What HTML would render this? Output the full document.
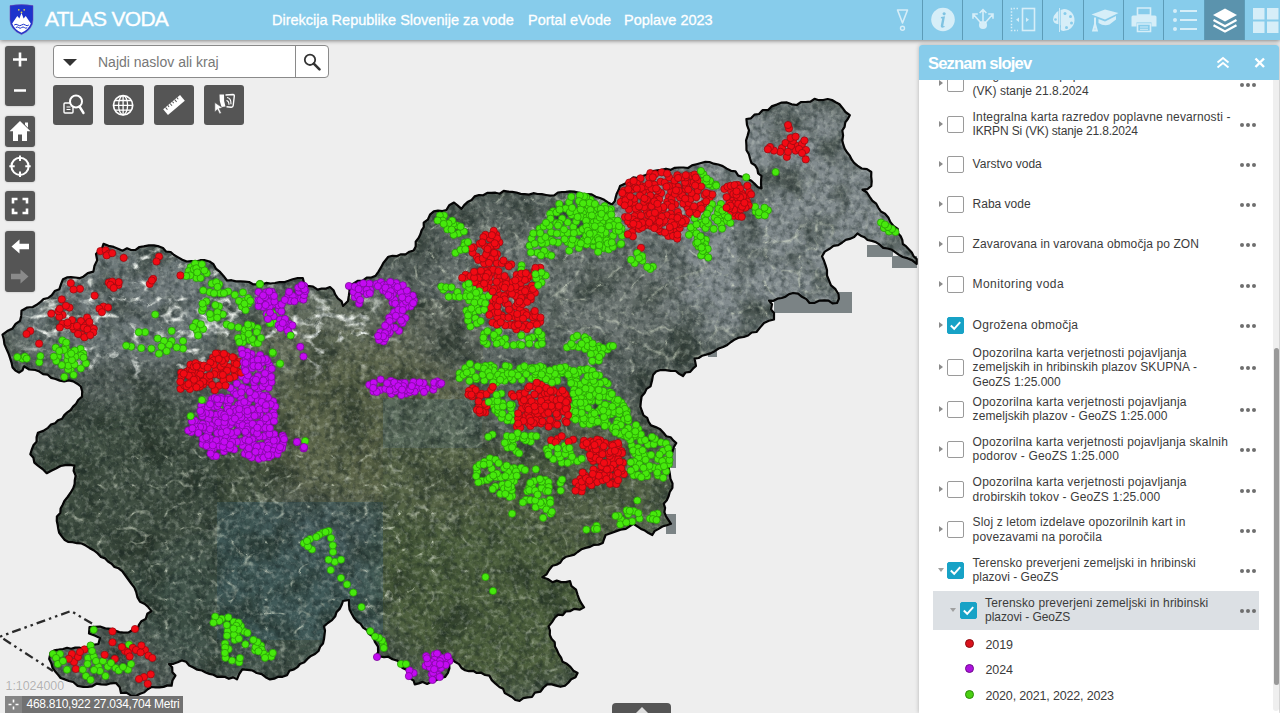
<!DOCTYPE html>
<html lang="sl">
<head>
<meta charset="utf-8">
<title>Atlas voda</title>
<style>
*{box-sizing:border-box;margin:0;padding:0}
html,body{width:1280px;height:713px;overflow:hidden;background:#eeeeee;font-family:"Liberation Sans",sans-serif;}
#app{position:relative;width:1280px;height:713px;overflow:hidden;background:#eeeeee}
#map{position:absolute;left:0;top:0;width:1280px;height:713px}
#hdr{position:absolute;left:0;top:0;width:1280px;height:40px;background:#87cceb;box-shadow:0 1px 4px rgba(0,0,0,.45);z-index:5}
#hdr .title{position:absolute;left:45px;top:5.6px;font-size:21px;line-height:26px;color:#fff;white-space:nowrap;letter-spacing:-0.72px;-webkit-text-stroke:0.35px #fff}
#hdr .lnk{position:absolute;top:11px;font-size:14.5px;line-height:18px;color:#fff;white-space:nowrap;-webkit-text-stroke:0.3px #fff}
.hic{position:absolute;top:0;width:40px;height:40px;border-left:1px solid #5d9cb8}
.hic svg{position:absolute;left:0;top:0;width:40px;height:40px}
.hic.act{background:#5b93ad}
.lb{position:absolute;left:5px;width:30px;background:#555;border-radius:3px;box-shadow:0 0 2px rgba(0,0,0,.3)}
.lb svg{position:absolute;left:0}
.tb{position:absolute;top:85px;width:40px;height:40px;background:#555;border-radius:3px}
.tb svg{position:absolute;left:0;top:0}
#srch{position:absolute;left:53px;top:45px;width:276px;height:33px;background:#fff;border:1px solid #8a8a8a;border-radius:4px}
#srch .ph{position:absolute;left:44px;top:7px;font-size:14px;line-height:18px;color:#777;white-space:nowrap}
#srch .dv{position:absolute;left:241px;top:0;width:1px;height:31px;background:#8a8a8a}
#panel{position:absolute;left:919px;top:45px;width:360px;height:668px;background:#fff;border-radius:3px 3px 0 0;box-shadow:0 0 4px rgba(0,0,0,.25);overflow:hidden;z-index:4}
#panel .ph{position:absolute;left:0;top:0;width:360px;height:35px;background:#87cceb;z-index:2}
#panel .ph .tt{position:absolute;left:9px;top:8.8px;font-size:16.6px;line-height:20px;font-weight:bold;color:#fff;white-space:nowrap;letter-spacing:-0.85px}
.row{position:absolute;left:0;width:354px;display:block}
.row .ar{position:absolute;left:20px;width:0;height:0;border-left:4px solid #8a8a8a;border-top:3.5px solid transparent;border-bottom:3.5px solid transparent}
.row .ad{position:absolute;width:0;height:0;border-top:4px solid #a0a0a0;border-left:3.5px solid transparent;border-right:3.5px solid transparent}
.cb{position:absolute;width:17px;height:17px;border:1px solid #9a9a9a;border-radius:2px;background:#fff}
.cb.on{background:#17a2c6;border-color:#17a2c6}
.cb svg{position:absolute;left:-1px;top:-1px}
.tx{position:absolute;font-size:12px;line-height:14.4px;color:#3b3b3b;white-space:nowrap}
.tx span{display:block}
.dd{position:absolute;left:320.5px;width:17px;height:5px}
.dd i{position:absolute;top:0;width:4px;height:4px;border-radius:2px;background:#6e6e6e}
.lg{position:absolute;left:46px;width:9px;height:9px;border-radius:5px}
.lt{position:absolute;left:66.5px;font-size:12.5px;line-height:15px;color:#3b3b3b;white-space:nowrap}
#sbt{position:absolute;left:354px;top:35px;width:6px;height:631px;background:#efefef;border-radius:0 0 3px 3px}
#sbh{position:absolute;left:354.5px;top:303px;width:5.5px;height:337px;background:#999;border-radius:3px}
#scale{position:absolute;left:5.5px;top:678.5px;font-size:12.4px;line-height:15px;color:#b2b2b2;white-space:nowrap;text-shadow:0 0 1px #fff}
#coord{position:absolute;left:5px;top:696px;width:178px;height:17px;background:#717171;color:#fff;font-size:12px;line-height:17px;white-space:nowrap}
#coord .ic{position:absolute;left:0;top:0;width:17px;height:17px;background:#858585}
#coord .v{position:absolute;left:21.5px;top:0;letter-spacing:-0.26px}
#btab{position:absolute;left:612px;top:703px;width:59px;height:12px;background:#555;border-radius:4px 4px 0 0}
#btab:after{content:"";position:absolute;left:24px;top:4px;border-bottom:6px solid #ddd;border-left:6px solid transparent;border-right:6px solid transparent}
circle.r{fill:#f20a14;stroke:#9c0a10;stroke-width:.8}
circle.g{fill:#46e90c;stroke:#2a9a08;stroke-width:.8}
circle.p{fill:#c40af2;stroke:#7d0a9c;stroke-width:.8}
</style>
</head>
<body>
<div id="app">
<svg id="map" width="1280" height="713" viewBox="0 0 1280 713"><defs>
<clipPath id="slo"><path d="M2.5 334.7 L7.3 331.1 L12.6 328.4 L15.6 323.9 L20.0 320.9 L21.2 315.9 L21.5 310.8 L26.7 307.7 L32.8 307.0 L36.7 304.8 L40.2 302.2 L43.5 299.1 L48.0 298.0 L51.8 295.1 L54.7 291.1 L59.3 289.3 L61.0 284.2 L63.0 279.2 L66.9 277.4 L71.0 277.0 L75.2 277.5 L79.4 278.2 L83.3 276.7 L87.8 273.1 L93.4 271.6 L94.5 265.7 L97.2 260.3 L96.0 254.0 L98.8 250.9 L102.1 248.1 L103.5 243.9 L108.5 245.8 L113.7 246.9 L118.6 248.9 L122.6 250.7 L127.0 248.3 L131.0 250.0 L135.6 249.8 L139.4 247.0 L143.8 246.4 L148.9 245.3 L153.9 245.3 L159.0 246.4 L163.0 248.1 L166.0 251.5 L170.7 252.0 L174.0 255.0 L178.2 257.4 L182.3 259.7 L186.8 261.5 L191.3 261.1 L195.9 261.6 L200.4 260.2 L205.0 260.2 L209.5 261.5 L213.5 264.2 L215.9 268.6 L219.6 271.6 L223.5 275.9 L227.0 280.5 L231.5 280.2 L235.9 281.4 L240.4 281.3 L244.8 281.7 L249.1 282.0 L253.0 284.3 L257.4 284.3 L261.8 284.6 L266.1 282.9 L270.6 283.5 L275.0 283.0 L279.4 282.1 L284.1 282.2 L288.4 280.8 L292.7 279.2 L297.7 278.0 L302.8 278.0 L304.0 282.7 L307.6 285.8 L313.1 286.6 L317.7 289.6 L321.7 288.5 L326.1 288.6 L330.0 287.0 L333.5 290.2 L335.3 294.6 L337.9 298.4 L341.6 301.4 L343.0 306.0 L348.0 301.0 L348.8 296.0 L349.5 290.9 L349.0 285.8 L353.6 283.5 L358.0 280.8 L362.7 280.6 L366.7 277.7 L371.4 277.5 L375.7 275.7 L378.5 271.6 L381.0 267.4 L383.3 263.0 L388.3 256.8 L392.5 255.8 L397.0 256.1 L401.0 254.3 L405.6 254.3 L409.4 251.7 L413.6 250.5 L415.7 246.5 L415.7 241.6 L418.6 237.9 L420.4 234.3 L421.6 230.4 L423.8 227.0 L423.7 222.7 L427.8 219.6 L430.0 214.7 L433.8 211.4 L438.0 210.6 L442.3 211.0 L446.4 210.0 L449.2 205.2 L454.0 202.5 L457.8 205.6 L461.5 208.8 L464.2 205.1 L467.5 202.1 L471.6 200.0 L474.6 196.4 L479.0 195.0 L483.2 195.3 L487.2 192.9 L491.3 192.8 L495.5 192.7 L499.8 193.7 L503.7 190.8 L508.0 191.6 L512.2 191.8 L516.4 192.5 L520.6 193.9 L524.8 194.1 L529.0 194.6 L533.4 193.2 L537.6 194.0 L541.8 194.2 L546.0 195.0 L550.1 195.7 L554.2 195.4 L557.9 192.5 L561.9 192.1 L565.9 191.8 L569.9 191.3 L574.0 191.6 L578.3 192.6 L582.6 194.0 L587.2 194.1 L591.7 194.4 L595.7 196.7 L600.0 198.0 L604.2 199.8 L607.9 202.5 L612.0 204.5 L614.8 201.3 L615.7 197.3 L616.8 193.4 L618.7 189.8 L620.0 186.0 L625.3 183.5 L630.0 180.0 L633.3 177.3 L638.1 178.1 L641.8 176.3 L645.7 175.0 L649.5 173.3 L653.0 171.0 L657.3 170.3 L661.7 169.9 L666.0 168.7 L670.5 169.9 L674.8 167.8 L679.1 167.5 L683.6 167.5 L688.0 168.0 L692.0 165.4 L696.5 164.2 L701.0 163.0 L705.3 161.9 L709.5 162.0 L713.6 163.7 L718.3 164.5 L722.8 166.1 L726.8 168.6 L731.0 170.8 L735.5 171.4 L738.2 175.6 L742.4 176.7 L746.4 178.3 L750.8 180.4 L754.4 183.5 L757.7 187.0 L761.5 188.4 L761.0 184.2 L761.1 180.0 L761.5 175.8 L758.1 173.3 L757.3 168.8 L755.1 165.3 L751.4 163.0 L750.1 158.7 L748.9 154.3 L746.5 150.2 L746.4 145.5 L746.1 140.3 L747.7 135.4 L749.0 130.4 L747.0 124.9 L746.4 119.0 L751.0 118.3 L754.4 114.7 L759.0 114.0 L762.5 110.2 L768.1 110.1 L771.6 106.4 L776.7 104.6 L781.7 102.6 L786.9 102.4 L791.7 104.3 L796.8 105.0 L800.8 102.1 L805.7 102.0 L810.5 101.7 L814.5 98.8 L818.8 100.2 L823.2 100.0 L827.7 99.0 L832.0 100.0 L835.7 102.2 L839.5 104.3 L842.3 107.7 L845.5 112.0 L849.8 115.2 L847.8 119.0 L845.3 122.4 L844.6 126.8 L842.3 130.4 L843.1 135.4 L842.3 140.5 L843.3 144.7 L844.7 148.7 L847.0 152.3 L849.8 155.6 L851.6 159.5 L854.1 162.9 L857.4 165.7 L861.7 168.5 L867.0 169.2 L871.3 172.0 L871.2 176.7 L871.7 181.3 L871.3 186.0 L867.4 189.2 L862.5 189.7 L866.9 192.5 L869.7 196.8 L872.6 201.0 L876.2 203.7 L878.4 207.8 L880.9 211.5 L885.0 213.7 L888.3 217.4 L890.4 222.1 L893.5 226.0 L897.8 228.8 L897.8 233.0 L900.7 236.3 L902.3 239.9 L902.8 244.0 L906.2 246.4 L909.0 249.4 L911.8 252.4 L913.6 256.3 L916.7 259.0 L916.7 264.0 L912.6 260.6 L907.9 258.4 L902.8 257.0 L899.0 254.9 L895.5 252.4 L891.9 249.8 L887.7 248.5 L883.2 247.9 L879.8 244.7 L876.1 242.3 L871.9 240.9 L867.5 240.0 L864.5 237.2 L860.7 235.7 L857.4 233.5 L854.2 237.0 L849.8 238.9 L845.7 239.9 L842.3 242.5 L838.3 245.1 L833.4 245.9 L829.6 248.8 L824.8 251.6 L822.0 256.4 L824.0 260.8 L825.6 265.4 L827.0 270.0 L827.0 275.5 L829.0 280.4 L831.0 285.4 L835.5 289.2 L838.5 294.3 L838.9 298.8 L837.0 303.0 L832.5 303.4 L828.5 300.6 L824.1 300.3 L819.6 300.6 L814.8 302.8 L809.5 303.0 L806.4 299.1 L802.0 296.8 L798.1 293.6 L793.0 293.0 L789.0 294.2 L785.6 296.7 L781.7 298.0 L777.4 298.7 L773.5 300.8 L769.0 300.6 L772.0 304.2 L771.0 309.4 L774.0 313.0 L774.0 319.5 L768.9 320.8 L764.0 323.0 L760.2 327.4 L756.5 332.0 L751.8 332.5 L748.1 335.5 L743.8 337.0 L739.1 337.6 L734.9 339.4 L731.0 342.0 L727.3 344.9 L723.1 347.0 L718.6 348.5 L714.7 351.2 L710.5 353.4 L706.0 354.8 L702.1 355.8 L698.6 358.0 L694.6 358.6 L696.0 366.0 L692.9 368.7 L690.2 371.9 L685.5 372.5 L683.0 376.0 L679.1 373.9 L675.7 371.0 L670.7 370.8 L665.6 370.1 L660.6 370.0 L656.1 371.5 L653.0 375.0 L652.0 380.8 L650.5 386.4 L646.6 388.9 L644.6 393.1 L641.6 396.5 L640.9 401.5 L640.4 406.6 L641.9 411.0 L643.5 415.3 L647.2 417.8 L648.6 421.9 L651.0 425.4 L655.7 427.1 L660.2 429.2 L663.7 433.0 L666.3 436.2 L670.6 437.2 L673.2 440.4 L676.3 443.0 L673.9 447.0 L672.6 451.4 L671.0 455.7 L670.7 460.0 L669.4 464.1 L668.7 468.3 L669.8 473.4 L670.4 478.6 L672.5 483.5 L672.4 488.0 L669.8 491.8 L668.7 496.0 L666.8 500.3 L663.7 503.7 L665.1 507.8 L664.4 512.2 L666.0 516.3 L668.5 520.1 L671.0 523.8 L666.8 525.3 L662.4 526.5 L658.6 528.9 L654.6 531.1 L652.3 535.0 L648.5 533.1 L644.9 530.6 L641.0 528.9 L637.2 526.3 L633.4 523.8 L629.6 526.3 L625.8 528.9 L620.6 529.6 L615.7 531.4 L610.7 533.3 L605.6 535.0 L604.1 539.0 L602.8 543.0 L598.6 544.6 L594.0 544.8 L590.0 546.9 L585.6 547.9 L581.4 549.3 L577.6 552.0 L574.3 554.6 L570.3 555.8 L566.2 556.7 L562.7 559.0 L560.1 562.8 L556.5 564.8 L552.4 565.8 L549.2 569.7 L546.6 574.3 L542.3 577.2 L547.7 579.0 L552.4 582.2 L556.7 580.6 L561.2 582.1 L565.7 582.1 L570.0 581.0 L571.5 586.2 L576.0 589.7 L577.6 594.8 L579.2 599.3 L581.4 603.4 L584.0 607.4 L579.6 609.7 L574.4 608.8 L570.0 611.2 L565.7 611.5 L562.8 615.1 L558.2 614.7 L555.0 617.5 L552.0 622.1 L548.6 626.4 L549.9 630.4 L549.8 634.9 L551.5 638.8 L554.7 642.3 L555.0 646.6 L557.1 650.3 L558.7 654.2 L561.1 657.7 L562.5 661.7 L566.8 663.8 L570.4 666.9 L573.4 670.7 L577.6 673.0 L575.5 677.2 L571.2 679.2 L568.3 682.7 L565.0 685.7 L560.5 686.8 L556.1 685.6 L551.8 684.4 L547.3 684.4 L543.5 687.5 L540.5 691.7 L534.9 692.7 L532.0 697.0 L527.6 697.4 L523.3 698.2 L519.6 700.8 L515.3 700.0 L512.0 697.0 L508.4 695.1 L504.8 693.1 L503.1 688.8 L499.4 687.0 L495.5 683.7 L491.8 680.1 L489.3 675.6 L485.1 675.0 L481.1 672.7 L476.7 673.0 L473.2 670.8 L468.9 671.2 L465.0 670.2 L461.5 668.0 L459.0 664.1 L454.9 661.8 L451.4 659.0 L449.2 663.3 L449.4 668.4 L447.9 672.9 L445.0 677.0 L440.1 678.1 L435.7 680.5 L431.0 682.0 L427.1 683.9 L422.7 681.9 L418.8 683.4 L414.8 684.4 L413.5 680.5 L409.5 678.1 L408.5 674.0 L406.9 670.0 L402.5 668.1 L401.0 664.0 L397.3 660.6 L392.5 659.3 L388.3 656.7 L384.1 657.2 L379.9 656.5 L375.7 656.7 L378.1 651.9 L378.0 646.6 L374.9 641.9 L373.0 636.5 L369.1 634.1 L366.9 630.1 L363.1 627.6 L360.6 623.9 L356.8 621.3 L353.9 617.8 L351.7 613.8 L349.5 609.5 L349.0 604.8 L349.0 600.0 L343.0 601.0 L341.6 605.1 L339.7 608.9 L336.5 612.1 L335.3 616.3 L332.0 620.1 L327.8 623.0 L324.0 626.4 L325.0 630.6 L324.5 634.8 L324.0 639.0 L323.0 643.5 L320.1 646.9 L318.5 651.0 L315.0 654.0 L310.9 655.9 L307.4 658.9 L304.3 662.3 L300.0 664.0 L297.8 666.8 L294.0 669.4 L289.5 670.7 L287.0 675.3 L282.6 676.8 L278.2 676.7 L274.2 678.7 L270.0 679.4 L265.6 677.2 L261.7 674.1 L256.7 673.0 L252.4 670.5 L247.4 669.9 L242.3 669.3 L239.2 674.1 L237.0 679.4 L233.2 677.4 L228.9 678.8 L225.1 676.9 L221.1 676.7 L217.0 676.8 L213.4 674.8 L209.4 673.9 L205.6 672.5 L202.0 670.5 L197.3 669.7 L193.4 667.5 L189.2 665.6 L186.1 661.8 L181.7 660.4 L177.7 662.3 L173.5 663.8 L169.0 664.0 L172.2 667.3 L172.4 672.2 L175.4 675.6 L172.5 680.3 L171.6 685.7 L167.5 685.4 L163.6 686.9 L159.5 687.3 L155.5 687.4 L151.4 687.0 L147.7 689.3 L144.4 692.3 L140.2 693.7 L136.3 695.8 L131.1 695.6 L126.3 692.6 L121.0 693.0 L119.8 687.4 L116.0 683.0 L111.0 683.3 L106.1 684.7 L101.0 684.4 L96.4 683.7 L92.2 686.3 L87.8 686.8 L83.3 687.0 L77.6 685.8 L73.2 682.0 L68.9 681.0 L64.8 679.4 L60.6 678.0 L58.1 674.9 L55.5 671.8 L52.6 667.9 L51.3 663.3 L49.2 659.0 L50.5 653.0 L54.2 650.3 L58.6 649.7 L63.0 649.0 L67.1 647.8 L71.1 648.7 L75.2 647.6 L79.2 647.6 L83.3 649.0 L88.1 646.8 L93.1 644.9 L98.4 644.0 L100.0 638.0 L94.6 635.5 L89.0 633.5 L89.5 627.0 L94.8 626.8 L100.0 626.5 L105.3 628.4 L111.0 628.9 L115.1 630.6 L119.3 632.1 L123.7 632.7 L128.6 632.5 L132.8 629.8 L137.5 628.9 L138.9 624.9 L141.3 621.3 L145.7 619.0 L147.3 613.8 L151.4 611.2 L148.4 607.3 L144.8 604.0 L140.0 601.8 L137.5 597.4 L136.3 592.4 L134.4 587.6 L131.2 583.5 L128.3 579.5 L125.4 575.5 L122.5 571.5 L118.6 568.3 L114.5 567.0 L111.6 563.7 L108.0 561.5 L105.1 558.4 L101.0 557.0 L97.7 553.4 L94.0 550.5 L89.8 548.2 L85.8 545.6 L81.6 543.5 L77.0 543.2 L72.6 542.2 L68.0 541.8 L64.4 539.7 L61.8 536.3 L59.2 532.9 L58.3 529.0 L57.7 525.0 L56.8 521.0 L56.9 516.5 L60.3 513.0 L60.6 508.5 L62.7 504.8 L64.4 501.0 L67.6 497.0 L70.6 492.7 L73.2 488.3 L74.6 484.2 L74.8 479.9 L75.7 475.7 L73.6 470.8 L74.4 465.6 L69.8 464.8 L65.2 465.1 L60.6 466.0 L56.0 468.4 L51.3 470.7 L46.7 473.2 L42.6 469.0 L37.9 465.6 L34.3 462.6 L33.4 457.7 L30.3 454.3 L31.7 449.7 L33.4 445.3 L36.6 441.6 L36.6 437.1 L37.9 432.8 L43.3 430.9 L48.0 427.8 L50.8 424.6 L55.1 423.3 L58.0 420.2 L62.1 418.8 L64.3 415.1 L67.3 412.3 L70.7 410.0 L73.1 406.6 L76.1 403.7 L78.2 400.0 L82.0 396.6 L82.2 391.5 L80.8 386.5 L77.2 383.7 L73.2 381.4 L68.8 380.4 L64.2 381.5 L59.8 380.6 L55.5 379.0 L51.2 377.9 L47.7 374.7 L43.1 374.1 L39.4 371.6 L35.3 370.0 L29.2 369.5 L24.0 366.3 L22.5 370.3 L19.0 372.6 L15.4 370.6 L12.6 367.5 L11.5 362.6 L10.0 357.9 L8.4 353.2 L6.3 348.6 L4.4 344.1 L3.8 339.3Z"/></clipPath>
<filter id="grain" x="0" y="0" width="100%" height="100%" color-interpolation-filters="sRGB"><feTurbulence type="fractalNoise" baseFrequency="0.16" numOctaves="3" seed="3"/><feColorMatrix type="matrix" values="0 0 0 0 0.05  0 0 0 0 0.1  0 0 0 0 0.1  2.6 0 0 0 -1.1"/></filter>
<filter id="grainw" x="0" y="0" width="100%" height="100%" color-interpolation-filters="sRGB"><feTurbulence type="fractalNoise" baseFrequency="0.2" numOctaves="3" seed="17"/><feColorMatrix type="matrix" values="0 0 0 0 0.9  0 0 0 0 0.93  0 0 0 0 0.88  0 2.8 0 0 -1.3"/></filter>
<filter id="veins" x="0" y="0" width="100%" height="100%" color-interpolation-filters="sRGB"><feTurbulence type="turbulence" baseFrequency="0.022 0.03" numOctaves="4" seed="8" result="t"/><feColorMatrix in="t" type="matrix" values="0 0 0 0 0.93  0 0 0 0 0.95  0 0 0 0 0.93  -7 0 0 0 1.4" result="v"/><feGaussianBlur in="SourceAlpha" stdDeviation="12" result="m"/><feComposite in="v" in2="m" operator="in"/></filter>
<filter id="veins2" x="0" y="0" width="100%" height="100%" color-interpolation-filters="sRGB"><feTurbulence type="turbulence" baseFrequency="0.03 0.035" numOctaves="3" seed="21" result="t"/><feColorMatrix in="t" type="matrix" values="0 0 0 0 0.85  0 0 0 0 0.88  0 0 0 0 0.8  -8 0 0 0 1.05" result="v"/><feGaussianBlur in="SourceAlpha" stdDeviation="14" result="m"/><feComposite in="v" in2="m" operator="in"/></filter>
<filter id="dark" x="0" y="0" width="100%" height="100%" color-interpolation-filters="sRGB"><feTurbulence type="fractalNoise" baseFrequency="0.03" numOctaves="3" seed="5" result="t"/><feColorMatrix in="t" type="matrix" values="0 0 0 0 0.12  0 0 0 0 0.17  0 0 0 0 0.13  0 3 0 0 -1.35"/></filter>
<filter id="bl"><feGaussianBlur stdDeviation="14"/></filter>
</defs><g fill="#7b8385"><rect x="867" y="245" width="26" height="12"/><rect x="892" y="256" width="25" height="12"/><rect x="774" y="292" width="78" height="21"/><rect x="708" y="351" width="9" height="6"/><rect x="671" y="448" width="5" height="20"/><rect x="666" y="514" width="10" height="20"/><rect x="552" y="582" width="18" height="16"/></g><g clip-path="url(#slo)"><rect x="0" y="90" width="925" height="623" fill="#59635f"/><g filter="url(#bl)"><ellipse cx="130" cy="300" rx="130" ry="60" fill="#6f7a7c"/><ellipse cx="330" cy="340" rx="90" ry="50" fill="#687162"/><ellipse cx="370" cy="430" rx="110" ry="80" fill="#5e6850"/><ellipse cx="760" cy="220" rx="170" ry="120" fill="#828b8e"/><ellipse cx="560" cy="290" rx="120" ry="70" fill="#6c7572"/><ellipse cx="150" cy="500" rx="130" ry="100" fill="#3f4f42"/><ellipse cx="250" cy="610" rx="120" ry="70" fill="#43544b"/><ellipse cx="500" cy="570" rx="130" ry="120" fill="#4e5e3e"/><ellipse cx="430" cy="470" rx="80" ry="50" fill="#5c664c"/><ellipse cx="600" cy="480" rx="70" ry="70" fill="#56624c"/></g><rect x="217" y="502" width="166" height="138" fill="#3f5d62" fill-opacity=".6"/><rect x="383" y="399" width="99" height="49" fill="#58706f" fill-opacity=".45"/><rect x="383" y="448" width="300" height="270" fill="#4c6038" fill-opacity=".28"/><rect x="217" y="330" width="166" height="172" fill="#5c6138" fill-opacity=".16"/><rect x="383" y="300" width="100" height="99" fill="#5c6138" fill-opacity=".15"/><rect x="0" y="90" width="925" height="623" filter="url(#dark)" opacity=".55"/><g filter="url(#veins)"><ellipse cx="150" cy="310" rx="150" ry="70"/><ellipse cx="330" cy="330" rx="70" ry="40"/></g><g filter="url(#veins2)" opacity=".6"><ellipse cx="250" cy="540" rx="200" ry="120"/><ellipse cx="640" cy="280" rx="260" ry="120"/></g><g filter="url(#veins2)" opacity=".38"><ellipse cx="530" cy="540" rx="160" ry="170"/></g><rect x="0" y="90" width="925" height="623" filter="url(#grain)" opacity=".42"/><rect x="0" y="90" width="925" height="623" filter="url(#grainw)" opacity=".28"/></g><path d="M2.5 334.7 L7.3 331.1 L12.6 328.4 L15.6 323.9 L20.0 320.9 L21.2 315.9 L21.5 310.8 L26.7 307.7 L32.8 307.0 L36.7 304.8 L40.2 302.2 L43.5 299.1 L48.0 298.0 L51.8 295.1 L54.7 291.1 L59.3 289.3 L61.0 284.2 L63.0 279.2 L66.9 277.4 L71.0 277.0 L75.2 277.5 L79.4 278.2 L83.3 276.7 L87.8 273.1 L93.4 271.6 L94.5 265.7 L97.2 260.3 L96.0 254.0 L98.8 250.9 L102.1 248.1 L103.5 243.9 L108.5 245.8 L113.7 246.9 L118.6 248.9 L122.6 250.7 L127.0 248.3 L131.0 250.0 L135.6 249.8 L139.4 247.0 L143.8 246.4 L148.9 245.3 L153.9 245.3 L159.0 246.4 L163.0 248.1 L166.0 251.5 L170.7 252.0 L174.0 255.0 L178.2 257.4 L182.3 259.7 L186.8 261.5 L191.3 261.1 L195.9 261.6 L200.4 260.2 L205.0 260.2 L209.5 261.5 L213.5 264.2 L215.9 268.6 L219.6 271.6 L223.5 275.9 L227.0 280.5 L231.5 280.2 L235.9 281.4 L240.4 281.3 L244.8 281.7 L249.1 282.0 L253.0 284.3 L257.4 284.3 L261.8 284.6 L266.1 282.9 L270.6 283.5 L275.0 283.0 L279.4 282.1 L284.1 282.2 L288.4 280.8 L292.7 279.2 L297.7 278.0 L302.8 278.0 L304.0 282.7 L307.6 285.8 L313.1 286.6 L317.7 289.6 L321.7 288.5 L326.1 288.6 L330.0 287.0 L333.5 290.2 L335.3 294.6 L337.9 298.4 L341.6 301.4 L343.0 306.0 L348.0 301.0 L348.8 296.0 L349.5 290.9 L349.0 285.8 L353.6 283.5 L358.0 280.8 L362.7 280.6 L366.7 277.7 L371.4 277.5 L375.7 275.7 L378.5 271.6 L381.0 267.4 L383.3 263.0 L388.3 256.8 L392.5 255.8 L397.0 256.1 L401.0 254.3 L405.6 254.3 L409.4 251.7 L413.6 250.5 L415.7 246.5 L415.7 241.6 L418.6 237.9 L420.4 234.3 L421.6 230.4 L423.8 227.0 L423.7 222.7 L427.8 219.6 L430.0 214.7 L433.8 211.4 L438.0 210.6 L442.3 211.0 L446.4 210.0 L449.2 205.2 L454.0 202.5 L457.8 205.6 L461.5 208.8 L464.2 205.1 L467.5 202.1 L471.6 200.0 L474.6 196.4 L479.0 195.0 L483.2 195.3 L487.2 192.9 L491.3 192.8 L495.5 192.7 L499.8 193.7 L503.7 190.8 L508.0 191.6 L512.2 191.8 L516.4 192.5 L520.6 193.9 L524.8 194.1 L529.0 194.6 L533.4 193.2 L537.6 194.0 L541.8 194.2 L546.0 195.0 L550.1 195.7 L554.2 195.4 L557.9 192.5 L561.9 192.1 L565.9 191.8 L569.9 191.3 L574.0 191.6 L578.3 192.6 L582.6 194.0 L587.2 194.1 L591.7 194.4 L595.7 196.7 L600.0 198.0 L604.2 199.8 L607.9 202.5 L612.0 204.5 L614.8 201.3 L615.7 197.3 L616.8 193.4 L618.7 189.8 L620.0 186.0 L625.3 183.5 L630.0 180.0 L633.3 177.3 L638.1 178.1 L641.8 176.3 L645.7 175.0 L649.5 173.3 L653.0 171.0 L657.3 170.3 L661.7 169.9 L666.0 168.7 L670.5 169.9 L674.8 167.8 L679.1 167.5 L683.6 167.5 L688.0 168.0 L692.0 165.4 L696.5 164.2 L701.0 163.0 L705.3 161.9 L709.5 162.0 L713.6 163.7 L718.3 164.5 L722.8 166.1 L726.8 168.6 L731.0 170.8 L735.5 171.4 L738.2 175.6 L742.4 176.7 L746.4 178.3 L750.8 180.4 L754.4 183.5 L757.7 187.0 L761.5 188.4 L761.0 184.2 L761.1 180.0 L761.5 175.8 L758.1 173.3 L757.3 168.8 L755.1 165.3 L751.4 163.0 L750.1 158.7 L748.9 154.3 L746.5 150.2 L746.4 145.5 L746.1 140.3 L747.7 135.4 L749.0 130.4 L747.0 124.9 L746.4 119.0 L751.0 118.3 L754.4 114.7 L759.0 114.0 L762.5 110.2 L768.1 110.1 L771.6 106.4 L776.7 104.6 L781.7 102.6 L786.9 102.4 L791.7 104.3 L796.8 105.0 L800.8 102.1 L805.7 102.0 L810.5 101.7 L814.5 98.8 L818.8 100.2 L823.2 100.0 L827.7 99.0 L832.0 100.0 L835.7 102.2 L839.5 104.3 L842.3 107.7 L845.5 112.0 L849.8 115.2 L847.8 119.0 L845.3 122.4 L844.6 126.8 L842.3 130.4 L843.1 135.4 L842.3 140.5 L843.3 144.7 L844.7 148.7 L847.0 152.3 L849.8 155.6 L851.6 159.5 L854.1 162.9 L857.4 165.7 L861.7 168.5 L867.0 169.2 L871.3 172.0 L871.2 176.7 L871.7 181.3 L871.3 186.0 L867.4 189.2 L862.5 189.7 L866.9 192.5 L869.7 196.8 L872.6 201.0 L876.2 203.7 L878.4 207.8 L880.9 211.5 L885.0 213.7 L888.3 217.4 L890.4 222.1 L893.5 226.0 L897.8 228.8 L897.8 233.0 L900.7 236.3 L902.3 239.9 L902.8 244.0 L906.2 246.4 L909.0 249.4 L911.8 252.4 L913.6 256.3 L916.7 259.0 L916.7 264.0 L912.6 260.6 L907.9 258.4 L902.8 257.0 L899.0 254.9 L895.5 252.4 L891.9 249.8 L887.7 248.5 L883.2 247.9 L879.8 244.7 L876.1 242.3 L871.9 240.9 L867.5 240.0 L864.5 237.2 L860.7 235.7 L857.4 233.5 L854.2 237.0 L849.8 238.9 L845.7 239.9 L842.3 242.5 L838.3 245.1 L833.4 245.9 L829.6 248.8 L824.8 251.6 L822.0 256.4 L824.0 260.8 L825.6 265.4 L827.0 270.0 L827.0 275.5 L829.0 280.4 L831.0 285.4 L835.5 289.2 L838.5 294.3 L838.9 298.8 L837.0 303.0 L832.5 303.4 L828.5 300.6 L824.1 300.3 L819.6 300.6 L814.8 302.8 L809.5 303.0 L806.4 299.1 L802.0 296.8 L798.1 293.6 L793.0 293.0 L789.0 294.2 L785.6 296.7 L781.7 298.0 L777.4 298.7 L773.5 300.8 L769.0 300.6 L772.0 304.2 L771.0 309.4 L774.0 313.0 L774.0 319.5 L768.9 320.8 L764.0 323.0 L760.2 327.4 L756.5 332.0 L751.8 332.5 L748.1 335.5 L743.8 337.0 L739.1 337.6 L734.9 339.4 L731.0 342.0 L727.3 344.9 L723.1 347.0 L718.6 348.5 L714.7 351.2 L710.5 353.4 L706.0 354.8 L702.1 355.8 L698.6 358.0 L694.6 358.6 L696.0 366.0 L692.9 368.7 L690.2 371.9 L685.5 372.5 L683.0 376.0 L679.1 373.9 L675.7 371.0 L670.7 370.8 L665.6 370.1 L660.6 370.0 L656.1 371.5 L653.0 375.0 L652.0 380.8 L650.5 386.4 L646.6 388.9 L644.6 393.1 L641.6 396.5 L640.9 401.5 L640.4 406.6 L641.9 411.0 L643.5 415.3 L647.2 417.8 L648.6 421.9 L651.0 425.4 L655.7 427.1 L660.2 429.2 L663.7 433.0 L666.3 436.2 L670.6 437.2 L673.2 440.4 L676.3 443.0 L673.9 447.0 L672.6 451.4 L671.0 455.7 L670.7 460.0 L669.4 464.1 L668.7 468.3 L669.8 473.4 L670.4 478.6 L672.5 483.5 L672.4 488.0 L669.8 491.8 L668.7 496.0 L666.8 500.3 L663.7 503.7 L665.1 507.8 L664.4 512.2 L666.0 516.3 L668.5 520.1 L671.0 523.8 L666.8 525.3 L662.4 526.5 L658.6 528.9 L654.6 531.1 L652.3 535.0 L648.5 533.1 L644.9 530.6 L641.0 528.9 L637.2 526.3 L633.4 523.8 L629.6 526.3 L625.8 528.9 L620.6 529.6 L615.7 531.4 L610.7 533.3 L605.6 535.0 L604.1 539.0 L602.8 543.0 L598.6 544.6 L594.0 544.8 L590.0 546.9 L585.6 547.9 L581.4 549.3 L577.6 552.0 L574.3 554.6 L570.3 555.8 L566.2 556.7 L562.7 559.0 L560.1 562.8 L556.5 564.8 L552.4 565.8 L549.2 569.7 L546.6 574.3 L542.3 577.2 L547.7 579.0 L552.4 582.2 L556.7 580.6 L561.2 582.1 L565.7 582.1 L570.0 581.0 L571.5 586.2 L576.0 589.7 L577.6 594.8 L579.2 599.3 L581.4 603.4 L584.0 607.4 L579.6 609.7 L574.4 608.8 L570.0 611.2 L565.7 611.5 L562.8 615.1 L558.2 614.7 L555.0 617.5 L552.0 622.1 L548.6 626.4 L549.9 630.4 L549.8 634.9 L551.5 638.8 L554.7 642.3 L555.0 646.6 L557.1 650.3 L558.7 654.2 L561.1 657.7 L562.5 661.7 L566.8 663.8 L570.4 666.9 L573.4 670.7 L577.6 673.0 L575.5 677.2 L571.2 679.2 L568.3 682.7 L565.0 685.7 L560.5 686.8 L556.1 685.6 L551.8 684.4 L547.3 684.4 L543.5 687.5 L540.5 691.7 L534.9 692.7 L532.0 697.0 L527.6 697.4 L523.3 698.2 L519.6 700.8 L515.3 700.0 L512.0 697.0 L508.4 695.1 L504.8 693.1 L503.1 688.8 L499.4 687.0 L495.5 683.7 L491.8 680.1 L489.3 675.6 L485.1 675.0 L481.1 672.7 L476.7 673.0 L473.2 670.8 L468.9 671.2 L465.0 670.2 L461.5 668.0 L459.0 664.1 L454.9 661.8 L451.4 659.0 L449.2 663.3 L449.4 668.4 L447.9 672.9 L445.0 677.0 L440.1 678.1 L435.7 680.5 L431.0 682.0 L427.1 683.9 L422.7 681.9 L418.8 683.4 L414.8 684.4 L413.5 680.5 L409.5 678.1 L408.5 674.0 L406.9 670.0 L402.5 668.1 L401.0 664.0 L397.3 660.6 L392.5 659.3 L388.3 656.7 L384.1 657.2 L379.9 656.5 L375.7 656.7 L378.1 651.9 L378.0 646.6 L374.9 641.9 L373.0 636.5 L369.1 634.1 L366.9 630.1 L363.1 627.6 L360.6 623.9 L356.8 621.3 L353.9 617.8 L351.7 613.8 L349.5 609.5 L349.0 604.8 L349.0 600.0 L343.0 601.0 L341.6 605.1 L339.7 608.9 L336.5 612.1 L335.3 616.3 L332.0 620.1 L327.8 623.0 L324.0 626.4 L325.0 630.6 L324.5 634.8 L324.0 639.0 L323.0 643.5 L320.1 646.9 L318.5 651.0 L315.0 654.0 L310.9 655.9 L307.4 658.9 L304.3 662.3 L300.0 664.0 L297.8 666.8 L294.0 669.4 L289.5 670.7 L287.0 675.3 L282.6 676.8 L278.2 676.7 L274.2 678.7 L270.0 679.4 L265.6 677.2 L261.7 674.1 L256.7 673.0 L252.4 670.5 L247.4 669.9 L242.3 669.3 L239.2 674.1 L237.0 679.4 L233.2 677.4 L228.9 678.8 L225.1 676.9 L221.1 676.7 L217.0 676.8 L213.4 674.8 L209.4 673.9 L205.6 672.5 L202.0 670.5 L197.3 669.7 L193.4 667.5 L189.2 665.6 L186.1 661.8 L181.7 660.4 L177.7 662.3 L173.5 663.8 L169.0 664.0 L172.2 667.3 L172.4 672.2 L175.4 675.6 L172.5 680.3 L171.6 685.7 L167.5 685.4 L163.6 686.9 L159.5 687.3 L155.5 687.4 L151.4 687.0 L147.7 689.3 L144.4 692.3 L140.2 693.7 L136.3 695.8 L131.1 695.6 L126.3 692.6 L121.0 693.0 L119.8 687.4 L116.0 683.0 L111.0 683.3 L106.1 684.7 L101.0 684.4 L96.4 683.7 L92.2 686.3 L87.8 686.8 L83.3 687.0 L77.6 685.8 L73.2 682.0 L68.9 681.0 L64.8 679.4 L60.6 678.0 L58.1 674.9 L55.5 671.8 L52.6 667.9 L51.3 663.3 L49.2 659.0 L50.5 653.0 L54.2 650.3 L58.6 649.7 L63.0 649.0 L67.1 647.8 L71.1 648.7 L75.2 647.6 L79.2 647.6 L83.3 649.0 L88.1 646.8 L93.1 644.9 L98.4 644.0 L100.0 638.0 L94.6 635.5 L89.0 633.5 L89.5 627.0 L94.8 626.8 L100.0 626.5 L105.3 628.4 L111.0 628.9 L115.1 630.6 L119.3 632.1 L123.7 632.7 L128.6 632.5 L132.8 629.8 L137.5 628.9 L138.9 624.9 L141.3 621.3 L145.7 619.0 L147.3 613.8 L151.4 611.2 L148.4 607.3 L144.8 604.0 L140.0 601.8 L137.5 597.4 L136.3 592.4 L134.4 587.6 L131.2 583.5 L128.3 579.5 L125.4 575.5 L122.5 571.5 L118.6 568.3 L114.5 567.0 L111.6 563.7 L108.0 561.5 L105.1 558.4 L101.0 557.0 L97.7 553.4 L94.0 550.5 L89.8 548.2 L85.8 545.6 L81.6 543.5 L77.0 543.2 L72.6 542.2 L68.0 541.8 L64.4 539.7 L61.8 536.3 L59.2 532.9 L58.3 529.0 L57.7 525.0 L56.8 521.0 L56.9 516.5 L60.3 513.0 L60.6 508.5 L62.7 504.8 L64.4 501.0 L67.6 497.0 L70.6 492.7 L73.2 488.3 L74.6 484.2 L74.8 479.9 L75.7 475.7 L73.6 470.8 L74.4 465.6 L69.8 464.8 L65.2 465.1 L60.6 466.0 L56.0 468.4 L51.3 470.7 L46.7 473.2 L42.6 469.0 L37.9 465.6 L34.3 462.6 L33.4 457.7 L30.3 454.3 L31.7 449.7 L33.4 445.3 L36.6 441.6 L36.6 437.1 L37.9 432.8 L43.3 430.9 L48.0 427.8 L50.8 424.6 L55.1 423.3 L58.0 420.2 L62.1 418.8 L64.3 415.1 L67.3 412.3 L70.7 410.0 L73.1 406.6 L76.1 403.7 L78.2 400.0 L82.0 396.6 L82.2 391.5 L80.8 386.5 L77.2 383.7 L73.2 381.4 L68.8 380.4 L64.2 381.5 L59.8 380.6 L55.5 379.0 L51.2 377.9 L47.7 374.7 L43.1 374.1 L39.4 371.6 L35.3 370.0 L29.2 369.5 L24.0 366.3 L22.5 370.3 L19.0 372.6 L15.4 370.6 L12.6 367.5 L11.5 362.6 L10.0 357.9 L8.4 353.2 L6.3 348.6 L4.4 344.1 L3.8 339.3Z" fill="none" stroke="#050505" stroke-width="2.2" stroke-linejoin="round"/><path d="M92 623.6 L71 611 L0 636.6 L53 671" fill="none" stroke="#2a2a2a" stroke-width="2.3" stroke-dasharray="9 4 2.5 4 2.5 4"/><g><circle class="g" cx="614.4" cy="399.8" r="3.6"/><circle class="p" cx="262.4" cy="428.0" r="3.6"/><circle class="r" cx="651.8" cy="184.0" r="3.6"/><circle class="g" cx="575.7" cy="416.0" r="3.6"/><circle class="p" cx="289.5" cy="326.4" r="3.6"/><circle class="p" cx="390.8" cy="380.8" r="3.6"/><circle class="r" cx="485.3" cy="412.5" r="3.6"/><circle class="g" cx="658.0" cy="475.4" r="3.6"/><circle class="r" cx="501.8" cy="315.4" r="3.6"/><circle class="r" cx="616.0" cy="475.6" r="3.6"/><circle class="r" cx="218.0" cy="353.6" r="3.6"/><circle class="r" cx="670.7" cy="213.7" r="3.6"/><circle class="g" cx="220.0" cy="293.1" r="3.6"/><circle class="g" cx="455.4" cy="252.9" r="3.6"/><circle class="r" cx="220.6" cy="370.3" r="3.6"/><circle class="p" cx="258.2" cy="388.8" r="3.6"/><circle class="r" cx="614.2" cy="444.2" r="3.6"/><circle class="g" cx="550.1" cy="499.5" r="3.6"/><circle class="g" cx="129.0" cy="644.7" r="3.6"/><circle class="g" cx="609.9" cy="392.3" r="3.6"/><circle class="g" cx="583.6" cy="240.3" r="3.6"/><circle class="g" cx="631.7" cy="445.6" r="3.6"/><circle class="r" cx="527.2" cy="294.2" r="3.6"/><circle class="g" cx="255.1" cy="650.3" r="3.6"/><circle class="p" cx="244.8" cy="453.7" r="3.6"/><circle class="p" cx="271.9" cy="445.7" r="3.6"/><circle class="p" cx="237.5" cy="423.4" r="3.6"/><circle class="p" cx="260.1" cy="355.1" r="3.6"/><circle class="p" cx="261.7" cy="405.9" r="3.6"/><circle class="g" cx="521.6" cy="265.3" r="3.6"/><circle class="r" cx="605.1" cy="443.0" r="3.6"/><circle class="p" cx="218.1" cy="446.2" r="3.6"/><circle class="r" cx="519.8" cy="393.7" r="3.6"/><circle class="g" cx="444.0" cy="215.5" r="3.6"/><circle class="p" cx="238.3" cy="395.5" r="3.6"/><circle class="p" cx="213.0" cy="455.9" r="3.6"/><circle class="p" cx="248.9" cy="418.7" r="3.6"/><circle class="p" cx="364.2" cy="291.2" r="3.6"/><circle class="g" cx="598.9" cy="346.3" r="3.6"/><circle class="g" cx="237.4" cy="406.5" r="3.6"/><circle class="g" cx="537.5" cy="252.7" r="3.6"/><circle class="g" cx="261.0" cy="645.7" r="3.6"/><circle class="g" cx="535.8" cy="469.3" r="3.6"/><circle class="g" cx="472.6" cy="300.6" r="3.6"/><circle class="g" cx="647.2" cy="476.0" r="3.6"/><circle class="g" cx="546.5" cy="449.0" r="3.6"/><circle class="g" cx="611.0" cy="209.2" r="3.6"/><circle class="r" cx="100.4" cy="251.1" r="3.6"/><circle class="g" cx="464.8" cy="242.7" r="3.6"/><circle class="r" cx="219.1" cy="385.6" r="3.6"/><circle class="g" cx="80.6" cy="348.9" r="3.6"/><circle class="r" cx="224.2" cy="371.2" r="3.6"/><circle class="p" cx="275.3" cy="443.3" r="3.6"/><circle class="r" cx="629.2" cy="182.6" r="3.6"/><circle class="g" cx="269.7" cy="403.2" r="3.6"/><circle class="r" cx="746.8" cy="195.6" r="3.6"/><circle class="g" cx="588.3" cy="339.5" r="3.6"/><circle class="g" cx="473.7" cy="311.6" r="3.6"/><circle class="p" cx="269.3" cy="374.3" r="3.6"/><circle class="r" cx="527.2" cy="278.7" r="3.6"/><circle class="p" cx="380.1" cy="389.9" r="3.6"/><circle class="p" cx="401.7" cy="383.1" r="3.6"/><circle class="p" cx="238.2" cy="404.6" r="3.6"/><circle class="g" cx="183.0" cy="348.6" r="3.6"/><circle class="g" cx="648.0" cy="444.6" r="3.6"/><circle class="r" cx="74.0" cy="662.0" r="3.6"/><circle class="g" cx="551.0" cy="240.2" r="3.6"/><circle class="r" cx="521.4" cy="276.3" r="3.6"/><circle class="g" cx="642.4" cy="260.7" r="3.6"/><circle class="g" cx="529.6" cy="245.7" r="3.6"/><circle class="g" cx="497.0" cy="398.1" r="3.6"/><circle class="g" cx="538.7" cy="276.9" r="3.6"/><circle class="r" cx="593.3" cy="482.4" r="3.6"/><circle class="r" cx="515.8" cy="306.4" r="3.6"/><circle class="r" cx="749.1" cy="192.0" r="3.6"/><circle class="g" cx="641.0" cy="438.2" r="3.6"/><circle class="g" cx="458.7" cy="233.5" r="3.6"/><circle class="g" cx="721.6" cy="219.3" r="3.6"/><circle class="p" cx="392.5" cy="302.4" r="3.6"/><circle class="p" cx="267.3" cy="422.6" r="3.6"/><circle class="g" cx="720.9" cy="204.0" r="3.6"/><circle class="g" cx="479.7" cy="295.9" r="3.6"/><circle class="g" cx="22.3" cy="358.6" r="3.6"/><circle class="g" cx="587.1" cy="219.5" r="3.6"/><circle class="r" cx="797.0" cy="146.0" r="3.6"/><circle class="r" cx="666.8" cy="215.4" r="3.6"/><circle class="r" cx="112.5" cy="631.4" r="3.6"/><circle class="p" cx="414.0" cy="300.3" r="3.6"/><circle class="g" cx="272.6" cy="313.3" r="3.6"/><circle class="g" cx="131.2" cy="346.6" r="3.6"/><circle class="r" cx="491.4" cy="294.3" r="3.6"/><circle class="g" cx="573.3" cy="415.1" r="3.6"/><circle class="r" cx="74.0" cy="329.3" r="3.6"/><circle class="p" cx="433.3" cy="389.7" r="3.6"/><circle class="r" cx="515.2" cy="317.0" r="3.6"/><circle class="g" cx="633.6" cy="475.3" r="3.6"/><circle class="g" cx="589.9" cy="221.9" r="3.6"/><circle class="g" cx="590.6" cy="199.9" r="3.6"/><circle class="g" cx="607.8" cy="246.6" r="3.6"/><circle class="g" cx="521.3" cy="335.4" r="3.6"/><circle class="p" cx="191.3" cy="431.9" r="3.6"/><circle class="g" cx="455.2" cy="296.4" r="3.6"/><circle class="r" cx="497.2" cy="277.1" r="3.6"/><circle class="r" cx="525.7" cy="312.0" r="3.6"/><circle class="g" cx="720.7" cy="215.4" r="3.6"/><circle class="r" cx="541.5" cy="396.9" r="3.6"/><circle class="r" cx="650.1" cy="202.1" r="3.6"/><circle class="r" cx="214.8" cy="390.2" r="3.6"/><circle class="p" cx="218.9" cy="409.9" r="3.6"/><circle class="g" cx="257.7" cy="328.2" r="3.6"/><circle class="p" cx="259.9" cy="368.3" r="3.6"/><circle class="p" cx="267.9" cy="439.1" r="3.6"/><circle class="r" cx="497.9" cy="321.4" r="3.6"/><circle class="p" cx="211.9" cy="399.2" r="3.6"/><circle class="r" cx="528.6" cy="423.3" r="3.6"/><circle class="p" cx="392.7" cy="390.0" r="3.6"/><circle class="g" cx="494.5" cy="338.2" r="3.6"/><circle class="g" cx="607.9" cy="217.2" r="3.6"/><circle class="g" cx="633.9" cy="511.2" r="3.6"/><circle class="r" cx="481.8" cy="393.7" r="3.6"/><circle class="p" cx="289.3" cy="324.0" r="3.6"/><circle class="g" cx="547.5" cy="504.6" r="3.6"/><circle class="g" cx="558.0" cy="242.6" r="3.6"/><circle class="r" cx="77.2" cy="327.2" r="3.6"/><circle class="r" cx="118.5" cy="284.9" r="3.6"/><circle class="p" cx="226.9" cy="405.7" r="3.6"/><circle class="g" cx="528.6" cy="437.2" r="3.6"/><circle class="g" cx="506.1" cy="345.1" r="3.6"/><circle class="p" cx="257.7" cy="400.2" r="3.6"/><circle class="g" cx="705.0" cy="254.7" r="3.6"/><circle class="r" cx="187.3" cy="371.4" r="3.6"/><circle class="g" cx="705.9" cy="239.7" r="3.6"/><circle class="p" cx="391.4" cy="393.8" r="3.6"/><circle class="g" cx="457.4" cy="225.6" r="3.6"/><circle class="g" cx="582.1" cy="407.1" r="3.6"/><circle class="g" cx="657.6" cy="513.6" r="3.6"/><circle class="p" cx="300.5" cy="298.5" r="3.6"/><circle class="r" cx="533.7" cy="323.1" r="3.6"/><circle class="p" cx="416.6" cy="388.8" r="3.6"/><circle class="r" cx="661.2" cy="193.1" r="3.6"/><circle class="g" cx="527.4" cy="491.3" r="3.6"/><circle class="r" cx="215.5" cy="371.1" r="3.6"/><circle class="p" cx="388.6" cy="333.8" r="3.6"/><circle class="r" cx="560.2" cy="395.8" r="3.6"/><circle class="p" cx="240.7" cy="408.1" r="3.6"/><circle class="p" cx="426.3" cy="388.5" r="3.6"/><circle class="g" cx="251.6" cy="325.5" r="3.6"/><circle class="p" cx="228.2" cy="398.1" r="3.6"/><circle class="r" cx="743.1" cy="201.1" r="3.6"/><circle class="g" cx="128.0" cy="669.7" r="3.6"/><circle class="g" cx="568.7" cy="207.0" r="3.6"/><circle class="g" cx="598.9" cy="410.9" r="3.6"/><circle class="g" cx="635.2" cy="453.7" r="3.6"/><circle class="p" cx="383.1" cy="290.3" r="3.6"/><circle class="p" cx="396.8" cy="290.3" r="3.6"/><circle class="r" cx="521.9" cy="408.9" r="3.6"/><circle class="p" cx="208.4" cy="419.6" r="3.6"/><circle class="r" cx="782.0" cy="148.0" r="3.6"/><circle class="p" cx="398.8" cy="315.9" r="3.6"/><circle class="g" cx="601.3" cy="407.6" r="3.6"/><circle class="g" cx="261.6" cy="649.5" r="3.6"/><circle class="g" cx="496.3" cy="337.2" r="3.6"/><circle class="g" cx="70.6" cy="369.8" r="3.6"/><circle class="r" cx="698.3" cy="210.0" r="3.6"/><circle class="r" cx="145.0" cy="650.0" r="3.6"/><circle class="g" cx="193.2" cy="274.0" r="3.6"/><circle class="g" cx="495.9" cy="477.0" r="3.6"/><circle class="r" cx="523.2" cy="294.3" r="3.6"/><circle class="g" cx="611.2" cy="239.3" r="3.6"/><circle class="g" cx="582.6" cy="346.4" r="3.6"/><circle class="r" cx="550.5" cy="395.3" r="3.6"/><circle class="g" cx="611.4" cy="414.1" r="3.6"/><circle class="p" cx="244.8" cy="442.7" r="3.6"/><circle class="g" cx="611.9" cy="346.0" r="3.6"/><circle class="r" cx="599.7" cy="477.7" r="3.6"/><circle class="g" cx="585.1" cy="215.0" r="3.6"/><circle class="r" cx="235.1" cy="373.3" r="3.6"/><circle class="r" cx="520.8" cy="287.5" r="3.6"/><circle class="r" cx="190.6" cy="382.1" r="3.6"/><circle class="p" cx="241.8" cy="376.4" r="3.6"/><circle class="p" cx="394.4" cy="299.8" r="3.6"/><circle class="r" cx="541.6" cy="384.8" r="3.6"/><circle class="r" cx="789.0" cy="128.5" r="3.6"/><circle class="r" cx="514.2" cy="291.8" r="3.6"/><circle class="g" cx="476.3" cy="298.9" r="3.6"/><circle class="p" cx="230.1" cy="425.0" r="3.6"/><circle class="r" cx="638.6" cy="213.2" r="3.6"/><circle class="r" cx="540.2" cy="321.8" r="3.6"/><circle class="g" cx="280.1" cy="363.8" r="3.6"/><circle class="g" cx="579.0" cy="231.7" r="3.6"/><circle class="r" cx="672.4" cy="217.6" r="3.6"/><circle class="r" cx="534.6" cy="386.5" r="3.6"/><circle class="p" cx="431.8" cy="674.3" r="3.6"/><circle class="p" cx="212.8" cy="427.8" r="3.6"/><circle class="g" cx="571.0" cy="378.7" r="3.6"/><circle class="r" cx="654.3" cy="184.7" r="3.6"/><circle class="g" cx="68.2" cy="351.9" r="3.6"/><circle class="p" cx="272.9" cy="304.5" r="3.6"/><circle class="g" cx="485.5" cy="577.0" r="3.6"/><circle class="g" cx="599.3" cy="375.5" r="3.6"/><circle class="g" cx="584.6" cy="241.7" r="3.6"/><circle class="r" cx="625.0" cy="217.1" r="3.6"/><circle class="g" cx="86.0" cy="676.0" r="3.6"/><circle class="p" cx="449.5" cy="660.9" r="3.6"/><circle class="r" cx="609.5" cy="475.7" r="3.6"/><circle class="g" cx="529.4" cy="487.3" r="3.6"/><circle class="g" cx="621.3" cy="402.6" r="3.6"/><circle class="r" cx="219.9" cy="356.1" r="3.6"/><circle class="g" cx="244.0" cy="631.4" r="3.6"/><circle class="g" cx="508.9" cy="366.6" r="3.6"/><circle class="g" cx="214.9" cy="316.3" r="3.6"/><circle class="p" cx="401.0" cy="287.3" r="3.6"/><circle class="g" cx="580.7" cy="204.3" r="3.6"/><circle class="g" cx="593.8" cy="245.7" r="3.6"/><circle class="g" cx="701.4" cy="222.6" r="3.6"/><circle class="p" cx="426.2" cy="656.2" r="3.6"/><circle class="p" cx="395.3" cy="391.2" r="3.6"/><circle class="r" cx="62.5" cy="323.8" r="3.6"/><circle class="g" cx="208.4" cy="429.0" r="3.6"/><circle class="g" cx="511.8" cy="420.5" r="3.6"/><circle class="p" cx="259.4" cy="394.6" r="3.6"/><circle class="r" cx="105.7" cy="250.3" r="3.6"/><circle class="p" cx="273.3" cy="412.4" r="3.6"/><circle class="r" cx="88.5" cy="323.9" r="3.6"/><circle class="g" cx="24.9" cy="356.5" r="3.6"/><circle class="g" cx="607.3" cy="424.7" r="3.6"/><circle class="r" cx="479.0" cy="272.6" r="3.6"/><circle class="r" cx="737.9" cy="207.8" r="3.6"/><circle class="p" cx="439.0" cy="669.1" r="3.6"/><circle class="g" cx="565.5" cy="208.6" r="3.6"/><circle class="r" cx="540.1" cy="404.9" r="3.6"/><circle class="r" cx="646.4" cy="210.4" r="3.6"/><circle class="g" cx="573.6" cy="337.8" r="3.6"/><circle class="r" cx="489.1" cy="281.9" r="3.6"/><circle class="g" cx="486.9" cy="343.9" r="3.6"/><circle class="g" cx="578.6" cy="347.1" r="3.6"/><circle class="r" cx="618.5" cy="454.8" r="3.6"/><circle class="g" cx="582.5" cy="199.8" r="3.6"/><circle class="p" cx="274.2" cy="415.6" r="3.6"/><circle class="g" cx="514.2" cy="481.1" r="3.6"/><circle class="g" cx="712.5" cy="185.9" r="3.6"/><circle class="p" cx="250.6" cy="444.6" r="3.6"/><circle class="r" cx="539.0" cy="406.4" r="3.6"/><circle class="r" cx="677.9" cy="186.8" r="3.6"/><circle class="g" cx="647.0" cy="455.8" r="3.6"/><circle class="g" cx="700.8" cy="244.7" r="3.6"/><circle class="g" cx="604.1" cy="217.4" r="3.6"/><circle class="g" cx="755.7" cy="211.7" r="3.6"/><circle class="g" cx="602.1" cy="242.7" r="3.6"/><circle class="g" cx="596.2" cy="386.2" r="3.6"/><circle class="g" cx="649.6" cy="469.0" r="3.6"/><circle class="p" cx="274.4" cy="446.7" r="3.6"/><circle class="r" cx="522.9" cy="418.2" r="3.6"/><circle class="r" cx="533.3" cy="313.6" r="3.6"/><circle class="g" cx="241.9" cy="306.6" r="3.6"/><circle class="g" cx="513.0" cy="445.1" r="3.6"/><circle class="g" cx="475.4" cy="318.3" r="3.6"/><circle class="r" cx="81.0" cy="321.1" r="3.6"/><circle class="p" cx="268.7" cy="387.7" r="3.6"/><circle class="r" cx="520.5" cy="398.1" r="3.6"/><circle class="g" cx="600.1" cy="224.7" r="3.6"/><circle class="g" cx="333.0" cy="552.0" r="3.6"/><circle class="g" cx="603.8" cy="248.3" r="3.6"/><circle class="g" cx="617.6" cy="420.5" r="3.6"/><circle class="g" cx="196.9" cy="330.3" r="3.6"/><circle class="g" cx="598.7" cy="401.1" r="3.6"/><circle class="r" cx="731.4" cy="197.0" r="3.6"/><circle class="r" cx="698.4" cy="184.3" r="3.6"/><circle class="r" cx="780.4" cy="151.8" r="3.6"/><circle class="p" cx="376.3" cy="284.1" r="3.6"/><circle class="g" cx="613.1" cy="220.4" r="3.6"/><circle class="g" cx="510.9" cy="480.4" r="3.6"/><circle class="g" cx="708.3" cy="257.6" r="3.6"/><circle class="g" cx="226.7" cy="324.4" r="3.6"/><circle class="p" cx="388.1" cy="388.0" r="3.6"/><circle class="g" cx="530.7" cy="441.6" r="3.6"/><circle class="r" cx="633.3" cy="206.1" r="3.6"/><circle class="g" cx="490.6" cy="365.3" r="3.6"/><circle class="g" cx="383.4" cy="644.4" r="3.6"/><circle class="g" cx="176.7" cy="347.4" r="3.6"/><circle class="g" cx="586.8" cy="236.8" r="3.6"/><circle class="r" cx="506.5" cy="294.9" r="3.6"/><circle class="g" cx="476.3" cy="379.1" r="3.6"/><circle class="p" cx="270.0" cy="298.0" r="3.6"/><circle class="p" cx="198.2" cy="429.1" r="3.6"/><circle class="g" cx="726.6" cy="220.9" r="3.6"/><circle class="g" cx="228.6" cy="649.1" r="3.6"/><circle class="p" cx="413.4" cy="382.0" r="3.6"/><circle class="p" cx="246.5" cy="445.6" r="3.6"/><circle class="r" cx="85.8" cy="325.3" r="3.6"/><circle class="p" cx="264.8" cy="301.8" r="3.6"/><circle class="r" cx="724.4" cy="189.0" r="3.6"/><circle class="g" cx="551.1" cy="232.4" r="3.6"/><circle class="g" cx="584.8" cy="337.2" r="3.6"/><circle class="p" cx="241.0" cy="398.0" r="3.6"/><circle class="p" cx="380.9" cy="282.2" r="3.6"/><circle class="r" cx="144.0" cy="677.0" r="3.6"/><circle class="r" cx="500.2" cy="277.0" r="3.6"/><circle class="g" cx="564.8" cy="445.6" r="3.6"/><circle class="g" cx="730.4" cy="222.9" r="3.6"/><circle class="g" cx="469.2" cy="300.4" r="3.6"/><circle class="g" cx="632.1" cy="521.4" r="3.6"/><circle class="r" cx="677.3" cy="227.1" r="3.6"/><circle class="r" cx="500.1" cy="295.2" r="3.6"/><circle class="r" cx="634.2" cy="203.3" r="3.6"/><circle class="p" cx="254.0" cy="431.4" r="3.6"/><circle class="p" cx="265.6" cy="397.9" r="3.6"/><circle class="p" cx="274.0" cy="437.6" r="3.6"/><circle class="g" cx="511.1" cy="476.0" r="3.6"/><circle class="p" cx="220.6" cy="427.3" r="3.6"/><circle class="g" cx="88.0" cy="658.0" r="3.6"/><circle class="g" cx="58.0" cy="356.6" r="3.6"/><circle class="p" cx="201.4" cy="405.6" r="3.6"/><circle class="g" cx="590.4" cy="235.9" r="3.6"/><circle class="g" cx="222.8" cy="314.4" r="3.6"/><circle class="r" cx="623.9" cy="198.9" r="3.6"/><circle class="g" cx="573.9" cy="405.7" r="3.6"/><circle class="g" cx="492.8" cy="404.8" r="3.6"/><circle class="r" cx="618.5" cy="445.1" r="3.6"/><circle class="g" cx="518.9" cy="344.4" r="3.6"/><circle class="r" cx="555.4" cy="406.2" r="3.6"/><circle class="r" cx="546.6" cy="397.3" r="3.6"/><circle class="r" cx="472.9" cy="388.3" r="3.6"/><circle class="g" cx="512.2" cy="495.9" r="3.6"/><circle class="g" cx="263.9" cy="653.7" r="3.6"/><circle class="r" cx="516.3" cy="329.3" r="3.6"/><circle class="p" cx="213.9" cy="406.6" r="3.6"/><circle class="r" cx="530.7" cy="293.0" r="3.6"/><circle class="r" cx="199.2" cy="380.7" r="3.6"/><circle class="r" cx="532.7" cy="317.0" r="3.6"/><circle class="r" cx="607.7" cy="466.0" r="3.6"/><circle class="r" cx="709.3" cy="194.2" r="3.6"/><circle class="g" cx="526.0" cy="499.8" r="3.6"/><circle class="r" cx="518.6" cy="395.6" r="3.6"/><circle class="r" cx="505.8" cy="303.5" r="3.6"/><circle class="r" cx="534.4" cy="415.6" r="3.6"/><circle class="p" cx="251.7" cy="457.5" r="3.6"/><circle class="r" cx="539.7" cy="416.6" r="3.6"/><circle class="g" cx="573.0" cy="417.3" r="3.6"/><circle class="r" cx="479.8" cy="281.9" r="3.6"/><circle class="p" cx="389.8" cy="332.2" r="3.6"/><circle class="p" cx="233.8" cy="391.5" r="3.6"/><circle class="p" cx="412.7" cy="295.5" r="3.6"/><circle class="g" cx="567.6" cy="242.1" r="3.6"/><circle class="g" cx="703.3" cy="174.4" r="3.6"/><circle class="g" cx="620.5" cy="244.3" r="3.6"/><circle class="g" cx="708.8" cy="184.4" r="3.6"/><circle class="g" cx="535.6" cy="507.2" r="3.6"/><circle class="g" cx="650.0" cy="518.6" r="3.6"/><circle class="g" cx="591.7" cy="401.0" r="3.6"/><circle class="r" cx="538.6" cy="270.9" r="3.6"/><circle class="p" cx="213.4" cy="448.7" r="3.6"/><circle class="r" cx="196.0" cy="373.4" r="3.6"/><circle class="r" cx="540.3" cy="267.7" r="3.6"/><circle class="r" cx="516.0" cy="292.4" r="3.6"/><circle class="p" cx="395.3" cy="303.7" r="3.6"/><circle class="g" cx="559.3" cy="371.8" r="3.6"/><circle class="r" cx="71.9" cy="654.0" r="3.6"/><circle class="p" cx="214.2" cy="424.9" r="3.6"/><circle class="p" cx="282.9" cy="444.1" r="3.6"/><circle class="g" cx="531.0" cy="378.5" r="3.6"/><circle class="p" cx="263.1" cy="307.0" r="3.6"/><circle class="g" cx="588.5" cy="229.8" r="3.6"/><circle class="p" cx="216.1" cy="456.0" r="3.6"/><circle class="p" cx="246.3" cy="380.1" r="3.6"/><circle class="g" cx="464.3" cy="245.3" r="3.6"/><circle class="r" cx="573.1" cy="439.6" r="3.6"/><circle class="g" cx="521.2" cy="467.9" r="3.6"/><circle class="g" cx="171.6" cy="341.0" r="3.6"/><circle class="r" cx="474.6" cy="392.9" r="3.6"/><circle class="g" cx="621.1" cy="519.5" r="3.6"/><circle class="g" cx="581.3" cy="201.7" r="3.6"/><circle class="g" cx="604.7" cy="236.1" r="3.6"/><circle class="g" cx="624.3" cy="419.2" r="3.6"/><circle class="r" cx="486.6" cy="406.1" r="3.6"/><circle class="p" cx="230.4" cy="388.0" r="3.6"/><circle class="g" cx="93.7" cy="656.4" r="3.6"/><circle class="g" cx="618.6" cy="515.8" r="3.6"/><circle class="p" cx="242.8" cy="445.7" r="3.6"/><circle class="g" cx="584.3" cy="396.3" r="3.6"/><circle class="p" cx="197.4" cy="422.8" r="3.6"/><circle class="r" cx="613.1" cy="456.5" r="3.6"/><circle class="r" cx="650.9" cy="226.0" r="3.6"/><circle class="r" cx="617.4" cy="470.7" r="3.6"/><circle class="p" cx="303.4" cy="299.6" r="3.6"/><circle class="g" cx="484.2" cy="333.8" r="3.6"/><circle class="r" cx="225.3" cy="367.7" r="3.6"/><circle class="g" cx="322.5" cy="533.0" r="3.6"/><circle class="g" cx="537.8" cy="334.7" r="3.6"/><circle class="r" cx="688.9" cy="183.4" r="3.6"/><circle class="p" cx="394.7" cy="388.7" r="3.6"/><circle class="r" cx="584.0" cy="440.7" r="3.6"/><circle class="g" cx="653.8" cy="444.3" r="3.6"/><circle class="p" cx="219.6" cy="416.8" r="3.6"/><circle class="r" cx="536.4" cy="422.7" r="3.6"/><circle class="r" cx="180.5" cy="388.8" r="3.6"/><circle class="p" cx="392.2" cy="315.6" r="3.6"/><circle class="p" cx="413.6" cy="673.0" r="3.6"/><circle class="r" cx="606.6" cy="473.3" r="3.6"/><circle class="p" cx="289.2" cy="333.5" r="3.6"/><circle class="g" cx="640.1" cy="461.1" r="3.6"/><circle class="r" cx="486.4" cy="394.2" r="3.6"/><circle class="g" cx="570.2" cy="453.2" r="3.6"/><circle class="g" cx="595.1" cy="388.3" r="3.6"/><circle class="r" cx="685.7" cy="189.5" r="3.6"/><circle class="g" cx="561.7" cy="462.6" r="3.6"/><circle class="g" cx="607.0" cy="415.4" r="3.6"/><circle class="r" cx="510.2" cy="292.6" r="3.6"/><circle class="g" cx="525.8" cy="440.5" r="3.6"/><circle class="r" cx="517.8" cy="299.2" r="3.6"/><circle class="g" cx="500.3" cy="493.8" r="3.6"/><circle class="p" cx="210.8" cy="425.4" r="3.6"/><circle class="g" cx="248.5" cy="303.4" r="3.6"/><circle class="r" cx="199.4" cy="365.2" r="3.6"/><circle class="g" cx="270.0" cy="323.4" r="3.6"/><circle class="g" cx="586.6" cy="244.5" r="3.6"/><circle class="r" cx="566.4" cy="395.6" r="3.6"/><circle class="g" cx="219.7" cy="409.7" r="3.6"/><circle class="p" cx="369.4" cy="283.7" r="3.6"/><circle class="p" cx="383.6" cy="285.1" r="3.6"/><circle class="p" cx="399.0" cy="330.8" r="3.6"/><circle class="g" cx="210.8" cy="317.9" r="3.6"/><circle class="g" cx="231.1" cy="326.2" r="3.6"/><circle class="r" cx="581.6" cy="491.4" r="3.6"/><circle class="r" cx="212.9" cy="357.5" r="3.6"/><circle class="g" cx="453.1" cy="223.9" r="3.6"/><circle class="p" cx="406.0" cy="393.6" r="3.6"/><circle class="g" cx="115.6" cy="668.0" r="3.6"/><circle class="g" cx="628.2" cy="514.1" r="3.6"/><circle class="g" cx="553.1" cy="211.3" r="3.6"/><circle class="r" cx="544.8" cy="393.3" r="3.6"/><circle class="r" cx="598.8" cy="479.6" r="3.6"/><circle class="r" cx="80.0" cy="288.8" r="3.6"/><circle class="p" cx="228.6" cy="402.8" r="3.6"/><circle class="r" cx="633.9" cy="226.2" r="3.6"/><circle class="g" cx="560.4" cy="482.9" r="3.6"/><circle class="g" cx="598.4" cy="242.3" r="3.6"/><circle class="g" cx="522.8" cy="502.4" r="3.6"/><circle class="r" cx="686.0" cy="205.1" r="3.6"/><circle class="r" cx="553.3" cy="402.1" r="3.6"/><circle class="r" cx="496.8" cy="263.1" r="3.6"/><circle class="p" cx="370.4" cy="290.0" r="3.6"/><circle class="r" cx="496.3" cy="234.8" r="3.6"/><circle class="r" cx="552.5" cy="398.7" r="3.6"/><circle class="p" cx="246.1" cy="407.9" r="3.6"/><circle class="g" cx="211.7" cy="283.6" r="3.6"/><circle class="p" cx="258.8" cy="458.8" r="3.6"/><circle class="g" cx="593.7" cy="222.2" r="3.6"/><circle class="p" cx="220.2" cy="411.6" r="3.6"/><circle class="r" cx="688.8" cy="206.1" r="3.6"/><circle class="g" cx="512.0" cy="405.0" r="3.6"/><circle class="g" cx="607.5" cy="349.5" r="3.6"/><circle class="r" cx="148.4" cy="655.6" r="3.6"/><circle class="g" cx="546.3" cy="242.8" r="3.6"/><circle class="p" cx="228.8" cy="419.8" r="3.6"/><circle class="r" cx="465.6" cy="274.8" r="3.6"/><circle class="p" cx="226.3" cy="424.0" r="3.6"/><circle class="p" cx="257.9" cy="376.2" r="3.6"/><circle class="r" cx="656.5" cy="197.7" r="3.6"/><circle class="p" cx="203.6" cy="409.9" r="3.6"/><circle class="g" cx="219.0" cy="306.4" r="3.6"/><circle class="g" cx="652.9" cy="266.7" r="3.6"/><circle class="g" cx="249.8" cy="339.9" r="3.6"/><circle class="r" cx="704.7" cy="194.9" r="3.6"/><circle class="g" cx="255.6" cy="647.2" r="3.6"/><circle class="p" cx="385.4" cy="388.8" r="3.6"/><circle class="g" cx="382.0" cy="640.6" r="3.6"/><circle class="g" cx="643.6" cy="455.2" r="3.6"/><circle class="g" cx="492.5" cy="434.5" r="3.6"/><circle class="g" cx="247.5" cy="632.9" r="3.6"/><circle class="g" cx="714.7" cy="217.5" r="3.6"/><circle class="g" cx="498.4" cy="331.3" r="3.6"/><circle class="g" cx="614.0" cy="412.1" r="3.6"/><circle class="r" cx="516.9" cy="426.6" r="3.6"/><circle class="g" cx="131.0" cy="664.0" r="3.6"/><circle class="p" cx="217.4" cy="406.1" r="3.6"/><circle class="g" cx="594.0" cy="422.5" r="3.6"/><circle class="r" cx="608.2" cy="462.2" r="3.6"/><circle class="g" cx="542.9" cy="367.5" r="3.6"/><circle class="p" cx="434.7" cy="654.6" r="3.6"/><circle class="r" cx="508.1" cy="304.6" r="3.6"/><circle class="p" cx="262.3" cy="455.7" r="3.6"/><circle class="r" cx="237.5" cy="371.6" r="3.6"/><circle class="r" cx="650.3" cy="173.1" r="3.6"/><circle class="r" cx="551.7" cy="444.6" r="3.6"/><circle class="g" cx="580.8" cy="397.2" r="3.6"/><circle class="r" cx="618.0" cy="443.0" r="3.6"/><circle class="r" cx="203.4" cy="376.9" r="3.6"/><circle class="p" cx="205.9" cy="429.8" r="3.6"/><circle class="g" cx="585.8" cy="210.9" r="3.6"/><circle class="g" cx="169.1" cy="344.8" r="3.6"/><circle class="g" cx="616.2" cy="403.4" r="3.6"/><circle class="g" cx="206.3" cy="301.4" r="3.6"/><circle class="p" cx="226.5" cy="399.9" r="3.6"/><circle class="r" cx="190.0" cy="368.5" r="3.6"/><circle class="p" cx="292.4" cy="325.4" r="3.6"/><circle class="r" cx="668.3" cy="236.0" r="3.6"/><circle class="p" cx="279.0" cy="309.5" r="3.6"/><circle class="g" cx="589.4" cy="400.3" r="3.6"/><circle class="p" cx="441.0" cy="667.8" r="3.6"/><circle class="r" cx="641.0" cy="247.8" r="3.6"/><circle class="p" cx="396.1" cy="283.2" r="3.6"/><circle class="g" cx="604.6" cy="206.2" r="3.6"/><circle class="g" cx="202.1" cy="310.7" r="3.6"/><circle class="r" cx="241.1" cy="372.7" r="3.6"/><circle class="r" cx="685.5" cy="202.9" r="3.6"/><circle class="g" cx="260.0" cy="283.9" r="3.6"/><circle class="g" cx="470.1" cy="373.3" r="3.6"/><circle class="p" cx="400.2" cy="307.4" r="3.6"/><circle class="g" cx="569.2" cy="202.2" r="3.6"/><circle class="r" cx="613.7" cy="460.2" r="3.6"/><circle class="r" cx="489.7" cy="311.3" r="3.6"/><circle class="r" cx="525.8" cy="415.9" r="3.6"/><circle class="g" cx="334.8" cy="561.8" r="3.6"/><circle class="g" cx="576.2" cy="378.2" r="3.6"/><circle class="g" cx="582.9" cy="213.5" r="3.6"/><circle class="g" cx="257.5" cy="642.0" r="3.6"/><circle class="g" cx="889.0" cy="231.5" r="3.6"/><circle class="g" cx="535.6" cy="378.1" r="3.6"/><circle class="r" cx="537.0" cy="272.8" r="3.6"/><circle class="p" cx="255.9" cy="437.5" r="3.6"/><circle class="p" cx="206.3" cy="424.7" r="3.6"/><circle class="g" cx="531.5" cy="238.6" r="3.6"/><circle class="p" cx="239.6" cy="428.9" r="3.6"/><circle class="g" cx="328.6" cy="531.0" r="3.6"/><circle class="r" cx="194.4" cy="364.8" r="3.6"/><circle class="p" cx="202.7" cy="424.1" r="3.6"/><circle class="p" cx="401.0" cy="313.4" r="3.6"/><circle class="g" cx="587.6" cy="393.6" r="3.6"/><circle class="p" cx="224.0" cy="451.4" r="3.6"/><circle class="g" cx="585.2" cy="202.7" r="3.6"/><circle class="p" cx="271.7" cy="322.1" r="3.6"/><circle class="r" cx="699.0" cy="187.7" r="3.6"/><circle class="g" cx="603.8" cy="396.0" r="3.6"/><circle class="p" cx="406.8" cy="293.9" r="3.6"/><circle class="g" cx="53.0" cy="654.0" r="3.6"/><circle class="r" cx="733.8" cy="215.8" r="3.6"/><circle class="p" cx="216.0" cy="415.0" r="3.6"/><circle class="r" cx="473.7" cy="247.3" r="3.6"/><circle class="g" cx="603.7" cy="225.2" r="3.6"/><circle class="g" cx="596.6" cy="525.8" r="3.6"/><circle class="r" cx="181.2" cy="372.6" r="3.6"/><circle class="r" cx="669.0" cy="196.8" r="3.6"/><circle class="p" cx="274.3" cy="434.2" r="3.6"/><circle class="g" cx="539.6" cy="228.7" r="3.6"/><circle class="r" cx="676.4" cy="230.9" r="3.6"/><circle class="r" cx="691.0" cy="214.0" r="3.6"/><circle class="g" cx="571.6" cy="215.0" r="3.6"/><circle class="p" cx="242.9" cy="411.5" r="3.6"/><circle class="g" cx="535.5" cy="374.2" r="3.6"/><circle class="r" cx="747.2" cy="201.6" r="3.6"/><circle class="p" cx="402.4" cy="391.9" r="3.6"/><circle class="g" cx="190.6" cy="267.2" r="3.6"/><circle class="r" cx="522.0" cy="402.4" r="3.6"/><circle class="g" cx="347.0" cy="584.4" r="3.6"/><circle class="r" cx="591.3" cy="450.3" r="3.6"/><circle class="r" cx="497.4" cy="289.0" r="3.6"/><circle class="p" cx="404.8" cy="382.9" r="3.6"/><circle class="r" cx="636.5" cy="212.1" r="3.6"/><circle class="r" cx="553.4" cy="423.4" r="3.6"/><circle class="p" cx="262.6" cy="386.6" r="3.6"/><circle class="r" cx="583.5" cy="478.8" r="3.6"/><circle class="g" cx="607.7" cy="383.7" r="3.6"/><circle class="r" cx="478.9" cy="407.1" r="3.6"/><circle class="g" cx="637.7" cy="435.6" r="3.6"/><circle class="g" cx="638.0" cy="447.7" r="3.6"/><circle class="g" cx="761.7" cy="212.8" r="3.6"/><circle class="p" cx="392.5" cy="285.5" r="3.6"/><circle class="p" cx="297.1" cy="441.9" r="3.6"/><circle class="g" cx="526.1" cy="369.5" r="3.6"/><circle class="p" cx="386.1" cy="291.5" r="3.6"/><circle class="r" cx="640.0" cy="219.1" r="3.6"/><circle class="g" cx="637.2" cy="253.0" r="3.6"/><circle class="r" cx="691.5" cy="175.8" r="3.6"/><circle class="g" cx="562.0" cy="373.0" r="3.6"/><circle class="r" cx="68.8" cy="658.8" r="3.6"/><circle class="p" cx="393.1" cy="318.8" r="3.6"/><circle class="g" cx="545.3" cy="479.9" r="3.6"/><circle class="g" cx="585.9" cy="232.1" r="3.6"/><circle class="g" cx="631.5" cy="431.6" r="3.6"/><circle class="g" cx="463.9" cy="231.5" r="3.6"/><circle class="g" cx="328.6" cy="559.7" r="3.6"/><circle class="r" cx="630.2" cy="185.5" r="3.6"/><circle class="r" cx="669.9" cy="230.4" r="3.6"/><circle class="p" cx="297.0" cy="442.0" r="3.6"/><circle class="r" cx="647.7" cy="206.6" r="3.6"/><circle class="g" cx="484.3" cy="380.5" r="3.6"/><circle class="r" cx="613.7" cy="464.5" r="3.6"/><circle class="p" cx="224.9" cy="438.3" r="3.6"/><circle class="g" cx="605.1" cy="209.7" r="3.6"/><circle class="p" cx="303.9" cy="294.6" r="3.6"/><circle class="p" cx="438.5" cy="656.1" r="3.6"/><circle class="r" cx="125.0" cy="651.0" r="3.6"/><circle class="r" cx="526.8" cy="288.8" r="3.6"/><circle class="r" cx="228.6" cy="367.2" r="3.6"/><circle class="r" cx="679.7" cy="228.1" r="3.6"/><circle class="g" cx="571.3" cy="374.2" r="3.6"/><circle class="p" cx="389.2" cy="317.7" r="3.6"/><circle class="r" cx="612.0" cy="483.1" r="3.6"/><circle class="r" cx="680.0" cy="197.5" r="3.6"/><circle class="r" cx="563.8" cy="400.1" r="3.6"/><circle class="p" cx="262.2" cy="362.5" r="3.6"/><circle class="r" cx="694.5" cy="174.5" r="3.6"/><circle class="p" cx="260.1" cy="414.6" r="3.6"/><circle class="p" cx="409.6" cy="392.2" r="3.6"/><circle class="p" cx="288.5" cy="295.3" r="3.6"/><circle class="p" cx="398.8" cy="383.6" r="3.6"/><circle class="r" cx="484.7" cy="246.1" r="3.6"/><circle class="r" cx="679.2" cy="224.3" r="3.6"/><circle class="g" cx="341.0" cy="578.0" r="3.6"/><circle class="r" cx="556.6" cy="400.3" r="3.6"/><circle class="p" cx="215.9" cy="420.4" r="3.6"/><circle class="g" cx="514.1" cy="468.1" r="3.6"/><circle class="p" cx="244.6" cy="420.3" r="3.6"/><circle class="r" cx="673.0" cy="236.0" r="3.6"/><circle class="g" cx="569.2" cy="250.7" r="3.6"/><circle class="r" cx="159.0" cy="256.5" r="3.6"/><circle class="g" cx="895.5" cy="232.0" r="3.6"/><circle class="r" cx="490.9" cy="273.3" r="3.6"/><circle class="r" cx="703.5" cy="203.8" r="3.6"/><circle class="r" cx="556.6" cy="409.1" r="3.6"/><circle class="r" cx="72.3" cy="326.4" r="3.6"/><circle class="g" cx="588.3" cy="344.4" r="3.6"/><circle class="g" cx="268.7" cy="655.9" r="3.6"/><circle class="g" cx="489.9" cy="458.3" r="3.6"/><circle class="r" cx="489.0" cy="277.0" r="3.6"/><circle class="r" cx="733.1" cy="200.3" r="3.6"/><circle class="r" cx="737.7" cy="184.9" r="3.6"/><circle class="g" cx="581.7" cy="217.0" r="3.6"/><circle class="r" cx="513.9" cy="324.6" r="3.6"/><circle class="g" cx="68.1" cy="369.5" r="3.6"/><circle class="p" cx="304.0" cy="295.0" r="3.6"/><circle class="p" cx="414.6" cy="391.6" r="3.6"/><circle class="r" cx="484.9" cy="403.8" r="3.6"/><circle class="r" cx="593.2" cy="461.0" r="3.6"/><circle class="r" cx="686.1" cy="186.0" r="3.6"/><circle class="g" cx="312.0" cy="549.5" r="3.6"/><circle class="p" cx="244.8" cy="368.1" r="3.6"/><circle class="g" cx="602.6" cy="229.3" r="3.6"/><circle class="p" cx="259.4" cy="445.9" r="3.6"/><circle class="p" cx="444.8" cy="659.1" r="3.6"/><circle class="p" cx="389.9" cy="383.7" r="3.6"/><circle class="g" cx="544.9" cy="484.5" r="3.6"/><circle class="r" cx="660.7" cy="181.7" r="3.6"/><circle class="r" cx="62.6" cy="315.0" r="3.6"/><circle class="g" cx="593.0" cy="241.2" r="3.6"/><circle class="r" cx="181.4" cy="377.0" r="3.6"/><circle class="g" cx="481.8" cy="480.8" r="3.6"/><circle class="r" cx="630.7" cy="224.4" r="3.6"/><circle class="r" cx="677.3" cy="175.2" r="3.6"/><circle class="p" cx="359.1" cy="303.6" r="3.6"/><circle class="r" cx="190.5" cy="364.6" r="3.6"/><circle class="r" cx="502.3" cy="317.7" r="3.6"/><circle class="g" cx="654.1" cy="467.4" r="3.6"/><circle class="r" cx="672.3" cy="185.1" r="3.6"/><circle class="g" cx="562.0" cy="233.0" r="3.6"/><circle class="r" cx="628.1" cy="221.5" r="3.6"/><circle class="r" cx="622.9" cy="462.7" r="3.6"/><circle class="p" cx="269.6" cy="365.4" r="3.6"/><circle class="r" cx="679.1" cy="218.9" r="3.6"/><circle class="r" cx="655.1" cy="174.2" r="3.6"/><circle class="r" cx="203.2" cy="384.4" r="3.6"/><circle class="r" cx="518.1" cy="418.6" r="3.6"/><circle class="g" cx="593.7" cy="235.1" r="3.6"/><circle class="g" cx="576.5" cy="242.1" r="3.6"/><circle class="g" cx="164.0" cy="341.0" r="3.6"/><circle class="g" cx="515.7" cy="372.8" r="3.6"/><circle class="g" cx="62.3" cy="340.4" r="3.6"/><circle class="g" cx="472.2" cy="292.2" r="3.6"/><circle class="r" cx="623.3" cy="203.3" r="3.6"/><circle class="r" cx="521.1" cy="293.6" r="3.6"/><circle class="p" cx="437.6" cy="674.9" r="3.6"/><circle class="g" cx="571.4" cy="244.4" r="3.6"/><circle class="g" cx="637.3" cy="500.5" r="3.6"/><circle class="r" cx="476.9" cy="409.8" r="3.6"/><circle class="g" cx="507.4" cy="441.4" r="3.6"/><circle class="r" cx="686.7" cy="198.4" r="3.6"/><circle class="g" cx="758.8" cy="215.2" r="3.6"/><circle class="g" cx="698.5" cy="246.3" r="3.6"/><circle class="p" cx="405.8" cy="389.8" r="3.6"/><circle class="r" cx="499.3" cy="242.3" r="3.6"/><circle class="g" cx="83.2" cy="353.7" r="3.6"/><circle class="r" cx="611.5" cy="444.9" r="3.6"/><circle class="g" cx="507.5" cy="447.6" r="3.6"/><circle class="g" cx="626.8" cy="410.9" r="3.6"/><circle class="g" cx="662.9" cy="451.0" r="3.6"/><circle class="r" cx="541.0" cy="423.6" r="3.6"/><circle class="g" cx="493.1" cy="401.0" r="3.6"/><circle class="p" cx="369.3" cy="384.8" r="3.6"/><circle class="g" cx="617.7" cy="220.8" r="3.6"/><circle class="r" cx="517.9" cy="283.9" r="3.6"/><circle class="g" cx="107.8" cy="666.6" r="3.6"/><circle class="g" cx="642.1" cy="256.2" r="3.6"/><circle class="r" cx="219.8" cy="375.2" r="3.6"/><circle class="g" cx="570.5" cy="460.9" r="3.6"/><circle class="r" cx="103.5" cy="306.5" r="3.6"/><circle class="p" cx="405.4" cy="318.1" r="3.6"/><circle class="r" cx="118.7" cy="282.2" r="3.6"/><circle class="p" cx="240.5" cy="403.6" r="3.6"/><circle class="r" cx="621.5" cy="451.1" r="3.6"/><circle class="p" cx="225.9" cy="448.2" r="3.6"/><circle class="g" cx="221.7" cy="618.8" r="3.6"/><circle class="g" cx="244.6" cy="332.6" r="3.6"/><circle class="r" cx="192.6" cy="385.2" r="3.6"/><circle class="r" cx="471.1" cy="280.3" r="3.6"/><circle class="g" cx="73.6" cy="375.0" r="3.6"/><circle class="r" cx="623.9" cy="474.2" r="3.6"/><circle class="r" cx="497.3" cy="317.3" r="3.6"/><circle class="g" cx="623.5" cy="406.1" r="3.6"/><circle class="p" cx="247.5" cy="450.2" r="3.6"/><circle class="g" cx="596.1" cy="231.6" r="3.6"/><circle class="r" cx="184.3" cy="385.4" r="3.6"/><circle class="g" cx="254.1" cy="342.8" r="3.6"/><circle class="g" cx="510.0" cy="468.4" r="3.6"/><circle class="p" cx="267.5" cy="361.0" r="3.6"/><circle class="r" cx="733.5" cy="212.7" r="3.6"/><circle class="r" cx="612.7" cy="445.7" r="3.6"/><circle class="g" cx="564.6" cy="239.2" r="3.6"/><circle class="r" cx="509.7" cy="325.0" r="3.6"/><circle class="r" cx="601.7" cy="470.4" r="3.6"/><circle class="r" cx="511.4" cy="312.8" r="3.6"/><circle class="r" cx="591.0" cy="458.2" r="3.6"/><circle class="g" cx="452.1" cy="220.6" r="3.6"/><circle class="r" cx="108.7" cy="282.5" r="3.6"/><circle class="p" cx="383.6" cy="341.5" r="3.6"/><circle class="r" cx="633.8" cy="183.1" r="3.6"/><circle class="r" cx="684.9" cy="223.4" r="3.6"/><circle class="r" cx="87.1" cy="317.5" r="3.6"/><circle class="r" cx="498.4" cy="285.7" r="3.6"/><circle class="p" cx="437.3" cy="381.4" r="3.6"/><circle class="r" cx="534.8" cy="270.7" r="3.6"/><circle class="p" cx="377.0" cy="657.0" r="3.6"/><circle class="r" cx="527.1" cy="400.3" r="3.6"/><circle class="r" cx="610.0" cy="483.8" r="3.6"/><circle class="r" cx="488.1" cy="287.6" r="3.6"/><circle class="p" cx="223.1" cy="429.4" r="3.6"/><circle class="r" cx="649.3" cy="177.4" r="3.6"/><circle class="g" cx="601.3" cy="421.8" r="3.6"/><circle class="g" cx="67.4" cy="360.1" r="3.6"/><circle class="r" cx="491.0" cy="307.2" r="3.6"/><circle class="g" cx="232.0" cy="660.5" r="3.6"/><circle class="g" cx="586.1" cy="197.0" r="3.6"/><circle class="r" cx="687.8" cy="208.0" r="3.6"/><circle class="g" cx="628.2" cy="420.8" r="3.6"/><circle class="g" cx="702.9" cy="181.4" r="3.6"/><circle class="g" cx="459.6" cy="373.3" r="3.6"/><circle class="g" cx="575.6" cy="211.5" r="3.6"/><circle class="r" cx="645.0" cy="225.6" r="3.6"/><circle class="g" cx="548.9" cy="380.0" r="3.6"/><circle class="g" cx="625.6" cy="430.5" r="3.6"/><circle class="r" cx="215.8" cy="353.5" r="3.6"/><circle class="g" cx="245.4" cy="644.3" r="3.6"/><circle class="p" cx="188.3" cy="430.4" r="3.6"/><circle class="g" cx="613.1" cy="235.6" r="3.6"/><circle class="r" cx="648.8" cy="190.2" r="3.6"/><circle class="p" cx="269.6" cy="306.7" r="3.6"/><circle class="r" cx="731.1" cy="190.7" r="3.6"/><circle class="g" cx="543.2" cy="501.7" r="3.6"/><circle class="r" cx="590.6" cy="441.3" r="3.6"/><circle class="p" cx="246.7" cy="389.0" r="3.6"/><circle class="r" cx="530.2" cy="288.3" r="3.6"/><circle class="g" cx="546.1" cy="375.5" r="3.6"/><circle class="g" cx="693.2" cy="229.4" r="3.6"/><circle class="r" cx="559.4" cy="392.8" r="3.6"/><circle class="p" cx="410.5" cy="306.4" r="3.6"/><circle class="g" cx="228.1" cy="291.5" r="3.6"/><circle class="g" cx="581.9" cy="420.1" r="3.6"/><circle class="r" cx="516.6" cy="274.9" r="3.6"/><circle class="g" cx="477.2" cy="471.4" r="3.6"/><circle class="g" cx="641.0" cy="440.7" r="3.6"/><circle class="p" cx="262.3" cy="297.7" r="3.6"/><circle class="g" cx="704.8" cy="217.2" r="3.6"/><circle class="g" cx="521.3" cy="269.8" r="3.6"/><circle class="g" cx="460.6" cy="249.9" r="3.6"/><circle class="p" cx="224.4" cy="426.2" r="3.6"/><circle class="g" cx="535.6" cy="371.6" r="3.6"/><circle class="g" cx="196.0" cy="322.7" r="3.6"/><circle class="g" cx="548.5" cy="482.1" r="3.6"/><circle class="r" cx="156.5" cy="261.5" r="3.6"/><circle class="g" cx="530.4" cy="500.2" r="3.6"/><circle class="g" cx="274.5" cy="322.7" r="3.6"/><circle class="p" cx="203.2" cy="427.1" r="3.6"/><circle class="r" cx="494.3" cy="312.6" r="3.6"/><circle class="p" cx="273.2" cy="401.3" r="3.6"/><circle class="g" cx="633.9" cy="436.5" r="3.6"/><circle class="r" cx="700.5" cy="205.3" r="3.6"/><circle class="g" cx="341.0" cy="559.7" r="3.6"/><circle class="r" cx="788.0" cy="125.0" r="3.6"/><circle class="r" cx="660.7" cy="231.3" r="3.6"/><circle class="p" cx="227.6" cy="408.9" r="3.6"/><circle class="p" cx="299.0" cy="291.6" r="3.6"/><circle class="r" cx="501.8" cy="263.5" r="3.6"/><circle class="p" cx="221.3" cy="413.8" r="3.6"/><circle class="g" cx="516.3" cy="451.1" r="3.6"/><circle class="r" cx="220.8" cy="366.6" r="3.6"/><circle class="r" cx="214.3" cy="374.2" r="3.6"/><circle class="g" cx="496.7" cy="382.6" r="3.6"/><circle class="r" cx="547.5" cy="403.5" r="3.6"/><circle class="g" cx="556.8" cy="376.6" r="3.6"/><circle class="p" cx="221.2" cy="397.3" r="3.6"/><circle class="g" cx="196.4" cy="278.0" r="3.6"/><circle class="r" cx="209.8" cy="382.2" r="3.6"/><circle class="g" cx="580.3" cy="369.7" r="3.6"/><circle class="r" cx="662.9" cy="222.7" r="3.6"/><circle class="r" cx="548.9" cy="424.2" r="3.6"/><circle class="g" cx="534.7" cy="243.7" r="3.6"/><circle class="g" cx="551.7" cy="446.0" r="3.6"/><circle class="g" cx="240.9" cy="626.2" r="3.6"/><circle class="r" cx="601.7" cy="451.1" r="3.6"/><circle class="g" cx="541.5" cy="338.9" r="3.6"/><circle class="g" cx="601.4" cy="348.1" r="3.6"/><circle class="r" cx="738.6" cy="216.3" r="3.6"/><circle class="g" cx="233.8" cy="621.8" r="3.6"/><circle class="g" cx="599.2" cy="248.1" r="3.6"/><circle class="r" cx="30.3" cy="330.9" r="3.6"/><circle class="p" cx="200.1" cy="427.0" r="3.6"/><circle class="g" cx="234.8" cy="294.8" r="3.6"/><circle class="p" cx="437.4" cy="665.4" r="3.6"/><circle class="p" cx="239.4" cy="424.3" r="3.6"/><circle class="p" cx="387.2" cy="284.7" r="3.6"/><circle class="r" cx="640.5" cy="178.3" r="3.6"/><circle class="g" cx="586.7" cy="217.6" r="3.6"/><circle class="g" cx="550.1" cy="213.8" r="3.6"/><circle class="p" cx="294.5" cy="297.1" r="3.6"/><circle class="r" cx="489.2" cy="254.9" r="3.6"/><circle class="p" cx="208.0" cy="407.2" r="3.6"/><circle class="g" cx="567.6" cy="462.8" r="3.6"/><circle class="g" cx="638.5" cy="457.5" r="3.6"/><circle class="p" cx="229.9" cy="415.9" r="3.6"/><circle class="p" cx="210.4" cy="413.9" r="3.6"/><circle class="r" cx="729.8" cy="212.4" r="3.6"/><circle class="r" cx="476.6" cy="256.5" r="3.6"/><circle class="g" cx="448.7" cy="296.7" r="3.6"/><circle class="g" cx="567.7" cy="232.9" r="3.6"/><circle class="p" cx="271.7" cy="291.8" r="3.6"/><circle class="r" cx="634.3" cy="198.7" r="3.6"/><circle class="p" cx="302.3" cy="288.4" r="3.6"/><circle class="g" cx="545.7" cy="275.4" r="3.6"/><circle class="g" cx="199.0" cy="264.5" r="3.6"/><circle class="r" cx="526.2" cy="406.5" r="3.6"/><circle class="r" cx="123.7" cy="257.8" r="3.6"/><circle class="g" cx="542.9" cy="371.0" r="3.6"/><circle class="p" cx="205.9" cy="413.3" r="3.6"/><circle class="g" cx="242.8" cy="342.3" r="3.6"/><circle class="r" cx="588.0" cy="447.6" r="3.6"/><circle class="g" cx="466.4" cy="310.6" r="3.6"/><circle class="r" cx="475.6" cy="390.0" r="3.6"/><circle class="r" cx="596.4" cy="471.8" r="3.6"/><circle class="g" cx="245.1" cy="329.5" r="3.6"/><circle class="g" cx="476.3" cy="307.1" r="3.6"/><circle class="g" cx="755.0" cy="206.8" r="3.6"/><circle class="g" cx="721.0" cy="224.2" r="3.6"/><circle class="r" cx="508.5" cy="317.5" r="3.6"/><circle class="g" cx="710.1" cy="181.0" r="3.6"/><circle class="g" cx="584.1" cy="196.4" r="3.6"/><circle class="r" cx="524.8" cy="392.9" r="3.6"/><circle class="g" cx="238.5" cy="622.5" r="3.6"/><circle class="g" cx="589.2" cy="206.5" r="3.6"/><circle class="g" cx="482.7" cy="374.7" r="3.6"/><circle class="g" cx="270.4" cy="323.2" r="3.6"/><circle class="g" cx="540.2" cy="366.3" r="3.6"/><circle class="p" cx="265.4" cy="427.9" r="3.6"/><circle class="r" cx="667.2" cy="201.9" r="3.6"/><circle class="g" cx="476.4" cy="467.3" r="3.6"/><circle class="p" cx="292.7" cy="296.1" r="3.6"/><circle class="r" cx="709.7" cy="197.9" r="3.6"/><circle class="r" cx="520.8" cy="283.0" r="3.6"/><circle class="p" cx="204.1" cy="440.0" r="3.6"/><circle class="p" cx="400.8" cy="292.5" r="3.6"/><circle class="g" cx="203.3" cy="307.8" r="3.6"/><circle class="g" cx="593.4" cy="240.2" r="3.6"/><circle class="r" cx="509.0" cy="284.2" r="3.6"/><circle class="g" cx="584.4" cy="385.5" r="3.6"/><circle class="r" cx="557.6" cy="438.9" r="3.6"/><circle class="g" cx="706.2" cy="181.5" r="3.6"/><circle class="r" cx="528.1" cy="406.8" r="3.6"/><circle class="g" cx="236.3" cy="625.8" r="3.6"/><circle class="r" cx="189.9" cy="388.9" r="3.6"/><circle class="g" cx="609.5" cy="210.3" r="3.6"/><circle class="r" cx="727.5" cy="186.7" r="3.6"/><circle class="g" cx="621.2" cy="232.4" r="3.6"/><circle class="g" cx="597.2" cy="219.8" r="3.6"/><circle class="g" cx="188.6" cy="271.2" r="3.6"/><circle class="r" cx="528.2" cy="413.5" r="3.6"/><circle class="g" cx="623.3" cy="435.1" r="3.6"/><circle class="g" cx="556.4" cy="223.1" r="3.6"/><circle class="r" cx="491.1" cy="248.3" r="3.6"/><circle class="p" cx="271.5" cy="382.1" r="3.6"/><circle class="g" cx="98.4" cy="666.6" r="3.6"/><circle class="g" cx="479.2" cy="310.6" r="3.6"/><circle class="g" cx="459.5" cy="378.2" r="3.6"/><circle class="p" cx="282.1" cy="448.1" r="3.6"/><circle class="r" cx="192.1" cy="370.7" r="3.6"/><circle class="p" cx="434.5" cy="385.8" r="3.6"/><circle class="g" cx="603.2" cy="247.6" r="3.6"/><circle class="g" cx="703.3" cy="224.8" r="3.6"/><circle class="g" cx="560.0" cy="457.4" r="3.6"/><circle class="g" cx="583.4" cy="370.0" r="3.6"/><circle class="r" cx="489.5" cy="270.4" r="3.6"/><circle class="g" cx="579.8" cy="195.5" r="3.6"/><circle class="g" cx="628.3" cy="428.2" r="3.6"/><circle class="g" cx="576.3" cy="381.5" r="3.6"/><circle class="g" cx="493.0" cy="591.0" r="3.6"/><circle class="g" cx="469.0" cy="313.3" r="3.6"/><circle class="g" cx="157.7" cy="338.5" r="3.6"/><circle class="g" cx="532.0" cy="485.1" r="3.6"/><circle class="p" cx="218.8" cy="403.4" r="3.6"/><circle class="g" cx="559.3" cy="204.0" r="3.6"/><circle class="r" cx="493.0" cy="300.4" r="3.6"/><circle class="r" cx="121.9" cy="647.0" r="3.6"/><circle class="g" cx="190.2" cy="275.4" r="3.6"/><circle class="r" cx="153.1" cy="278.8" r="3.6"/><circle class="r" cx="551.1" cy="440.2" r="3.6"/><circle class="r" cx="591.8" cy="447.0" r="3.6"/><circle class="r" cx="683.6" cy="218.9" r="3.6"/><circle class="p" cx="268.9" cy="457.1" r="3.6"/><circle class="p" cx="290.4" cy="301.0" r="3.6"/><circle class="p" cx="394.8" cy="327.7" r="3.6"/><circle class="g" cx="633.1" cy="450.5" r="3.6"/><circle class="g" cx="587.4" cy="369.1" r="3.6"/><circle class="g" cx="543.1" cy="517.8" r="3.6"/><circle class="g" cx="80.9" cy="355.5" r="3.6"/><circle class="g" cx="580.2" cy="384.6" r="3.6"/><circle class="g" cx="606.2" cy="220.7" r="3.6"/><circle class="g" cx="585.1" cy="348.9" r="3.6"/><circle class="p" cx="251.6" cy="354.1" r="3.6"/><circle class="g" cx="602.6" cy="237.8" r="3.6"/><circle class="p" cx="287.7" cy="330.6" r="3.6"/><circle class="r" cx="226.9" cy="356.2" r="3.6"/><circle class="g" cx="252.2" cy="338.9" r="3.6"/><circle class="g" cx="75.3" cy="356.8" r="3.6"/><circle class="r" cx="697.6" cy="190.8" r="3.6"/><circle class="g" cx="634.2" cy="461.7" r="3.6"/><circle class="r" cx="75.8" cy="669.0" r="3.6"/><circle class="g" cx="67.9" cy="355.3" r="3.6"/><circle class="r" cx="534.8" cy="403.1" r="3.6"/><circle class="g" cx="568.7" cy="370.0" r="3.6"/><circle class="g" cx="530.9" cy="252.5" r="3.6"/><circle class="r" cx="139.0" cy="679.0" r="3.6"/><circle class="g" cx="607.7" cy="412.1" r="3.6"/><circle class="r" cx="805.7" cy="159.4" r="3.6"/><circle class="r" cx="478.3" cy="259.9" r="3.6"/><circle class="r" cx="610.5" cy="468.6" r="3.6"/><circle class="r" cx="200.0" cy="386.6" r="3.6"/><circle class="p" cx="222.9" cy="446.7" r="3.6"/><circle class="r" cx="533.1" cy="276.0" r="3.6"/><circle class="r" cx="685.9" cy="220.3" r="3.6"/><circle class="r" cx="795.6" cy="150.6" r="3.6"/><circle class="p" cx="403.2" cy="386.2" r="3.6"/><circle class="g" cx="578.9" cy="247.9" r="3.6"/><circle class="g" cx="541.1" cy="376.8" r="3.6"/><circle class="r" cx="477.3" cy="280.7" r="3.6"/><circle class="r" cx="609.7" cy="455.9" r="3.6"/><circle class="g" cx="541.6" cy="488.2" r="3.6"/><circle class="g" cx="583.3" cy="424.0" r="3.6"/><circle class="g" cx="564.7" cy="371.4" r="3.6"/><circle class="g" cx="578.5" cy="372.4" r="3.6"/><circle class="g" cx="567.7" cy="222.3" r="3.6"/><circle class="g" cx="494.0" cy="334.9" r="3.6"/><circle class="g" cx="82.8" cy="669.7" r="3.6"/><circle class="g" cx="532.2" cy="337.4" r="3.6"/><circle class="g" cx="602.2" cy="217.1" r="3.6"/><circle class="p" cx="222.1" cy="435.4" r="3.6"/><circle class="g" cx="68.4" cy="365.7" r="3.6"/><circle class="r" cx="525.8" cy="324.6" r="3.6"/><circle class="g" cx="572.7" cy="239.4" r="3.6"/><circle class="p" cx="258.5" cy="306.1" r="3.6"/><circle class="r" cx="202.0" cy="369.1" r="3.6"/><circle class="g" cx="567.0" cy="347.4" r="3.6"/><circle class="r" cx="634.5" cy="216.2" r="3.6"/><circle class="g" cx="304.0" cy="543.3" r="3.6"/><circle class="p" cx="254.6" cy="386.7" r="3.6"/><circle class="g" cx="615.5" cy="516.0" r="3.6"/><circle class="g" cx="443.4" cy="289.7" r="3.6"/><circle class="r" cx="209.1" cy="378.7" r="3.6"/><circle class="r" cx="735.5" cy="202.8" r="3.6"/><circle class="g" cx="705.6" cy="228.1" r="3.6"/><circle class="g" cx="236.3" cy="634.7" r="3.6"/><circle class="g" cx="511.8" cy="490.0" r="3.6"/><circle class="g" cx="495.3" cy="486.5" r="3.6"/><circle class="g" cx="441.3" cy="286.5" r="3.6"/><circle class="g" cx="634.6" cy="263.2" r="3.6"/><circle class="g" cx="361.5" cy="607.0" r="3.6"/><circle class="r" cx="741.5" cy="192.7" r="3.6"/><circle class="g" cx="543.7" cy="226.3" r="3.6"/><circle class="r" cx="693.7" cy="182.1" r="3.6"/><circle class="g" cx="572.0" cy="410.6" r="3.6"/><circle class="r" cx="99.4" cy="308.7" r="3.6"/><circle class="r" cx="466.4" cy="278.6" r="3.6"/><circle class="g" cx="586.2" cy="235.6" r="3.6"/><circle class="g" cx="290.6" cy="335.5" r="3.6"/><circle class="r" cx="786.8" cy="156.9" r="3.6"/><circle class="p" cx="234.0" cy="408.7" r="3.6"/><circle class="r" cx="528.0" cy="275.6" r="3.6"/><circle class="r" cx="477.3" cy="277.4" r="3.6"/><circle class="g" cx="234.6" cy="639.8" r="3.6"/><circle class="p" cx="389.6" cy="390.4" r="3.6"/><circle class="r" cx="484.2" cy="263.4" r="3.6"/><circle class="g" cx="541.6" cy="481.5" r="3.6"/><circle class="g" cx="602.3" cy="221.6" r="3.6"/><circle class="g" cx="378.9" cy="637.9" r="3.6"/><circle class="g" cx="658.8" cy="468.1" r="3.6"/><circle class="p" cx="230.6" cy="399.7" r="3.6"/><circle class="g" cx="587.6" cy="382.2" r="3.6"/><circle class="p" cx="425.6" cy="665.8" r="3.6"/><circle class="p" cx="359.7" cy="285.1" r="3.6"/><circle class="g" cx="630.3" cy="440.0" r="3.6"/><circle class="r" cx="743.2" cy="196.3" r="3.6"/><circle class="r" cx="740.8" cy="209.3" r="3.6"/><circle class="r" cx="516.0" cy="296.0" r="3.6"/><circle class="g" cx="219.1" cy="284.2" r="3.6"/><circle class="p" cx="406.9" cy="290.6" r="3.6"/><circle class="g" cx="195.1" cy="263.7" r="3.6"/><circle class="r" cx="641.8" cy="186.2" r="3.6"/><circle class="g" cx="552.9" cy="241.6" r="3.6"/><circle class="g" cx="74.5" cy="364.6" r="3.6"/><circle class="r" cx="683.3" cy="203.5" r="3.6"/><circle class="r" cx="625.8" cy="195.5" r="3.6"/><circle class="g" cx="541.6" cy="505.4" r="3.6"/><circle class="g" cx="552.1" cy="375.9" r="3.6"/><circle class="g" cx="234.0" cy="634.7" r="3.6"/><circle class="g" cx="609.7" cy="346.8" r="3.6"/><circle class="g" cx="480.9" cy="367.4" r="3.6"/><circle class="p" cx="249.9" cy="357.8" r="3.6"/><circle class="g" cx="589.7" cy="226.4" r="3.6"/><circle class="g" cx="245.6" cy="310.1" r="3.6"/><circle class="g" cx="608.9" cy="222.9" r="3.6"/><circle class="g" cx="516.0" cy="471.4" r="3.6"/><circle class="r" cx="525.1" cy="291.1" r="3.6"/><circle class="r" cx="661.6" cy="172.4" r="3.6"/><circle class="g" cx="519.1" cy="453.3" r="3.6"/><circle class="p" cx="385.2" cy="338.3" r="3.6"/><circle class="g" cx="80.8" cy="368.4" r="3.6"/><circle class="g" cx="522.4" cy="370.0" r="3.6"/><circle class="g" cx="505.6" cy="365.8" r="3.6"/><circle class="p" cx="387.4" cy="323.8" r="3.6"/><circle class="p" cx="258.4" cy="300.2" r="3.6"/><circle class="g" cx="602.7" cy="348.1" r="3.6"/><circle class="r" cx="677.2" cy="238.6" r="3.6"/><circle class="g" cx="474.4" cy="302.7" r="3.6"/><circle class="r" cx="618.3" cy="459.1" r="3.6"/><circle class="g" cx="590.9" cy="396.9" r="3.6"/><circle class="r" cx="90.1" cy="326.5" r="3.6"/><circle class="g" cx="696.2" cy="243.3" r="3.6"/><circle class="g" cx="74.7" cy="350.5" r="3.6"/><circle class="r" cx="806.0" cy="150.0" r="3.6"/><circle class="g" cx="574.2" cy="384.2" r="3.6"/><circle class="r" cx="688.6" cy="202.9" r="3.6"/><circle class="r" cx="690.7" cy="198.8" r="3.6"/><circle class="p" cx="434.6" cy="659.7" r="3.6"/><circle class="r" cx="542.5" cy="421.4" r="3.6"/><circle class="g" cx="639.5" cy="464.4" r="3.6"/><circle class="r" cx="564.9" cy="393.8" r="3.6"/><circle class="g" cx="60.0" cy="654.0" r="3.6"/><circle class="p" cx="354.8" cy="297.2" r="3.6"/><circle class="g" cx="512.7" cy="379.8" r="3.6"/><circle class="g" cx="577.5" cy="461.2" r="3.6"/><circle class="r" cx="633.1" cy="219.5" r="3.6"/><circle class="g" cx="495.1" cy="409.9" r="3.6"/><circle class="g" cx="534.1" cy="481.0" r="3.6"/><circle class="p" cx="258.5" cy="292.0" r="3.6"/><circle class="r" cx="542.5" cy="413.5" r="3.6"/><circle class="g" cx="653.5" cy="514.6" r="3.6"/><circle class="r" cx="61.8" cy="299.4" r="3.6"/><circle class="g" cx="548.8" cy="487.1" r="3.6"/><circle class="p" cx="258.0" cy="362.4" r="3.6"/><circle class="g" cx="511.6" cy="414.0" r="3.6"/><circle class="p" cx="248.1" cy="401.9" r="3.6"/><circle class="g" cx="256.8" cy="332.2" r="3.6"/><circle class="r" cx="69.5" cy="307.6" r="3.6"/><circle class="g" cx="616.6" cy="423.6" r="3.6"/><circle class="p" cx="239.6" cy="420.5" r="3.6"/><circle class="g" cx="574.2" cy="389.8" r="3.6"/><circle class="p" cx="244.3" cy="401.9" r="3.6"/><circle class="r" cx="583.2" cy="445.3" r="3.6"/><circle class="g" cx="491.6" cy="468.7" r="3.6"/><circle class="g" cx="565.1" cy="367.0" r="3.6"/><circle class="p" cx="242.0" cy="387.4" r="3.6"/><circle class="g" cx="505.2" cy="338.6" r="3.6"/><circle class="g" cx="660.9" cy="442.4" r="3.6"/><circle class="r" cx="665.0" cy="232.5" r="3.6"/><circle class="r" cx="72.0" cy="320.1" r="3.6"/><circle class="r" cx="726.6" cy="197.1" r="3.6"/><circle class="p" cx="353.5" cy="291.9" r="3.6"/><circle class="g" cx="465.3" cy="368.2" r="3.6"/><circle class="g" cx="193.8" cy="269.3" r="3.6"/><circle class="r" cx="493.2" cy="269.6" r="3.6"/><circle class="g" cx="608.7" cy="249.4" r="3.6"/><circle class="r" cx="505.3" cy="325.3" r="3.6"/><circle class="g" cx="652.8" cy="519.1" r="3.6"/><circle class="g" cx="892.0" cy="229.0" r="3.6"/><circle class="p" cx="394.5" cy="289.7" r="3.6"/><circle class="g" cx="767.9" cy="210.3" r="3.6"/><circle class="g" cx="597.0" cy="221.1" r="3.6"/><circle class="p" cx="282.6" cy="435.5" r="3.6"/><circle class="g" cx="715.7" cy="184.7" r="3.6"/><circle class="p" cx="247.3" cy="435.4" r="3.6"/><circle class="r" cx="108.9" cy="253.6" r="3.6"/><circle class="g" cx="638.4" cy="429.1" r="3.6"/><circle class="p" cx="195.1" cy="428.3" r="3.6"/><circle class="g" cx="39.3" cy="362.3" r="3.6"/><circle class="r" cx="645.4" cy="186.4" r="3.6"/><circle class="p" cx="260.3" cy="300.2" r="3.6"/><circle class="g" cx="557.3" cy="380.9" r="3.6"/><circle class="g" cx="242.2" cy="337.5" r="3.6"/><circle class="p" cx="252.1" cy="368.2" r="3.6"/><circle class="p" cx="278.6" cy="305.3" r="3.6"/><circle class="r" cx="730.7" cy="185.7" r="3.6"/><circle class="g" cx="26.7" cy="358.6" r="3.6"/><circle class="r" cx="748.7" cy="205.4" r="3.6"/><circle class="g" cx="272.9" cy="353.2" r="3.6"/><circle class="g" cx="656.5" cy="520.0" r="3.6"/><circle class="g" cx="592.3" cy="360.9" r="3.6"/><circle class="g" cx="65.7" cy="347.1" r="3.6"/><circle class="p" cx="234.0" cy="433.3" r="3.6"/><circle class="r" cx="535.4" cy="315.8" r="3.6"/><circle class="r" cx="544.8" cy="414.0" r="3.6"/><circle class="r" cx="478.9" cy="277.9" r="3.6"/><circle class="g" cx="495.5" cy="374.0" r="3.6"/><circle class="r" cx="664.7" cy="182.5" r="3.6"/><circle class="g" cx="635.6" cy="468.0" r="3.6"/><circle class="g" cx="483.7" cy="297.5" r="3.6"/><circle class="g" cx="248.6" cy="327.5" r="3.6"/><circle class="r" cx="600.4" cy="440.4" r="3.6"/><circle class="r" cx="696.3" cy="197.1" r="3.6"/><circle class="p" cx="260.4" cy="451.2" r="3.6"/><circle class="g" cx="206.7" cy="273.2" r="3.6"/><circle class="g" cx="126.2" cy="345.6" r="3.6"/><circle class="g" cx="370.3" cy="631.2" r="3.6"/><circle class="p" cx="265.9" cy="435.2" r="3.6"/><circle class="g" cx="599.1" cy="247.2" r="3.6"/><circle class="p" cx="390.2" cy="326.4" r="3.6"/><circle class="g" cx="586.4" cy="529.7" r="3.6"/><circle class="g" cx="595.8" cy="215.3" r="3.6"/><circle class="p" cx="241.3" cy="417.3" r="3.6"/><circle class="p" cx="232.0" cy="421.8" r="3.6"/><circle class="r" cx="530.5" cy="426.0" r="3.6"/><circle class="g" cx="493.6" cy="377.3" r="3.6"/><circle class="g" cx="483.6" cy="341.4" r="3.6"/><circle class="g" cx="235.8" cy="443.5" r="3.6"/><circle class="g" cx="502.5" cy="403.0" r="3.6"/><circle class="p" cx="363.3" cy="283.4" r="3.6"/><circle class="r" cx="462.2" cy="277.7" r="3.6"/><circle class="r" cx="535.6" cy="420.2" r="3.6"/><circle class="p" cx="252.2" cy="439.4" r="3.6"/><circle class="g" cx="271.2" cy="656.7" r="3.6"/><circle class="g" cx="724.5" cy="214.6" r="3.6"/><circle class="g" cx="700.9" cy="171.0" r="3.6"/><circle class="r" cx="600.2" cy="453.3" r="3.6"/><circle class="p" cx="434.1" cy="382.6" r="3.6"/><circle class="p" cx="252.3" cy="409.1" r="3.6"/><circle class="r" cx="675.1" cy="204.4" r="3.6"/><circle class="g" cx="586.1" cy="220.7" r="3.6"/><circle class="g" cx="493.7" cy="367.3" r="3.6"/><circle class="r" cx="596.2" cy="455.1" r="3.6"/><circle class="g" cx="508.0" cy="471.9" r="3.6"/><circle class="r" cx="206.8" cy="376.9" r="3.6"/><circle class="r" cx="685.1" cy="182.5" r="3.6"/><circle class="r" cx="483.7" cy="274.9" r="3.6"/><circle class="g" cx="577.1" cy="335.7" r="3.6"/><circle class="p" cx="263.8" cy="436.3" r="3.6"/><circle class="p" cx="249.1" cy="361.4" r="3.6"/><circle class="r" cx="227.1" cy="370.7" r="3.6"/><circle class="r" cx="106.7" cy="255.4" r="3.6"/><circle class="g" cx="243.8" cy="301.2" r="3.6"/><circle class="p" cx="273.0" cy="451.0" r="3.6"/><circle class="g" cx="669.0" cy="464.1" r="3.6"/><circle class="r" cx="234.1" cy="358.0" r="3.6"/><circle class="g" cx="484.1" cy="309.7" r="3.6"/><circle class="p" cx="265.2" cy="454.6" r="3.6"/><circle class="r" cx="629.0" cy="209.5" r="3.6"/><circle class="g" cx="225.1" cy="643.5" r="3.6"/><circle class="g" cx="708.1" cy="223.5" r="3.6"/><circle class="r" cx="192.0" cy="375.8" r="3.6"/><circle class="p" cx="394.2" cy="312.2" r="3.6"/><circle class="g" cx="580.7" cy="209.4" r="3.6"/><circle class="p" cx="254.5" cy="445.3" r="3.6"/><circle class="g" cx="528.6" cy="338.9" r="3.6"/><circle class="g" cx="609.9" cy="394.5" r="3.6"/><circle class="g" cx="219.3" cy="621.0" r="3.6"/><circle class="p" cx="258.4" cy="406.3" r="3.6"/><circle class="g" cx="550.3" cy="502.8" r="3.6"/><circle class="r" cx="580.4" cy="478.9" r="3.6"/><circle class="g" cx="502.3" cy="484.7" r="3.6"/><circle class="p" cx="268.7" cy="302.1" r="3.6"/><circle class="r" cx="132.8" cy="647.8" r="3.6"/><circle class="p" cx="209.1" cy="440.9" r="3.6"/><circle class="g" cx="457.5" cy="292.0" r="3.6"/><circle class="g" cx="193.0" cy="327.0" r="3.6"/><circle class="g" cx="575.3" cy="374.0" r="3.6"/><circle class="r" cx="537.2" cy="413.5" r="3.6"/><circle class="g" cx="507.4" cy="420.5" r="3.6"/><circle class="p" cx="402.8" cy="285.3" r="3.6"/><circle class="r" cx="81.4" cy="334.6" r="3.6"/><circle class="g" cx="575.4" cy="398.8" r="3.6"/><circle class="g" cx="582.7" cy="229.1" r="3.6"/><circle class="p" cx="294.4" cy="301.3" r="3.6"/><circle class="g" cx="712.0" cy="204.2" r="3.6"/><circle class="r" cx="701.4" cy="208.6" r="3.6"/><circle class="p" cx="221.1" cy="399.1" r="3.6"/><circle class="g" cx="884.0" cy="228.0" r="3.6"/><circle class="r" cx="141.4" cy="645.5" r="3.6"/><circle class="g" cx="238.9" cy="638.7" r="3.6"/><circle class="g" cx="561.7" cy="370.7" r="3.6"/><circle class="r" cx="482.8" cy="258.4" r="3.6"/><circle class="r" cx="620.8" cy="202.0" r="3.6"/><circle class="g" cx="499.1" cy="339.7" r="3.6"/><circle class="p" cx="362.9" cy="290.5" r="3.6"/><circle class="r" cx="785.5" cy="143.0" r="3.6"/><circle class="g" cx="666.0" cy="459.9" r="3.6"/><circle class="p" cx="248.0" cy="375.4" r="3.6"/><circle class="p" cx="194.5" cy="424.5" r="3.6"/><circle class="g" cx="487.2" cy="479.9" r="3.6"/><circle class="g" cx="586.0" cy="340.6" r="3.6"/><circle class="g" cx="493.5" cy="370.5" r="3.6"/><circle class="g" cx="247.9" cy="324.5" r="3.6"/><circle class="g" cx="470.4" cy="326.4" r="3.6"/><circle class="r" cx="213.6" cy="360.3" r="3.6"/><circle class="g" cx="654.9" cy="438.8" r="3.6"/><circle class="g" cx="591.7" cy="411.8" r="3.6"/><circle class="r" cx="638.9" cy="228.9" r="3.6"/><circle class="g" cx="258.5" cy="651.3" r="3.6"/><circle class="r" cx="593.0" cy="456.0" r="3.6"/><circle class="r" cx="575.7" cy="482.2" r="3.6"/><circle class="g" cx="586.4" cy="226.4" r="3.6"/><circle class="r" cx="522.4" cy="301.0" r="3.6"/><circle class="g" cx="225.1" cy="647.5" r="3.6"/><circle class="p" cx="266.4" cy="395.5" r="3.6"/><circle class="p" cx="266.2" cy="451.9" r="3.6"/><circle class="p" cx="433.1" cy="672.8" r="3.6"/><circle class="r" cx="588.7" cy="483.1" r="3.6"/><circle class="r" cx="552.0" cy="408.8" r="3.6"/><circle class="g" cx="594.6" cy="528.9" r="3.6"/><circle class="g" cx="401.0" cy="664.0" r="3.6"/><circle class="p" cx="208.2" cy="433.2" r="3.6"/><circle class="g" cx="588.2" cy="408.1" r="3.6"/><circle class="p" cx="267.8" cy="442.9" r="3.6"/><circle class="g" cx="67.0" cy="669.7" r="3.6"/><circle class="g" cx="597.6" cy="348.6" r="3.6"/><circle class="g" cx="498.2" cy="412.9" r="3.6"/><circle class="g" cx="657.2" cy="472.6" r="3.6"/><circle class="g" cx="505.5" cy="372.3" r="3.6"/><circle class="g" cx="200.6" cy="268.1" r="3.6"/><circle class="r" cx="677.4" cy="234.6" r="3.6"/><circle class="r" cx="567.2" cy="407.3" r="3.6"/><circle class="r" cx="629.2" cy="202.8" r="3.6"/><circle class="r" cx="557.9" cy="416.7" r="3.6"/><circle class="r" cx="180.3" cy="381.7" r="3.6"/><circle class="p" cx="390.3" cy="281.9" r="3.6"/><circle class="g" cx="594.1" cy="349.1" r="3.6"/><circle class="g" cx="90.6" cy="679.8" r="3.6"/><circle class="r" cx="523.4" cy="421.0" r="3.6"/><circle class="g" cx="558.1" cy="453.6" r="3.6"/><circle class="g" cx="638.2" cy="475.0" r="3.6"/><circle class="r" cx="499.8" cy="281.6" r="3.6"/><circle class="r" cx="149.8" cy="283.9" r="3.6"/><circle class="g" cx="645.1" cy="440.0" r="3.6"/><circle class="r" cx="597.2" cy="482.1" r="3.6"/><circle class="r" cx="621.6" cy="470.7" r="3.6"/><circle class="p" cx="394.3" cy="382.4" r="3.6"/><circle class="g" cx="555.4" cy="368.9" r="3.6"/><circle class="r" cx="677.8" cy="212.0" r="3.6"/><circle class="r" cx="625.4" cy="200.3" r="3.6"/><circle class="r" cx="234.3" cy="376.8" r="3.6"/><circle class="r" cx="603.9" cy="467.3" r="3.6"/><circle class="p" cx="214.7" cy="397.9" r="3.6"/><circle class="p" cx="270.2" cy="294.4" r="3.6"/><circle class="p" cx="377.9" cy="286.2" r="3.6"/><circle class="g" cx="487.5" cy="331.2" r="3.6"/><circle class="p" cx="304.1" cy="285.9" r="3.6"/><circle class="r" cx="128.0" cy="652.5" r="3.6"/><circle class="g" cx="512.1" cy="447.3" r="3.6"/><circle class="g" cx="541.4" cy="272.5" r="3.6"/><circle class="g" cx="526.3" cy="374.1" r="3.6"/><circle class="r" cx="734.5" cy="185.1" r="3.6"/><circle class="r" cx="490.0" cy="238.6" r="3.6"/><circle class="g" cx="604.7" cy="381.4" r="3.6"/><circle class="g" cx="56.0" cy="658.0" r="3.6"/><circle class="r" cx="112.2" cy="281.5" r="3.6"/><circle class="r" cx="651.7" cy="188.7" r="3.6"/><circle class="r" cx="78.0" cy="333.9" r="3.6"/><circle class="p" cx="398.3" cy="386.2" r="3.6"/><circle class="g" cx="476.9" cy="323.5" r="3.6"/><circle class="g" cx="460.6" cy="226.6" r="3.6"/><circle class="r" cx="652.8" cy="177.3" r="3.6"/><circle class="r" cx="93.8" cy="328.8" r="3.6"/><circle class="p" cx="303.5" cy="448.4" r="3.6"/><circle class="g" cx="516.1" cy="437.7" r="3.6"/><circle class="r" cx="712.3" cy="194.5" r="3.6"/><circle class="g" cx="200.6" cy="278.0" r="3.6"/><circle class="r" cx="535.5" cy="267.8" r="3.6"/><circle class="g" cx="539.9" cy="479.0" r="3.6"/><circle class="g" cx="525.0" cy="469.9" r="3.6"/><circle class="g" cx="375.1" cy="636.5" r="3.6"/><circle class="r" cx="734.0" cy="209.6" r="3.6"/><circle class="p" cx="232.8" cy="412.9" r="3.6"/><circle class="p" cx="269.4" cy="434.0" r="3.6"/><circle class="p" cx="210.1" cy="429.2" r="3.6"/><circle class="r" cx="635.7" cy="208.6" r="3.6"/><circle class="p" cx="439.2" cy="384.5" r="3.6"/><circle class="p" cx="410.2" cy="389.7" r="3.6"/><circle class="g" cx="580.8" cy="243.4" r="3.6"/><circle class="g" cx="638.8" cy="452.0" r="3.6"/><circle class="g" cx="186.3" cy="276.0" r="3.6"/><circle class="g" cx="612.8" cy="246.3" r="3.6"/><circle class="p" cx="266.6" cy="314.1" r="3.6"/><circle class="r" cx="213.7" cy="364.7" r="3.6"/><circle class="p" cx="388.4" cy="288.0" r="3.6"/><circle class="g" cx="467.3" cy="292.7" r="3.6"/><circle class="g" cx="586.5" cy="417.3" r="3.6"/><circle class="g" cx="640.9" cy="434.4" r="3.6"/><circle class="r" cx="485.7" cy="271.1" r="3.6"/><circle class="p" cx="298.2" cy="287.5" r="3.6"/><circle class="g" cx="617.9" cy="399.8" r="3.6"/><circle class="g" cx="595.8" cy="418.5" r="3.6"/><circle class="r" cx="83.9" cy="327.6" r="3.6"/><circle class="p" cx="194.8" cy="420.6" r="3.6"/><circle class="r" cx="486.9" cy="252.0" r="3.6"/><circle class="g" cx="530.3" cy="482.9" r="3.6"/><circle class="p" cx="234.2" cy="439.5" r="3.6"/><circle class="r" cx="200.3" cy="374.4" r="3.6"/><circle class="g" cx="531.6" cy="435.8" r="3.6"/><circle class="g" cx="605.5" cy="232.6" r="3.6"/><circle class="p" cx="236.3" cy="410.9" r="3.6"/><circle class="g" cx="620.3" cy="524.4" r="3.6"/><circle class="r" cx="496.2" cy="245.6" r="3.6"/><circle class="g" cx="605.4" cy="209.0" r="3.6"/><circle class="r" cx="562.0" cy="406.7" r="3.6"/><circle class="g" cx="541.5" cy="282.5" r="3.6"/><circle class="g" cx="595.5" cy="391.4" r="3.6"/><circle class="p" cx="276.4" cy="440.1" r="3.6"/><circle class="r" cx="78.0" cy="657.0" r="3.6"/><circle class="g" cx="198.1" cy="335.4" r="3.6"/><circle class="r" cx="659.2" cy="199.4" r="3.6"/><circle class="r" cx="791.0" cy="146.0" r="3.6"/><circle class="p" cx="348.9" cy="286.0" r="3.6"/><circle class="r" cx="741.7" cy="216.8" r="3.6"/><circle class="r" cx="470.5" cy="276.1" r="3.6"/><circle class="g" cx="446.2" cy="287.3" r="3.6"/><circle class="p" cx="211.4" cy="449.3" r="3.6"/><circle class="r" cx="502.3" cy="285.3" r="3.6"/><circle class="p" cx="248.8" cy="448.2" r="3.6"/><circle class="p" cx="422.4" cy="388.0" r="3.6"/><circle class="r" cx="84.4" cy="337.3" r="3.6"/><circle class="r" cx="188.9" cy="375.7" r="3.6"/><circle class="g" cx="586.3" cy="420.8" r="3.6"/><circle class="r" cx="555.6" cy="442.3" r="3.6"/><circle class="g" cx="171.6" cy="330.9" r="3.6"/><circle class="g" cx="118.8" cy="670.5" r="3.6"/><circle class="g" cx="666.0" cy="443.4" r="3.6"/><circle class="g" cx="532.6" cy="367.8" r="3.6"/><circle class="g" cx="759.0" cy="212.4" r="3.6"/><circle class="r" cx="534.8" cy="311.0" r="3.6"/><circle class="r" cx="651.6" cy="197.5" r="3.6"/><circle class="r" cx="225.7" cy="359.0" r="3.6"/><circle class="g" cx="501.5" cy="418.0" r="3.6"/><circle class="g" cx="666.1" cy="471.4" r="3.6"/><circle class="g" cx="560.7" cy="490.6" r="3.6"/><circle class="r" cx="152.3" cy="658.0" r="3.6"/><circle class="r" cx="561.7" cy="436.2" r="3.6"/><circle class="p" cx="271.5" cy="455.3" r="3.6"/><circle class="g" cx="508.8" cy="417.1" r="3.6"/><circle class="g" cx="592.4" cy="370.9" r="3.6"/><circle class="p" cx="202.6" cy="444.2" r="3.6"/><circle class="g" cx="746.2" cy="177.3" r="3.6"/><circle class="p" cx="283.0" cy="437.0" r="3.6"/><circle class="g" cx="223.9" cy="293.1" r="3.6"/><circle class="p" cx="280.1" cy="319.7" r="3.6"/><circle class="p" cx="274.4" cy="301.5" r="3.6"/><circle class="g" cx="593.1" cy="205.2" r="3.6"/><circle class="g" cx="605.1" cy="421.0" r="3.6"/><circle class="r" cx="793.0" cy="141.0" r="3.6"/><circle class="g" cx="161.5" cy="346.6" r="3.6"/><circle class="r" cx="671.1" cy="191.4" r="3.6"/><circle class="g" cx="498.5" cy="410.4" r="3.6"/><circle class="p" cx="283.5" cy="325.9" r="3.6"/><circle class="r" cx="745.5" cy="207.7" r="3.6"/><circle class="g" cx="598.1" cy="251.8" r="3.6"/><circle class="p" cx="281.4" cy="311.4" r="3.6"/><circle class="r" cx="747.4" cy="185.8" r="3.6"/><circle class="g" cx="694.6" cy="218.4" r="3.6"/><circle class="g" cx="448.5" cy="223.5" r="3.6"/><circle class="g" cx="607.5" cy="405.7" r="3.6"/><circle class="r" cx="238.7" cy="361.5" r="3.6"/><circle class="r" cx="623.8" cy="190.8" r="3.6"/><circle class="r" cx="657.7" cy="190.4" r="3.6"/><circle class="r" cx="497.1" cy="254.2" r="3.6"/><circle class="r" cx="648.2" cy="215.1" r="3.6"/><circle class="r" cx="511.7" cy="394.2" r="3.6"/><circle class="g" cx="630.7" cy="462.3" r="3.6"/><circle class="g" cx="706.7" cy="248.9" r="3.6"/><circle class="p" cx="277.5" cy="454.1" r="3.6"/><circle class="r" cx="593.4" cy="442.4" r="3.6"/><circle class="r" cx="536.9" cy="324.4" r="3.6"/><circle class="g" cx="217.4" cy="312.2" r="3.6"/><circle class="r" cx="642.0" cy="227.5" r="3.6"/><circle class="g" cx="626.7" cy="510.4" r="3.6"/><circle class="p" cx="409.4" cy="670.4" r="3.6"/><circle class="g" cx="451.5" cy="287.3" r="3.6"/><circle class="g" cx="453.7" cy="234.8" r="3.6"/><circle class="r" cx="540.5" cy="317.5" r="3.6"/><circle class="p" cx="275.1" cy="406.4" r="3.6"/><circle class="r" cx="774.0" cy="150.6" r="3.6"/><circle class="p" cx="256.4" cy="424.6" r="3.6"/><circle class="p" cx="405.6" cy="307.2" r="3.6"/><circle class="r" cx="802.0" cy="144.0" r="3.6"/><circle class="g" cx="509.0" cy="377.4" r="3.6"/><circle class="g" cx="705.1" cy="244.3" r="3.6"/><circle class="p" cx="424.0" cy="391.9" r="3.6"/><circle class="r" cx="520.3" cy="427.5" r="3.6"/><circle class="g" cx="702.7" cy="246.8" r="3.6"/><circle class="r" cx="566.0" cy="411.7" r="3.6"/><circle class="g" cx="492.6" cy="489.1" r="3.6"/><circle class="g" cx="87.5" cy="664.0" r="3.6"/><circle class="g" cx="591.0" cy="385.5" r="3.6"/><circle class="g" cx="605.1" cy="404.7" r="3.6"/><circle class="g" cx="701.2" cy="255.5" r="3.6"/><circle class="g" cx="604.7" cy="426.0" r="3.6"/><circle class="g" cx="465.8" cy="285.3" r="3.6"/><circle class="p" cx="300.3" cy="346.8" r="3.6"/><circle class="g" cx="17.3" cy="357.1" r="3.6"/><circle class="r" cx="551.2" cy="388.7" r="3.6"/><circle class="g" cx="521.6" cy="379.7" r="3.6"/><circle class="g" cx="268.5" cy="315.9" r="3.6"/><circle class="r" cx="538.8" cy="389.8" r="3.6"/><circle class="r" cx="480.9" cy="270.8" r="3.6"/><circle class="g" cx="612.8" cy="428.9" r="3.6"/><circle class="r" cx="619.6" cy="461.7" r="3.6"/><circle class="g" cx="589.5" cy="396.0" r="3.6"/><circle class="r" cx="472.1" cy="396.4" r="3.6"/><circle class="p" cx="247.8" cy="414.5" r="3.6"/><circle class="g" cx="636.0" cy="425.0" r="3.6"/><circle class="r" cx="196.4" cy="379.4" r="3.6"/><circle class="r" cx="521.2" cy="298.0" r="3.6"/><circle class="r" cx="733.4" cy="194.0" r="3.6"/><circle class="r" cx="530.8" cy="299.5" r="3.6"/><circle class="r" cx="669.1" cy="177.4" r="3.6"/><circle class="r" cx="101.9" cy="312.2" r="3.6"/><circle class="g" cx="103.0" cy="661.0" r="3.6"/><circle class="g" cx="639.5" cy="518.5" r="3.6"/><circle class="g" cx="601.6" cy="354.1" r="3.6"/><circle class="p" cx="236.8" cy="383.6" r="3.6"/><circle class="r" cx="518.2" cy="413.4" r="3.6"/><circle class="r" cx="657.4" cy="216.5" r="3.6"/><circle class="g" cx="547.4" cy="254.1" r="3.6"/><circle class="g" cx="501.5" cy="342.3" r="3.6"/><circle class="r" cx="84.4" cy="649.4" r="3.6"/><circle class="g" cx="541.8" cy="243.3" r="3.6"/><circle class="p" cx="239.1" cy="414.7" r="3.6"/><circle class="g" cx="622.0" cy="235.7" r="3.6"/><circle class="g" cx="716.2" cy="185.6" r="3.6"/><circle class="g" cx="227.6" cy="631.1" r="3.6"/><circle class="g" cx="439.8" cy="215.6" r="3.6"/><circle class="r" cx="636.4" cy="221.8" r="3.6"/><circle class="g" cx="669.5" cy="460.0" r="3.6"/><circle class="p" cx="262.4" cy="445.7" r="3.6"/><circle class="p" cx="366.8" cy="289.8" r="3.6"/><circle class="g" cx="582.9" cy="391.6" r="3.6"/><circle class="r" cx="548.6" cy="426.7" r="3.6"/><circle class="g" cx="493.2" cy="382.4" r="3.6"/><circle class="r" cx="737.3" cy="197.6" r="3.6"/><circle class="g" cx="624.9" cy="408.9" r="3.6"/><circle class="g" cx="506.9" cy="436.0" r="3.6"/><circle class="p" cx="217.2" cy="398.9" r="3.6"/><circle class="g" cx="775.6" cy="172.1" r="3.6"/><circle class="g" cx="96.0" cy="661.0" r="3.6"/><circle class="r" cx="568.6" cy="441.7" r="3.6"/><circle class="g" cx="477.7" cy="366.4" r="3.6"/><circle class="g" cx="549.0" cy="375.1" r="3.6"/><circle class="r" cx="485.6" cy="280.4" r="3.6"/><circle class="r" cx="480.2" cy="395.8" r="3.6"/><circle class="g" cx="215.2" cy="616.6" r="3.6"/><circle class="g" cx="590.3" cy="347.9" r="3.6"/><circle class="r" cx="485.4" cy="234.8" r="3.6"/><circle class="g" cx="488.7" cy="402.0" r="3.6"/><circle class="g" cx="881.0" cy="222.5" r="3.6"/><circle class="g" cx="728.1" cy="217.3" r="3.6"/><circle class="g" cx="537.9" cy="344.8" r="3.6"/><circle class="p" cx="247.4" cy="423.5" r="3.6"/><circle class="g" cx="511.3" cy="486.6" r="3.6"/><circle class="r" cx="600.4" cy="473.8" r="3.6"/><circle class="g" cx="584.6" cy="402.7" r="3.6"/><circle class="r" cx="644.1" cy="207.2" r="3.6"/><circle class="r" cx="556.5" cy="413.8" r="3.6"/><circle class="g" cx="501.3" cy="371.7" r="3.6"/><circle class="r" cx="565.5" cy="420.8" r="3.6"/><circle class="r" cx="67.5" cy="325.3" r="3.6"/><circle class="p" cx="398.3" cy="309.9" r="3.6"/><circle class="r" cx="668.9" cy="186.1" r="3.6"/><circle class="r" cx="706.2" cy="201.3" r="3.6"/><circle class="g" cx="488.8" cy="368.1" r="3.6"/><circle class="r" cx="632.6" cy="189.3" r="3.6"/><circle class="p" cx="445.8" cy="664.9" r="3.6"/><circle class="r" cx="790.5" cy="138.0" r="3.6"/><circle class="r" cx="147.7" cy="683.8" r="3.6"/><circle class="g" cx="238.1" cy="338.0" r="3.6"/><circle class="r" cx="534.9" cy="292.7" r="3.6"/><circle class="r" cx="26.5" cy="334.0" r="3.6"/><circle class="g" cx="703.1" cy="250.6" r="3.6"/><circle class="r" cx="671.6" cy="198.9" r="3.6"/><circle class="p" cx="278.5" cy="325.2" r="3.6"/><circle class="r" cx="553.7" cy="390.9" r="3.6"/><circle class="r" cx="203.2" cy="381.6" r="3.6"/><circle class="p" cx="198.5" cy="433.0" r="3.6"/><circle class="r" cx="578.9" cy="486.2" r="3.6"/><circle class="g" cx="228.3" cy="617.4" r="3.6"/><circle class="p" cx="253.8" cy="379.4" r="3.6"/><circle class="p" cx="228.4" cy="437.8" r="3.6"/><circle class="r" cx="492.5" cy="322.6" r="3.6"/><circle class="r" cx="621.2" cy="468.4" r="3.6"/><circle class="p" cx="256.9" cy="446.7" r="3.6"/><circle class="r" cx="511.9" cy="293.8" r="3.6"/><circle class="p" cx="274.1" cy="295.9" r="3.6"/><circle class="r" cx="223.8" cy="363.4" r="3.6"/><circle class="g" cx="504.1" cy="488.5" r="3.6"/><circle class="g" cx="589.7" cy="424.2" r="3.6"/><circle class="r" cx="528.0" cy="388.0" r="3.6"/><circle class="g" cx="548.0" cy="451.4" r="3.6"/><circle class="g" cx="619.3" cy="413.7" r="3.6"/><circle class="p" cx="247.5" cy="411.0" r="3.6"/><circle class="r" cx="697.5" cy="180.5" r="3.6"/><circle class="p" cx="442.3" cy="658.2" r="3.6"/><circle class="p" cx="401.3" cy="395.1" r="3.6"/><circle class="g" cx="480.7" cy="321.0" r="3.6"/><circle class="r" cx="658.7" cy="211.7" r="3.6"/><circle class="g" cx="575.9" cy="402.9" r="3.6"/><circle class="r" cx="664.5" cy="220.6" r="3.6"/><circle class="r" cx="546.5" cy="407.4" r="3.6"/><circle class="r" cx="671.2" cy="203.0" r="3.6"/><circle class="p" cx="257.2" cy="415.1" r="3.6"/><circle class="r" cx="89.4" cy="321.9" r="3.6"/><circle class="r" cx="477.7" cy="284.4" r="3.6"/><circle class="g" cx="497.9" cy="406.7" r="3.6"/><circle class="r" cx="469.0" cy="390.9" r="3.6"/><circle class="p" cx="402.9" cy="301.6" r="3.6"/><circle class="g" cx="90.6" cy="645.5" r="3.6"/><circle class="g" cx="253.3" cy="639.9" r="3.6"/><circle class="p" cx="392.7" cy="294.1" r="3.6"/><circle class="r" cx="529.4" cy="386.4" r="3.6"/><circle class="r" cx="676.9" cy="223.3" r="3.6"/><circle class="g" cx="280.0" cy="363.5" r="3.6"/><circle class="r" cx="199.9" cy="384.1" r="3.6"/><circle class="r" cx="490.2" cy="246.4" r="3.6"/><circle class="p" cx="439.9" cy="661.1" r="3.6"/><circle class="r" cx="484.5" cy="288.0" r="3.6"/><circle class="p" cx="241.1" cy="441.5" r="3.6"/><circle class="p" cx="385.5" cy="287.7" r="3.6"/><circle class="g" cx="603.9" cy="417.0" r="3.6"/><circle class="r" cx="674.6" cy="180.5" r="3.6"/><circle class="r" cx="658.4" cy="229.2" r="3.6"/><circle class="r" cx="593.5" cy="469.4" r="3.6"/><circle class="g" cx="166.6" cy="351.1" r="3.6"/><circle class="g" cx="601.0" cy="240.0" r="3.6"/><circle class="p" cx="305.3" cy="291.0" r="3.6"/><circle class="p" cx="274.0" cy="421.2" r="3.6"/><circle class="p" cx="191.8" cy="421.3" r="3.6"/><circle class="g" cx="503.0" cy="406.5" r="3.6"/><circle class="p" cx="304.0" cy="448.0" r="3.6"/><circle class="r" cx="513.8" cy="396.5" r="3.6"/><circle class="g" cx="123.0" cy="667.0" r="3.6"/><circle class="g" cx="610.0" cy="346.0" r="3.6"/><circle class="g" cx="587.6" cy="346.1" r="3.6"/><circle class="r" cx="608.9" cy="453.1" r="3.6"/><circle class="r" cx="193.9" cy="379.7" r="3.6"/><circle class="g" cx="474.7" cy="289.5" r="3.6"/><circle class="g" cx="536.5" cy="367.9" r="3.6"/><circle class="g" cx="621.5" cy="228.5" r="3.6"/><circle class="p" cx="233.8" cy="436.2" r="3.6"/><circle class="r" cx="706.2" cy="193.0" r="3.6"/><circle class="p" cx="263.4" cy="420.6" r="3.6"/><circle class="p" cx="253.6" cy="361.2" r="3.6"/><circle class="p" cx="265.6" cy="358.9" r="3.6"/><circle class="g" cx="626.6" cy="414.4" r="3.6"/><circle class="g" cx="650.2" cy="268.9" r="3.6"/><circle class="r" cx="486.1" cy="254.7" r="3.6"/><circle class="r" cx="661.7" cy="216.7" r="3.6"/><circle class="r" cx="616.3" cy="484.0" r="3.6"/><circle class="p" cx="248.8" cy="455.2" r="3.6"/><circle class="r" cx="526.8" cy="329.1" r="3.6"/><circle class="r" cx="602.6" cy="480.2" r="3.6"/><circle class="r" cx="658.8" cy="225.5" r="3.6"/><circle class="g" cx="520.1" cy="368.3" r="3.6"/><circle class="g" cx="225.5" cy="657.8" r="3.6"/><circle class="g" cx="594.9" cy="353.2" r="3.6"/><circle class="g" cx="227.0" cy="635.7" r="3.6"/><circle class="g" cx="619.8" cy="434.1" r="3.6"/><circle class="r" cx="540.6" cy="409.9" r="3.6"/><circle class="r" cx="186.4" cy="386.2" r="3.6"/><circle class="r" cx="644.5" cy="221.3" r="3.6"/><circle class="r" cx="682.3" cy="195.3" r="3.6"/><circle class="g" cx="216.2" cy="282.2" r="3.6"/><circle class="r" cx="529.7" cy="398.1" r="3.6"/><circle class="g" cx="565.2" cy="453.9" r="3.6"/><circle class="r" cx="666.5" cy="186.7" r="3.6"/><circle class="g" cx="308.0" cy="546.5" r="3.6"/><circle class="p" cx="387.1" cy="331.3" r="3.6"/><circle class="p" cx="251.2" cy="396.3" r="3.6"/><circle class="r" cx="601.5" cy="466.3" r="3.6"/><circle class="p" cx="380.3" cy="332.3" r="3.6"/><circle class="g" cx="605.9" cy="217.2" r="3.6"/><circle class="p" cx="285.0" cy="321.8" r="3.6"/><circle class="g" cx="500.9" cy="477.4" r="3.6"/><circle class="g" cx="325.5" cy="532.0" r="3.6"/><circle class="g" cx="722.0" cy="228.6" r="3.6"/><circle class="r" cx="535.3" cy="410.7" r="3.6"/><circle class="g" cx="502.4" cy="413.7" r="3.6"/><circle class="r" cx="520.1" cy="309.4" r="3.6"/><circle class="g" cx="488.3" cy="436.8" r="3.6"/><circle class="r" cx="87.4" cy="329.5" r="3.6"/><circle class="g" cx="529.3" cy="490.2" r="3.6"/><circle class="r" cx="508.2" cy="264.6" r="3.6"/><circle class="g" cx="705.6" cy="220.6" r="3.6"/><circle class="r" cx="59.8" cy="327.5" r="3.6"/><circle class="p" cx="236.9" cy="441.8" r="3.6"/><circle class="g" cx="553.2" cy="459.2" r="3.6"/><circle class="r" cx="622.1" cy="453.2" r="3.6"/><circle class="p" cx="269.9" cy="428.0" r="3.6"/><circle class="p" cx="423.6" cy="383.0" r="3.6"/><circle class="g" cx="529.9" cy="368.4" r="3.6"/><circle class="g" cx="85.9" cy="363.4" r="3.6"/><circle class="p" cx="379.1" cy="340.0" r="3.6"/><circle class="g" cx="513.6" cy="345.1" r="3.6"/><circle class="r" cx="651.5" cy="206.2" r="3.6"/><circle class="r" cx="751.1" cy="194.4" r="3.6"/><circle class="g" cx="619.4" cy="410.7" r="3.6"/><circle class="g" cx="521.6" cy="345.2" r="3.6"/><circle class="r" cx="518.2" cy="318.0" r="3.6"/><circle class="r" cx="497.9" cy="312.2" r="3.6"/><circle class="g" cx="587.7" cy="230.8" r="3.6"/><circle class="g" cx="717.9" cy="212.3" r="3.6"/><circle class="r" cx="77.0" cy="325.9" r="3.6"/><circle class="r" cx="496.1" cy="304.0" r="3.6"/><circle class="g" cx="591.4" cy="415.7" r="3.6"/><circle class="r" cx="586.6" cy="443.1" r="3.6"/><circle class="g" cx="459.4" cy="297.0" r="3.6"/><circle class="r" cx="522.1" cy="326.8" r="3.6"/><circle class="r" cx="585.2" cy="475.6" r="3.6"/><circle class="g" cx="554.9" cy="373.8" r="3.6"/><circle class="g" cx="579.0" cy="201.1" r="3.6"/><circle class="r" cx="493.7" cy="230.8" r="3.6"/><circle class="g" cx="66.2" cy="342.5" r="3.6"/><circle class="g" cx="565.9" cy="449.2" r="3.6"/><circle class="g" cx="617.4" cy="227.2" r="3.6"/><circle class="g" cx="690.8" cy="227.3" r="3.6"/><circle class="r" cx="603.9" cy="475.3" r="3.6"/><circle class="r" cx="524.8" cy="279.9" r="3.6"/><circle class="g" cx="701.2" cy="239.9" r="3.6"/><circle class="g" cx="620.8" cy="425.1" r="3.6"/><circle class="r" cx="533.6" cy="423.1" r="3.6"/><circle class="g" cx="600.3" cy="226.2" r="3.6"/><circle class="g" cx="597.0" cy="528.9" r="3.6"/><circle class="p" cx="202.3" cy="416.1" r="3.6"/><circle class="g" cx="610.1" cy="222.4" r="3.6"/><circle class="g" cx="606.6" cy="240.6" r="3.6"/><circle class="r" cx="39.1" cy="343.6" r="3.6"/><circle class="g" cx="613.0" cy="346.0" r="3.6"/><circle class="p" cx="387.8" cy="328.0" r="3.6"/><circle class="r" cx="678.9" cy="216.1" r="3.6"/><circle class="r" cx="193.7" cy="366.6" r="3.6"/><circle class="p" cx="437.1" cy="653.5" r="3.6"/><circle class="g" cx="541.1" cy="239.7" r="3.6"/><circle class="r" cx="523.2" cy="313.3" r="3.6"/><circle class="r" cx="212.2" cy="385.0" r="3.6"/><circle class="p" cx="408.9" cy="676.1" r="3.6"/><circle class="r" cx="497.0" cy="238.4" r="3.6"/><circle class="g" cx="556.5" cy="212.4" r="3.6"/><circle class="p" cx="289.1" cy="291.9" r="3.6"/><circle class="r" cx="591.4" cy="485.2" r="3.6"/><circle class="g" cx="485.5" cy="365.9" r="3.6"/><circle class="r" cx="73.5" cy="289.5" r="3.6"/><circle class="g" cx="204.4" cy="270.4" r="3.6"/><circle class="g" cx="159.0" cy="353.7" r="3.6"/><circle class="p" cx="366.9" cy="294.1" r="3.6"/><circle class="g" cx="592.7" cy="347.3" r="3.6"/><circle class="r" cx="474.8" cy="282.1" r="3.6"/><circle class="p" cx="358.2" cy="295.8" r="3.6"/><circle class="g" cx="541.6" cy="334.9" r="3.6"/><circle class="p" cx="373.4" cy="391.4" r="3.6"/><circle class="g" cx="518.0" cy="375.5" r="3.6"/><circle class="g" cx="536.3" cy="278.6" r="3.6"/><circle class="g" cx="652.0" cy="436.9" r="3.6"/><circle class="g" cx="239.4" cy="342.1" r="3.6"/><circle class="r" cx="696.9" cy="213.9" r="3.6"/><circle class="r" cx="517.2" cy="314.0" r="3.6"/><circle class="g" cx="689.0" cy="234.8" r="3.6"/><circle class="p" cx="245.5" cy="370.9" r="3.6"/><circle class="r" cx="487.8" cy="273.3" r="3.6"/><circle class="g" cx="496.9" cy="473.5" r="3.6"/><circle class="g" cx="238.3" cy="327.4" r="3.6"/><circle class="r" cx="195.6" cy="363.2" r="3.6"/><circle class="g" cx="593.6" cy="210.5" r="3.6"/><circle class="p" cx="440.0" cy="384.2" r="3.6"/><circle class="g" cx="442.7" cy="220.6" r="3.6"/><circle class="r" cx="729.3" cy="208.4" r="3.6"/><circle class="r" cx="788.0" cy="151.8" r="3.6"/><circle class="g" cx="239.2" cy="662.3" r="3.6"/><circle class="g" cx="538.4" cy="331.3" r="3.6"/><circle class="g" cx="638.9" cy="258.3" r="3.6"/><circle class="g" cx="697.8" cy="238.4" r="3.6"/><circle class="p" cx="273.5" cy="316.3" r="3.6"/><circle class="p" cx="402.0" cy="389.6" r="3.6"/><circle class="g" cx="469.9" cy="363.8" r="3.6"/><circle class="r" cx="223.5" cy="380.4" r="3.6"/><circle class="r" cx="522.3" cy="304.1" r="3.6"/><circle class="g" cx="471.3" cy="308.6" r="3.6"/><circle class="g" cx="501.3" cy="393.5" r="3.6"/><circle class="g" cx="888.0" cy="227.0" r="3.6"/><circle class="r" cx="485.8" cy="277.0" r="3.6"/><circle class="g" cx="504.6" cy="380.7" r="3.6"/><circle class="p" cx="237.1" cy="431.9" r="3.6"/><circle class="r" cx="799.0" cy="149.0" r="3.6"/><circle class="r" cx="636.9" cy="183.6" r="3.6"/><circle class="p" cx="389.6" cy="321.1" r="3.6"/><circle class="p" cx="243.4" cy="362.2" r="3.6"/><circle class="g" cx="330.7" cy="570.0" r="3.6"/><circle class="g" cx="548.5" cy="454.8" r="3.6"/><circle class="p" cx="431.8" cy="662.3" r="3.6"/><circle class="g" cx="540.4" cy="502.7" r="3.6"/><circle class="p" cx="257.1" cy="413.9" r="3.6"/><circle class="r" cx="671.4" cy="222.4" r="3.6"/><circle class="r" cx="222.8" cy="374.9" r="3.6"/><circle class="p" cx="402.6" cy="322.9" r="3.6"/><circle class="p" cx="369.8" cy="293.3" r="3.6"/><circle class="g" cx="630.8" cy="470.6" r="3.6"/><circle class="r" cx="595.7" cy="457.8" r="3.6"/><circle class="g" cx="581.6" cy="343.8" r="3.6"/><circle class="r" cx="112.5" cy="642.3" r="3.6"/><circle class="g" cx="496.7" cy="343.6" r="3.6"/><circle class="g" cx="597.8" cy="392.9" r="3.6"/><circle class="g" cx="581.7" cy="458.7" r="3.6"/><circle class="g" cx="196.3" cy="268.3" r="3.6"/><circle class="g" cx="209.9" cy="313.9" r="3.6"/><circle class="r" cx="496.9" cy="324.7" r="3.6"/><circle class="r" cx="662.8" cy="209.0" r="3.6"/><circle class="r" cx="648.6" cy="183.9" r="3.6"/><circle class="g" cx="546.0" cy="379.2" r="3.6"/><circle class="g" cx="544.1" cy="250.8" r="3.6"/><circle class="r" cx="509.0" cy="309.6" r="3.6"/><circle class="p" cx="210.4" cy="438.5" r="3.6"/><circle class="g" cx="546.1" cy="490.9" r="3.6"/><circle class="r" cx="180.4" cy="275.4" r="3.6"/><circle class="p" cx="285.0" cy="319.0" r="3.6"/><circle class="g" cx="481.0" cy="302.1" r="3.6"/><circle class="p" cx="251.2" cy="398.6" r="3.6"/><circle class="r" cx="511.8" cy="282.3" r="3.6"/><circle class="r" cx="234.6" cy="362.6" r="3.6"/><circle class="g" cx="504.2" cy="468.0" r="3.6"/><circle class="p" cx="255.1" cy="395.2" r="3.6"/><circle class="g" cx="541.9" cy="343.7" r="3.6"/><circle class="r" cx="628.3" cy="189.3" r="3.6"/><circle class="g" cx="706.6" cy="178.5" r="3.6"/><circle class="r" cx="233.9" cy="369.2" r="3.6"/><circle class="r" cx="642.2" cy="222.8" r="3.6"/><circle class="g" cx="484.1" cy="368.5" r="3.6"/><circle class="p" cx="246.0" cy="359.4" r="3.6"/><circle class="r" cx="692.7" cy="209.1" r="3.6"/><circle class="p" cx="259.4" cy="436.5" r="3.6"/><circle class="p" cx="192.4" cy="428.3" r="3.6"/><circle class="g" cx="573.4" cy="226.9" r="3.6"/><circle class="g" cx="696.5" cy="233.5" r="3.6"/><circle class="r" cx="667.5" cy="204.7" r="3.6"/><circle class="g" cx="584.8" cy="381.1" r="3.6"/><circle class="r" cx="515.5" cy="286.5" r="3.6"/><circle class="g" cx="638.4" cy="513.2" r="3.6"/><circle class="p" cx="284.1" cy="439.2" r="3.6"/><circle class="g" cx="512.1" cy="513.7" r="3.6"/><circle class="g" cx="248.6" cy="333.9" r="3.6"/><circle class="r" cx="135.0" cy="629.0" r="3.6"/><circle class="r" cx="232.7" cy="357.2" r="3.6"/><circle class="r" cx="628.2" cy="217.0" r="3.6"/><circle class="r" cx="639.0" cy="206.5" r="3.6"/><circle class="g" cx="238.5" cy="629.7" r="3.6"/><circle class="p" cx="255.5" cy="365.8" r="3.6"/><circle class="g" cx="572.8" cy="346.1" r="3.6"/><circle class="r" cx="622.3" cy="193.0" r="3.6"/><circle class="g" cx="592.1" cy="420.2" r="3.6"/><circle class="g" cx="634.9" cy="434.3" r="3.6"/><circle class="g" cx="569.9" cy="212.1" r="3.6"/><circle class="p" cx="232.2" cy="445.6" r="3.6"/><circle class="g" cx="310.0" cy="539.0" r="3.6"/><circle class="p" cx="435.5" cy="664.0" r="3.6"/><circle class="r" cx="518.7" cy="278.0" r="3.6"/><circle class="p" cx="376.7" cy="391.9" r="3.6"/><circle class="g" cx="331.0" cy="538.0" r="3.6"/><circle class="r" cx="104.7" cy="654.8" r="3.6"/><circle class="p" cx="242.7" cy="425.3" r="3.6"/><circle class="g" cx="93.7" cy="629.8" r="3.6"/><circle class="r" cx="563.8" cy="411.4" r="3.6"/><circle class="g" cx="583.6" cy="418.5" r="3.6"/><circle class="g" cx="469.3" cy="287.9" r="3.6"/><circle class="g" cx="657.9" cy="458.9" r="3.6"/><circle class="p" cx="403.0" cy="304.7" r="3.6"/><circle class="p" cx="278.9" cy="450.0" r="3.6"/><circle class="g" cx="615.9" cy="230.6" r="3.6"/><circle class="r" cx="635.4" cy="187.5" r="3.6"/><circle class="g" cx="523.4" cy="438.4" r="3.6"/><circle class="g" cx="613.4" cy="225.1" r="3.6"/><circle class="g" cx="478.3" cy="482.3" r="3.6"/><circle class="r" cx="129.7" cy="656.4" r="3.6"/><circle class="r" cx="532.0" cy="285.6" r="3.6"/><circle class="g" cx="590.8" cy="354.0" r="3.6"/><circle class="g" cx="272.8" cy="652.9" r="3.6"/><circle class="g" cx="569.5" cy="448.0" r="3.6"/><circle class="p" cx="232.1" cy="441.9" r="3.6"/><circle class="p" cx="354.8" cy="286.7" r="3.6"/><circle class="r" cx="527.2" cy="301.8" r="3.6"/><circle class="r" cx="526.5" cy="315.2" r="3.6"/><circle class="g" cx="597.7" cy="421.7" r="3.6"/><circle class="g" cx="592.6" cy="343.5" r="3.6"/><circle class="g" cx="557.7" cy="448.3" r="3.6"/><circle class="g" cx="663.2" cy="477.8" r="3.6"/><circle class="p" cx="432.5" cy="679.9" r="3.6"/><circle class="r" cx="644.1" cy="201.8" r="3.6"/><circle class="g" cx="239.0" cy="300.9" r="3.6"/><circle class="r" cx="530.9" cy="296.7" r="3.6"/><circle class="g" cx="580.1" cy="390.5" r="3.6"/><circle class="r" cx="510.5" cy="288.0" r="3.6"/><circle class="p" cx="220.8" cy="440.1" r="3.6"/><circle class="g" cx="509.6" cy="497.0" r="3.6"/><circle class="p" cx="217.3" cy="433.1" r="3.6"/><circle class="r" cx="472.6" cy="252.7" r="3.6"/><circle class="r" cx="550.2" cy="420.0" r="3.6"/><circle class="g" cx="589.5" cy="237.3" r="3.6"/><circle class="p" cx="280.4" cy="328.0" r="3.6"/><circle class="r" cx="506.1" cy="279.2" r="3.6"/><circle class="r" cx="515.3" cy="280.4" r="3.6"/><circle class="g" cx="599.9" cy="217.5" r="3.6"/><circle class="g" cx="203.1" cy="328.9" r="3.6"/><circle class="g" cx="595.9" cy="393.8" r="3.6"/><circle class="g" cx="533.3" cy="233.4" r="3.6"/><circle class="g" cx="145.1" cy="332.2" r="3.6"/><circle class="g" cx="535.5" cy="274.2" r="3.6"/><circle class="g" cx="545.4" cy="237.0" r="3.6"/><circle class="g" cx="599.3" cy="396.8" r="3.6"/><circle class="p" cx="245.4" cy="439.5" r="3.6"/><circle class="r" cx="740.1" cy="197.4" r="3.6"/><circle class="r" cx="480.1" cy="287.0" r="3.6"/><circle class="r" cx="575.5" cy="490.7" r="3.6"/><circle class="r" cx="110.4" cy="284.9" r="3.6"/><circle class="g" cx="517.5" cy="433.1" r="3.6"/><circle class="r" cx="114.8" cy="658.8" r="3.6"/><circle class="g" cx="469.4" cy="380.8" r="3.6"/><circle class="g" cx="541.0" cy="255.4" r="3.6"/><circle class="g" cx="594.0" cy="233.6" r="3.6"/><circle class="g" cx="568.3" cy="374.6" r="3.6"/><circle class="r" cx="642.7" cy="191.6" r="3.6"/><circle class="g" cx="603.4" cy="391.0" r="3.6"/><circle class="g" cx="105.5" cy="676.0" r="3.6"/><circle class="g" cx="612.9" cy="427.4" r="3.6"/><circle class="r" cx="624.7" cy="205.4" r="3.6"/><circle class="r" cx="632.0" cy="232.2" r="3.6"/><circle class="r" cx="93.3" cy="332.4" r="3.6"/><circle class="g" cx="587.6" cy="376.4" r="3.6"/><circle class="r" cx="497.5" cy="306.1" r="3.6"/><circle class="r" cx="598.8" cy="475.7" r="3.6"/><circle class="g" cx="239.9" cy="658.1" r="3.6"/><circle class="g" cx="200.8" cy="324.3" r="3.6"/><circle class="g" cx="649.4" cy="465.9" r="3.6"/><circle class="p" cx="248.0" cy="426.5" r="3.6"/><circle class="r" cx="210.3" cy="362.5" r="3.6"/><circle class="r" cx="529.5" cy="417.9" r="3.6"/><circle class="p" cx="239.3" cy="409.1" r="3.6"/><circle class="g" cx="709.6" cy="209.1" r="3.6"/><circle class="g" cx="550.5" cy="218.7" r="3.6"/><circle class="r" cx="650.0" cy="213.9" r="3.6"/><circle class="r" cx="183.7" cy="373.7" r="3.6"/><circle class="g" cx="383.8" cy="648.0" r="3.6"/><circle class="r" cx="607.0" cy="469.5" r="3.6"/><circle class="g" cx="512.7" cy="439.3" r="3.6"/><circle class="g" cx="506.7" cy="465.5" r="3.6"/><circle class="p" cx="268.0" cy="397.6" r="3.6"/><circle class="g" cx="92.0" cy="651.0" r="3.6"/><circle class="p" cx="260.0" cy="423.8" r="3.6"/><circle class="g" cx="201.9" cy="264.3" r="3.6"/><circle class="g" cx="575.4" cy="419.6" r="3.6"/><circle class="p" cx="263.2" cy="396.1" r="3.6"/><circle class="g" cx="535.2" cy="500.3" r="3.6"/><circle class="r" cx="685.2" cy="198.6" r="3.6"/><circle class="g" cx="707.7" cy="248.9" r="3.6"/><circle class="g" cx="495.5" cy="459.6" r="3.6"/><circle class="r" cx="740.1" cy="188.5" r="3.6"/><circle class="p" cx="402.7" cy="310.1" r="3.6"/><circle class="r" cx="517.8" cy="303.4" r="3.6"/><circle class="r" cx="597.1" cy="439.5" r="3.6"/><circle class="p" cx="247.2" cy="351.9" r="3.6"/><circle class="r" cx="617.9" cy="473.1" r="3.6"/><circle class="r" cx="738.3" cy="203.9" r="3.6"/><circle class="p" cx="268.6" cy="445.5" r="3.6"/><circle class="p" cx="384.9" cy="333.3" r="3.6"/><circle class="p" cx="373.7" cy="382.8" r="3.6"/><circle class="p" cx="441.3" cy="383.3" r="3.6"/><circle class="g" cx="635.3" cy="431.4" r="3.6"/><circle class="r" cx="484.1" cy="283.6" r="3.6"/><circle class="g" cx="190.6" cy="416.1" r="3.6"/><circle class="r" cx="495.2" cy="257.0" r="3.6"/><circle class="g" cx="588.5" cy="205.7" r="3.6"/><circle class="g" cx="40.4" cy="356.1" r="3.6"/><circle class="r" cx="491.2" cy="389.8" r="3.6"/><circle class="p" cx="241.5" cy="349.6" r="3.6"/><circle class="g" cx="589.7" cy="214.8" r="3.6"/><circle class="r" cx="742.1" cy="206.6" r="3.6"/><circle class="g" cx="590.8" cy="389.1" r="3.6"/><circle class="g" cx="224.9" cy="652.9" r="3.6"/><circle class="p" cx="247.2" cy="355.8" r="3.6"/><circle class="r" cx="468.4" cy="394.6" r="3.6"/><circle class="g" cx="573.7" cy="370.8" r="3.6"/><circle class="p" cx="259.6" cy="409.5" r="3.6"/><circle class="r" cx="519.5" cy="301.6" r="3.6"/><circle class="g" cx="626.2" cy="522.4" r="3.6"/><circle class="g" cx="589.7" cy="233.9" r="3.6"/><circle class="g" cx="609.3" cy="397.1" r="3.6"/><circle class="g" cx="624.8" cy="431.6" r="3.6"/><circle class="g" cx="475.7" cy="377.1" r="3.6"/><circle class="g" cx="612.8" cy="246.9" r="3.6"/><circle class="g" cx="642.6" cy="450.3" r="3.6"/><circle class="p" cx="262.1" cy="359.3" r="3.6"/><circle class="g" cx="488.9" cy="295.8" r="3.6"/><circle class="g" cx="510.8" cy="407.9" r="3.6"/><circle class="r" cx="483.4" cy="237.2" r="3.6"/><circle class="r" cx="514.5" cy="326.0" r="3.6"/><circle class="g" cx="611.3" cy="214.6" r="3.6"/><circle class="p" cx="390.7" cy="291.3" r="3.6"/><circle class="g" cx="616.0" cy="427.9" r="3.6"/><circle class="g" cx="100.0" cy="671.0" r="3.6"/><circle class="r" cx="674.9" cy="193.9" r="3.6"/><circle class="g" cx="57.8" cy="664.0" r="3.6"/><circle class="g" cx="141.3" cy="348.1" r="3.6"/><circle class="g" cx="489.6" cy="477.9" r="3.6"/><circle class="g" cx="201.9" cy="400.0" r="3.6"/><circle class="g" cx="575.5" cy="411.7" r="3.6"/><circle class="p" cx="265.9" cy="292.4" r="3.6"/><circle class="r" cx="151.8" cy="280.5" r="3.6"/><circle class="p" cx="447.8" cy="656.4" r="3.6"/><circle class="g" cx="213.4" cy="622.7" r="3.6"/><circle class="g" cx="504.7" cy="442.8" r="3.6"/><circle class="g" cx="645.6" cy="459.8" r="3.6"/><circle class="p" cx="234.2" cy="449.4" r="3.6"/><circle class="g" cx="63.0" cy="661.0" r="3.6"/><circle class="g" cx="598.8" cy="360.7" r="3.6"/><circle class="g" cx="524.4" cy="435.6" r="3.6"/><circle class="p" cx="440.0" cy="664.3" r="3.6"/><circle class="p" cx="265.6" cy="409.3" r="3.6"/><circle class="g" cx="594.9" cy="226.3" r="3.6"/><circle class="r" cx="663.4" cy="207.0" r="3.6"/><circle class="g" cx="332.8" cy="545.4" r="3.6"/><circle class="p" cx="210.1" cy="404.2" r="3.6"/><circle class="r" cx="491.9" cy="235.2" r="3.6"/><circle class="r" cx="599.6" cy="460.4" r="3.6"/><circle class="r" cx="474.1" cy="277.7" r="3.6"/><circle class="r" cx="641.4" cy="187.9" r="3.6"/><circle class="g" cx="258.0" cy="343.2" r="3.6"/><circle class="p" cx="218.3" cy="422.5" r="3.6"/><circle class="p" cx="229.6" cy="412.0" r="3.6"/><circle class="p" cx="268.7" cy="416.2" r="3.6"/><circle class="r" cx="482.8" cy="411.9" r="3.6"/><circle class="r" cx="528.7" cy="409.7" r="3.6"/><circle class="p" cx="225.7" cy="435.4" r="3.6"/><circle class="g" cx="505.4" cy="476.2" r="3.6"/><circle class="g" cx="668.2" cy="448.4" r="3.6"/><circle class="r" cx="479.9" cy="243.7" r="3.6"/><circle class="r" cx="640.0" cy="195.6" r="3.6"/><circle class="r" cx="582.5" cy="486.9" r="3.6"/><circle class="g" cx="510.2" cy="404.5" r="3.6"/><circle class="r" cx="678.8" cy="190.8" r="3.6"/><circle class="p" cx="265.2" cy="377.9" r="3.6"/><circle class="g" cx="485.2" cy="303.3" r="3.6"/><circle class="r" cx="113.7" cy="288.0" r="3.6"/><circle class="g" cx="215.3" cy="305.1" r="3.6"/><circle class="p" cx="201.7" cy="413.0" r="3.6"/><circle class="g" cx="483.4" cy="337.7" r="3.6"/><circle class="g" cx="260.9" cy="338.0" r="3.6"/><circle class="p" cx="411.8" cy="386.1" r="3.6"/><circle class="g" cx="64.0" cy="349.9" r="3.6"/><circle class="r" cx="681.8" cy="221.8" r="3.6"/><circle class="g" cx="307.0" cy="541.0" r="3.6"/><circle class="r" cx="691.5" cy="193.0" r="3.6"/><circle class="r" cx="667.1" cy="173.6" r="3.6"/><circle class="r" cx="504.1" cy="296.1" r="3.6"/><circle class="p" cx="255.5" cy="451.8" r="3.6"/><circle class="g" cx="532.1" cy="369.5" r="3.6"/><circle class="g" cx="83.6" cy="357.6" r="3.6"/><circle class="p" cx="429.8" cy="667.3" r="3.6"/><circle class="r" cx="610.7" cy="451.6" r="3.6"/><circle class="p" cx="252.6" cy="423.9" r="3.6"/><circle class="r" cx="203.8" cy="365.5" r="3.6"/><circle class="r" cx="633.6" cy="181.0" r="3.6"/><circle class="r" cx="674.2" cy="225.2" r="3.6"/><circle class="p" cx="358.6" cy="289.0" r="3.6"/><circle class="g" cx="463.5" cy="374.8" r="3.6"/><circle class="r" cx="560.8" cy="399.2" r="3.6"/><circle class="r" cx="606.4" cy="479.1" r="3.6"/><circle class="r" cx="657.4" cy="223.8" r="3.6"/><circle class="g" cx="197.2" cy="272.4" r="3.6"/><circle class="r" cx="593.7" cy="451.2" r="3.6"/><circle class="r" cx="518.2" cy="423.5" r="3.6"/><circle class="p" cx="230.9" cy="432.9" r="3.6"/><circle class="g" cx="696.5" cy="224.5" r="3.6"/><circle class="p" cx="229.8" cy="448.5" r="3.6"/><circle class="r" cx="196.4" cy="387.3" r="3.6"/><circle class="r" cx="598.7" cy="442.8" r="3.6"/><circle class="p" cx="213.1" cy="441.2" r="3.6"/><circle class="g" cx="662.3" cy="461.1" r="3.6"/><circle class="p" cx="267.9" cy="319.0" r="3.6"/><circle class="g" cx="562.1" cy="479.5" r="3.6"/><circle class="r" cx="565.9" cy="409.0" r="3.6"/><circle class="g" cx="447.4" cy="229.4" r="3.6"/><circle class="g" cx="717.5" cy="220.6" r="3.6"/><circle class="g" cx="497.5" cy="401.2" r="3.6"/><circle class="g" cx="627.9" cy="418.1" r="3.6"/><circle class="p" cx="248.9" cy="440.7" r="3.6"/><circle class="r" cx="59.3" cy="316.8" r="3.6"/><circle class="p" cx="373.2" cy="387.9" r="3.6"/><circle class="g" cx="202.5" cy="303.6" r="3.6"/><circle class="r" cx="547.7" cy="392.8" r="3.6"/><circle class="g" cx="645.8" cy="473.3" r="3.6"/><circle class="g" cx="600.1" cy="383.5" r="3.6"/><circle class="g" cx="659.5" cy="454.6" r="3.6"/><circle class="r" cx="504.5" cy="276.0" r="3.6"/><circle class="r" cx="479.9" cy="412.8" r="3.6"/><circle class="g" cx="535.2" cy="490.7" r="3.6"/><circle class="r" cx="557.2" cy="424.6" r="3.6"/><circle class="p" cx="268.9" cy="370.0" r="3.6"/><circle class="r" cx="677.4" cy="218.0" r="3.6"/><circle class="p" cx="397.5" cy="287.1" r="3.6"/><circle class="g" cx="217.2" cy="317.7" r="3.6"/><circle class="r" cx="136.0" cy="650.0" r="3.6"/><circle class="g" cx="353.3" cy="592.6" r="3.6"/><circle class="g" cx="600.2" cy="235.0" r="3.6"/><circle class="r" cx="504.7" cy="299.4" r="3.6"/><circle class="g" cx="507.9" cy="487.9" r="3.6"/><circle class="g" cx="707.1" cy="213.6" r="3.6"/><circle class="r" cx="636.8" cy="188.7" r="3.6"/><circle class="g" cx="597.7" cy="238.2" r="3.6"/><circle class="p" cx="304.4" cy="289.2" r="3.6"/><circle class="g" cx="594.5" cy="413.4" r="3.6"/><circle class="r" cx="685.8" cy="177.4" r="3.6"/><circle class="g" cx="590.5" cy="210.0" r="3.6"/><circle class="p" cx="216.2" cy="440.3" r="3.6"/><circle class="r" cx="518.2" cy="324.4" r="3.6"/><circle class="g" cx="508.1" cy="483.9" r="3.6"/><circle class="r" cx="694.0" cy="206.4" r="3.6"/><circle class="p" cx="281.7" cy="304.4" r="3.6"/><circle class="g" cx="233.6" cy="628.6" r="3.6"/><circle class="r" cx="596.0" cy="449.5" r="3.6"/><circle class="p" cx="265.0" cy="297.1" r="3.6"/><circle class="g" cx="621.1" cy="243.7" r="3.6"/><circle class="p" cx="263.7" cy="457.7" r="3.6"/><circle class="p" cx="383.1" cy="336.3" r="3.6"/><circle class="r" cx="70.8" cy="283.2" r="3.6"/><circle class="p" cx="265.0" cy="373.3" r="3.6"/><circle class="r" cx="511.3" cy="264.4" r="3.6"/><circle class="p" cx="271.7" cy="368.7" r="3.6"/><circle class="r" cx="471.5" cy="247.9" r="3.6"/><circle class="r" cx="736.4" cy="194.8" r="3.6"/><circle class="g" cx="209.8" cy="292.1" r="3.6"/><circle class="g" cx="248.2" cy="298.1" r="3.6"/><circle class="g" cx="562.1" cy="218.5" r="3.6"/><circle class="r" cx="471.3" cy="394.7" r="3.6"/><circle class="r" cx="521.3" cy="273.6" r="3.6"/><circle class="r" cx="671.8" cy="207.1" r="3.6"/><circle class="r" cx="536.8" cy="382.7" r="3.6"/><circle class="p" cx="269.2" cy="291.6" r="3.6"/><circle class="p" cx="385.1" cy="325.7" r="3.6"/><circle class="p" cx="230.1" cy="444.8" r="3.6"/><circle class="g" cx="549.5" cy="225.9" r="3.6"/><circle class="p" cx="224.2" cy="414.9" r="3.6"/><circle class="p" cx="245.5" cy="363.0" r="3.6"/><circle class="p" cx="249.7" cy="392.0" r="3.6"/><circle class="p" cx="270.6" cy="404.3" r="3.6"/><circle class="g" cx="631.0" cy="259.7" r="3.6"/><circle class="g" cx="546.4" cy="509.5" r="3.6"/><circle class="g" cx="64.3" cy="376.8" r="3.6"/><circle class="g" cx="571.0" cy="383.1" r="3.6"/><circle class="g" cx="718.5" cy="208.7" r="3.6"/><circle class="g" cx="496.5" cy="394.9" r="3.6"/><circle class="g" cx="94.0" cy="670.0" r="3.6"/><circle class="g" cx="700.6" cy="236.3" r="3.6"/><circle class="r" cx="530.0" cy="325.7" r="3.6"/><circle class="p" cx="380.6" cy="379.5" r="3.6"/><circle class="r" cx="523.1" cy="318.5" r="3.6"/><circle class="r" cx="533.1" cy="288.9" r="3.6"/><circle class="g" cx="536.3" cy="436.2" r="3.6"/><circle class="g" cx="467.9" cy="242.1" r="3.6"/><circle class="r" cx="531.5" cy="401.3" r="3.6"/><circle class="p" cx="210.5" cy="453.6" r="3.6"/><circle class="r" cx="729.3" cy="203.5" r="3.6"/><circle class="g" cx="599.2" cy="357.0" r="3.6"/><circle class="p" cx="270.0" cy="312.6" r="3.6"/><circle class="p" cx="434.2" cy="669.2" r="3.6"/><circle class="g" cx="664.0" cy="466.2" r="3.6"/><circle class="r" cx="654.4" cy="228.1" r="3.6"/><circle class="r" cx="681.7" cy="177.4" r="3.6"/><circle class="g" cx="581.7" cy="412.9" r="3.6"/><circle class="p" cx="254.1" cy="382.2" r="3.6"/><circle class="g" cx="55.7" cy="347.6" r="3.6"/><circle class="p" cx="246.9" cy="429.7" r="3.6"/><circle class="r" cx="654.3" cy="201.4" r="3.6"/><circle class="p" cx="271.3" cy="376.9" r="3.6"/><circle class="p" cx="406.1" cy="301.6" r="3.6"/><circle class="g" cx="556.9" cy="233.5" r="3.6"/><circle class="r" cx="685.8" cy="175.2" r="3.6"/><circle class="r" cx="229.7" cy="378.3" r="3.6"/><circle class="g" cx="651.1" cy="454.9" r="3.6"/><circle class="g" cx="183.0" cy="341.0" r="3.6"/><circle class="g" cx="151.4" cy="348.6" r="3.6"/><circle class="g" cx="541.6" cy="374.4" r="3.6"/><circle class="r" cx="594.5" cy="445.0" r="3.6"/><circle class="p" cx="265.7" cy="418.2" r="3.6"/><circle class="r" cx="479.5" cy="410.4" r="3.6"/><circle class="g" cx="594.9" cy="383.6" r="3.6"/><circle class="r" cx="494.1" cy="288.8" r="3.6"/><circle class="r" cx="591.8" cy="477.9" r="3.6"/><circle class="g" cx="538.2" cy="285.2" r="3.6"/><circle class="r" cx="688.2" cy="189.6" r="3.6"/><circle class="g" cx="573.8" cy="233.1" r="3.6"/><circle class="r" cx="581.8" cy="481.5" r="3.6"/><circle class="g" cx="471.6" cy="371.1" r="3.6"/><circle class="p" cx="221.5" cy="432.8" r="3.6"/><circle class="g" cx="484.4" cy="461.8" r="3.6"/><circle class="g" cx="468.0" cy="320.5" r="3.6"/><circle class="p" cx="224.5" cy="422.1" r="3.6"/><circle class="g" cx="551.9" cy="382.6" r="3.6"/><circle class="r" cx="802.0" cy="153.0" r="3.6"/><circle class="g" cx="601.3" cy="229.4" r="3.6"/><circle class="g" cx="476.2" cy="476.1" r="3.6"/><circle class="r" cx="655.3" cy="219.9" r="3.6"/><circle class="r" cx="590.0" cy="454.9" r="3.6"/><circle class="g" cx="479.3" cy="291.3" r="3.6"/><circle class="r" cx="618.1" cy="480.2" r="3.6"/><circle class="g" cx="529.3" cy="343.7" r="3.6"/><circle class="r" cx="562.5" cy="390.4" r="3.6"/><circle class="r" cx="508.8" cy="266.3" r="3.6"/><circle class="r" cx="492.8" cy="386.8" r="3.6"/><circle class="g" cx="468.1" cy="315.4" r="3.6"/><circle class="r" cx="506.1" cy="283.9" r="3.6"/><circle class="r" cx="586.0" cy="478.0" r="3.6"/><circle class="g" cx="488.4" cy="372.1" r="3.6"/><circle class="p" cx="257.2" cy="433.4" r="3.6"/><circle class="r" cx="736.5" cy="191.4" r="3.6"/><circle class="p" cx="226.8" cy="431.2" r="3.6"/><circle class="r" cx="112.2" cy="253.2" r="3.6"/><circle class="g" cx="885.0" cy="224.5" r="3.6"/><circle class="g" cx="607.8" cy="243.5" r="3.6"/><circle class="g" cx="244.5" cy="303.7" r="3.6"/><circle class="r" cx="658.3" cy="209.0" r="3.6"/><circle class="r" cx="650.3" cy="195.6" r="3.6"/><circle class="r" cx="534.5" cy="406.4" r="3.6"/><circle class="g" cx="564.0" cy="229.4" r="3.6"/><circle class="r" cx="632.9" cy="236.4" r="3.6"/><circle class="r" cx="582.6" cy="472.5" r="3.6"/><circle class="p" cx="265.6" cy="305.0" r="3.6"/><circle class="r" cx="638.5" cy="225.0" r="3.6"/><circle class="p" cx="234.9" cy="418.6" r="3.6"/><circle class="p" cx="265.1" cy="383.3" r="3.6"/><circle class="p" cx="280.1" cy="447.1" r="3.6"/><circle class="r" cx="534.5" cy="394.4" r="3.6"/><circle class="g" cx="479.6" cy="464.6" r="3.6"/><circle class="r" cx="474.1" cy="271.8" r="3.6"/><circle class="r" cx="222.0" cy="360.8" r="3.6"/><circle class="r" cx="58.5" cy="311.2" r="3.6"/><circle class="p" cx="224.3" cy="441.6" r="3.6"/><circle class="g" cx="498.2" cy="374.8" r="3.6"/><circle class="g" cx="489.1" cy="463.7" r="3.6"/><circle class="g" cx="503.2" cy="376.0" r="3.6"/><circle class="g" cx="713.7" cy="228.9" r="3.6"/><circle class="p" cx="255.9" cy="379.8" r="3.6"/><circle class="g" cx="571.3" cy="196.9" r="3.6"/><circle class="r" cx="695.8" cy="177.5" r="3.6"/><circle class="g" cx="589.5" cy="202.8" r="3.6"/><circle class="r" cx="94.6" cy="295.6" r="3.6"/><circle class="p" cx="236.3" cy="394.4" r="3.6"/><circle class="g" cx="319.0" cy="535.0" r="3.6"/><circle class="g" cx="598.8" cy="240.1" r="3.6"/><circle class="r" cx="546.3" cy="388.0" r="3.6"/><circle class="g" cx="540.2" cy="233.1" r="3.6"/><circle class="g" cx="489.9" cy="376.2" r="3.6"/><circle class="g" cx="627.2" cy="436.8" r="3.6"/><circle class="r" cx="603.7" cy="446.2" r="3.6"/><circle class="r" cx="541.1" cy="401.0" r="3.6"/><circle class="r" cx="676.0" cy="190.3" r="3.6"/><circle class="r" cx="196.5" cy="366.3" r="3.6"/><circle class="r" cx="478.6" cy="401.4" r="3.6"/><circle class="g" cx="507.8" cy="373.5" r="3.6"/><circle class="r" cx="656.1" cy="188.5" r="3.6"/><circle class="g" cx="572.0" cy="456.8" r="3.6"/><circle class="g" cx="559.4" cy="223.4" r="3.6"/><circle class="p" cx="387.1" cy="383.2" r="3.6"/><circle class="r" cx="657.4" cy="203.8" r="3.6"/><circle class="r" cx="804.4" cy="140.5" r="3.6"/><circle class="r" cx="525.8" cy="273.2" r="3.6"/><circle class="r" cx="209.9" cy="375.4" r="3.6"/><circle class="r" cx="108.1" cy="307.5" r="3.6"/><circle class="p" cx="261.7" cy="401.9" r="3.6"/><circle class="r" cx="495.5" cy="298.6" r="3.6"/><circle class="g" cx="511.9" cy="373.6" r="3.6"/><circle class="r" cx="494.7" cy="243.3" r="3.6"/><circle class="p" cx="390.4" cy="296.4" r="3.6"/><circle class="g" cx="498.7" cy="463.2" r="3.6"/><circle class="r" cx="592.7" cy="473.9" r="3.6"/><circle class="g" cx="597.8" cy="208.0" r="3.6"/><circle class="g" cx="593.5" cy="380.8" r="3.6"/><circle class="r" cx="487.6" cy="249.1" r="3.6"/><circle class="p" cx="273.8" cy="440.6" r="3.6"/><circle class="r" cx="225.5" cy="385.5" r="3.6"/><circle class="r" cx="503.5" cy="260.5" r="3.6"/><circle class="g" cx="609.0" cy="226.2" r="3.6"/><circle class="p" cx="268.3" cy="455.0" r="3.6"/><circle class="g" cx="155.2" cy="314.5" r="3.6"/><circle class="g" cx="571.2" cy="343.9" r="3.6"/><circle class="r" cx="568.2" cy="415.1" r="3.6"/><circle class="g" cx="406.0" cy="664.0" r="3.6"/><circle class="g" cx="611.8" cy="242.5" r="3.6"/><circle class="r" cx="551.4" cy="405.9" r="3.6"/><circle class="g" cx="61.8" cy="365.1" r="3.6"/><circle class="p" cx="408.7" cy="299.5" r="3.6"/><circle class="g" cx="466.0" cy="296.4" r="3.6"/><circle class="p" cx="360.2" cy="299.8" r="3.6"/><circle class="p" cx="301.6" cy="285.2" r="3.6"/><circle class="r" cx="566.6" cy="422.3" r="3.6"/><circle class="p" cx="419.6" cy="382.4" r="3.6"/><circle class="p" cx="266.0" cy="405.2" r="3.6"/><circle class="r" cx="223.9" cy="353.8" r="3.6"/><circle class="g" cx="71.9" cy="360.0" r="3.6"/><circle class="r" cx="770.0" cy="147.0" r="3.6"/><circle class="r" cx="236.6" cy="364.1" r="3.6"/><circle class="r" cx="567.8" cy="400.4" r="3.6"/><circle class="g" cx="615.5" cy="432.4" r="3.6"/><circle class="p" cx="263.1" cy="295.4" r="3.6"/><circle class="r" cx="689.3" cy="212.5" r="3.6"/><circle class="g" cx="59.3" cy="351.0" r="3.6"/><circle class="p" cx="395.8" cy="315.8" r="3.6"/><circle class="g" cx="587.7" cy="240.7" r="3.6"/><circle class="g" cx="618.8" cy="230.8" r="3.6"/><circle class="p" cx="401.1" cy="320.6" r="3.6"/><circle class="r" cx="566.1" cy="402.2" r="3.6"/><circle class="g" cx="214.0" cy="293.3" r="3.6"/><circle class="g" cx="437.6" cy="220.5" r="3.6"/><circle class="r" cx="652.2" cy="219.2" r="3.6"/><circle class="r" cx="646.9" cy="199.6" r="3.6"/><circle class="g" cx="468.7" cy="283.6" r="3.6"/><circle class="r" cx="654.9" cy="212.8" r="3.6"/><circle class="g" cx="546.0" cy="222.7" r="3.6"/><circle class="r" cx="617.9" cy="452.6" r="3.6"/><circle class="g" cx="612.4" cy="406.6" r="3.6"/><circle class="g" cx="669.4" cy="454.3" r="3.6"/><circle class="r" cx="207.7" cy="367.7" r="3.6"/><circle class="g" cx="316.3" cy="537.0" r="3.6"/><circle class="p" cx="427.9" cy="663.3" r="3.6"/><circle class="r" cx="644.5" cy="198.3" r="3.6"/><circle class="g" cx="598.7" cy="390.0" r="3.6"/><circle class="g" cx="549.9" cy="370.4" r="3.6"/><circle class="g" cx="138.8" cy="332.2" r="3.6"/><circle class="g" cx="451.6" cy="229.6" r="3.6"/><circle class="p" cx="241.2" cy="392.4" r="3.6"/><circle class="r" cx="550.5" cy="391.1" r="3.6"/><circle class="g" cx="250.4" cy="300.8" r="3.6"/><circle class="p" cx="225.1" cy="417.4" r="3.6"/><circle class="r" cx="602.4" cy="454.2" r="3.6"/><circle class="g" cx="305.2" cy="441.0" r="3.6"/><circle class="g" cx="558.0" cy="225.5" r="3.6"/><circle class="r" cx="492.7" cy="291.5" r="3.6"/><circle class="r" cx="188.5" cy="384.1" r="3.6"/><circle class="g" cx="56.2" cy="361.0" r="3.6"/><circle class="r" cx="649.2" cy="222.7" r="3.6"/><circle class="p" cx="426.9" cy="658.3" r="3.6"/><circle class="r" cx="489.4" cy="314.9" r="3.6"/><circle class="r" cx="558.9" cy="405.9" r="3.6"/><circle class="r" cx="59.8" cy="308.8" r="3.6"/><circle class="g" cx="603.2" cy="410.4" r="3.6"/><circle class="g" cx="764.8" cy="215.4" r="3.6"/><circle class="r" cx="218.7" cy="359.0" r="3.6"/><circle class="p" cx="257.9" cy="359.6" r="3.6"/><circle class="g" cx="591.8" cy="215.5" r="3.6"/><circle class="g" cx="443.7" cy="223.9" r="3.6"/><circle class="p" cx="202.7" cy="438.7" r="3.6"/><circle class="r" cx="701.1" cy="186.5" r="3.6"/><circle class="g" cx="722.4" cy="210.6" r="3.6"/><circle class="p" cx="254.6" cy="415.9" r="3.6"/><circle class="g" cx="619.1" cy="226.1" r="3.6"/><circle class="r" cx="496.6" cy="281.8" r="3.6"/><circle class="r" cx="67.5" cy="322.7" r="3.6"/><circle class="g" cx="226.8" cy="625.0" r="3.6"/><circle class="g" cx="629.7" cy="510.8" r="3.6"/><circle class="g" cx="265.0" cy="657.8" r="3.6"/><circle class="r" cx="482.2" cy="242.4" r="3.6"/><circle class="r" cx="90.2" cy="335.2" r="3.6"/><circle class="g" cx="592.1" cy="375.9" r="3.6"/><circle class="p" cx="304.0" cy="447.0" r="3.6"/><circle class="r" cx="530.8" cy="421.0" r="3.6"/><circle class="p" cx="200.4" cy="410.9" r="3.6"/><circle class="p" cx="257.3" cy="427.7" r="3.6"/><circle class="g" cx="559.6" cy="209.6" r="3.6"/><circle class="g" cx="500.2" cy="379.8" r="3.6"/><circle class="g" cx="764.5" cy="207.7" r="3.6"/><circle class="r" cx="150.8" cy="674.4" r="3.6"/><circle class="g" cx="470.2" cy="296.1" r="3.6"/><circle class="r" cx="490.9" cy="259.1" r="3.6"/><circle class="g" cx="702.7" cy="250.9" r="3.6"/><circle class="p" cx="413.2" cy="303.1" r="3.6"/><circle class="g" cx="580.4" cy="402.8" r="3.6"/><circle class="g" cx="511.9" cy="436.5" r="3.6"/><circle class="g" cx="647.2" cy="266.9" r="3.6"/><circle class="g" cx="600.9" cy="208.9" r="3.6"/><circle class="g" cx="71.2" cy="353.6" r="3.6"/><circle class="p" cx="206.5" cy="445.9" r="3.6"/><circle class="g" cx="697.5" cy="242.4" r="3.6"/><circle class="r" cx="140.6" cy="652.5" r="3.6"/><circle class="p" cx="263.4" cy="380.5" r="3.6"/><circle class="r" cx="545.1" cy="405.8" r="3.6"/><circle class="g" cx="111.0" cy="663.0" r="3.6"/><circle class="p" cx="284.8" cy="299.9" r="3.6"/><circle class="p" cx="242.4" cy="354.0" r="3.6"/><circle class="p" cx="253.5" cy="365.9" r="3.6"/><circle class="p" cx="303.5" cy="356.5" r="3.6"/><circle class="r" cx="523.9" cy="400.1" r="3.6"/><circle class="g" cx="242.9" cy="292.4" r="3.6"/><circle class="p" cx="388.4" cy="295.3" r="3.6"/><circle class="r" cx="744.4" cy="202.8" r="3.6"/><circle class="p" cx="439.7" cy="677.0" r="3.6"/><circle class="g" cx="505.3" cy="493.9" r="3.6"/><circle class="p" cx="212.8" cy="445.3" r="3.6"/><circle class="g" cx="272.6" cy="352.4" r="3.6"/><circle class="r" cx="659.5" cy="221.8" r="3.6"/><circle class="r" cx="589.4" cy="480.6" r="3.6"/><circle class="r" cx="730.5" cy="205.7" r="3.6"/><circle class="r" cx="795.6" cy="136.7" r="3.6"/><circle class="g" cx="516.7" cy="475.8" r="3.6"/><circle class="g" cx="524.4" cy="366.2" r="3.6"/><circle class="r" cx="500.7" cy="322.3" r="3.6"/><circle class="r" cx="627.8" cy="234.3" r="3.6"/><circle class="r" cx="633.3" cy="223.8" r="3.6"/><circle class="g" cx="493.3" cy="475.4" r="3.6"/><circle class="r" cx="604.0" cy="462.9" r="3.6"/><circle class="g" cx="611.9" cy="394.0" r="3.6"/><circle class="g" cx="483.6" cy="464.7" r="3.6"/><circle class="g" cx="537.6" cy="494.6" r="3.6"/><circle class="r" cx="614.9" cy="450.8" r="3.6"/><circle class="r" cx="80.0" cy="652.0" r="3.6"/><circle class="g" cx="701.5" cy="247.6" r="3.6"/><circle class="r" cx="669.7" cy="227.2" r="3.6"/><circle class="g" cx="550.7" cy="513.7" r="3.6"/><circle class="g" cx="599.3" cy="245.1" r="3.6"/><circle class="p" cx="206.3" cy="437.1" r="3.6"/><circle class="g" cx="465.3" cy="249.3" r="3.6"/><circle class="g" cx="551.8" cy="511.7" r="3.6"/><circle class="r" cx="767.8" cy="149.3" r="3.6"/><circle class="g" cx="203.2" cy="290.4" r="3.6"/><circle class="g" cx="585.5" cy="388.5" r="3.6"/><circle class="g" cx="259.9" cy="284.3" r="3.6"/><circle class="r" cx="726.5" cy="207.7" r="3.6"/><circle class="g" cx="576.2" cy="221.4" r="3.6"/><circle class="p" cx="378.0" cy="336.0" r="3.6"/><circle class="p" cx="258.4" cy="366.3" r="3.6"/><circle class="r" cx="630.3" cy="196.4" r="3.6"/><circle class="g" cx="573.4" cy="393.6" r="3.6"/><circle class="g" cx="548.2" cy="491.3" r="3.6"/><circle class="r" cx="494.2" cy="253.0" r="3.6"/><circle class="g" cx="572.1" cy="207.8" r="3.6"/><circle class="p" cx="267.4" cy="448.6" r="3.6"/><circle class="g" cx="601.5" cy="213.8" r="3.6"/><circle class="g" cx="594.9" cy="203.9" r="3.6"/><circle class="g" cx="577.6" cy="217.0" r="3.6"/><circle class="g" cx="578.7" cy="391.8" r="3.6"/><circle class="r" cx="548.3" cy="412.8" r="3.6"/><circle class="g" cx="595.6" cy="374.9" r="3.6"/><circle class="r" cx="498.5" cy="271.1" r="3.6"/><circle class="p" cx="402.2" cy="297.4" r="3.6"/><circle class="r" cx="695.2" cy="185.5" r="3.6"/><circle class="g" cx="641.3" cy="477.2" r="3.6"/><circle class="g" cx="53.8" cy="356.6" r="3.6"/><circle class="r" cx="65.9" cy="305.8" r="3.6"/><circle class="p" cx="245.3" cy="431.8" r="3.6"/><circle class="r" cx="678.1" cy="178.0" r="3.6"/><circle class="g" cx="643.4" cy="467.8" r="3.6"/><circle class="r" cx="504.6" cy="287.6" r="3.6"/><circle class="p" cx="282.7" cy="323.1" r="3.6"/><circle class="g" cx="583.1" cy="203.4" r="3.6"/><circle class="g" cx="217.6" cy="286.9" r="3.6"/><circle class="g" cx="551.3" cy="255.6" r="3.6"/><circle class="g" cx="476.1" cy="292.7" r="3.6"/><circle class="g" cx="466.8" cy="372.5" r="3.6"/><circle class="r" cx="489.0" cy="262.9" r="3.6"/><circle class="g" cx="560.2" cy="367.7" r="3.6"/><circle class="r" cx="51.3" cy="313.7" r="3.6"/><circle class="g" cx="628.9" cy="434.9" r="3.6"/><circle class="r" cx="499.6" cy="300.6" r="3.6"/><circle class="r" cx="641.0" cy="215.5" r="3.6"/></g></svg>
<div id="hdr">
<svg style="position:absolute;left:9px;top:4px" width="26" height="32" viewBox="0 0 26 32">
<path d="M1 1.6 Q12.5 -0.4 24 1.6 L24 16 Q24 25.5 12.5 30.6 Q1 25.5 1 16Z" fill="#1d33cc" stroke="#7a3fa8" stroke-width="0.5"/>
<path d="M3.2 19.5 L8.3 12 L10.4 14.6 L12.5 9 L14.6 14.6 L16.7 12 L21.8 19.5 Q19.5 25.8 12.5 28.8 Q5.5 25.8 3.2 19.5Z" fill="#fff"/>
<path d="M5.2 21 q1.85 -1.5 3.7 0 t3.7 0 t3.7 0 t3.5 0 M6.8 23.6 q1.45 -1.3 2.9 0 t2.9 0 t2.9 0 t2.7 0" fill="none" stroke="#1d33cc" stroke-width="1"/>
<circle cx="9.8" cy="5.8" r="0.85" fill="#e8d84a"/><circle cx="15.2" cy="5.8" r="0.85" fill="#e8d84a"/><circle cx="12.5" cy="8.3" r="0.85" fill="#e8d84a"/>
</svg>
<div class="title">ATLAS VODA</div>
<div class="lnk" style="left:272px">Direkcija Republike Slovenije za vode</div>
<div class="lnk" style="left:528px">Portal eVode</div>
<div class="lnk" style="left:624px">Poplave 2023</div>
<div class="hic" style="left:882px;border-left:none;"><svg viewBox="0 0 40 40"><path d="M15.5 10 L25.5 10 L20.5 23 Z" fill="none" stroke="#fff" stroke-opacity=".66" stroke-width="1.6" stroke-linejoin="round"/><circle cx="20.5" cy="28.3" r="2" fill="none" stroke="#fff" stroke-opacity=".66" stroke-width="1.4"/></svg></div>
<div class="hic" style="left:922px;"><svg viewBox="0 0 40 40"><circle cx="20" cy="19.5" r="11.8" fill="#fff" fill-opacity=".66"/><path d="M21.2 12.2 a1.6 1.6 0 1 1 -0.1 0 M18 17 L22 16.3 L20.3 25.5 Q20.2 26.6 21.8 26 L21.6 27 Q17.2 28.8 17.8 25.6 L19.2 18.4 L17.8 18.2Z" fill="#7fc3e2"/></svg></div>
<div class="hic" style="left:962px;"><svg viewBox="0 0 40 40"><circle cx="20" cy="25" r="4" fill="#fff" fill-opacity=".66"/><path d="M20 21 V10 M16.6 13 L20 9.6 L23.4 13 M17.5 22.5 L10.5 14.5 M10 18.8 V14 H14.8 M22.5 22.5 L29.5 14.5 M25.2 14 H30 V18.8" fill="none" stroke="#fff" stroke-opacity=".66" stroke-width="1.6"/></svg></div>
<div class="hic" style="left:1002px;"><svg viewBox="0 0 40 40"><g transform="translate(-3 0)"><path d="M18 8.5 H11.5 V30.5 H18" fill="none" stroke="#fff" stroke-opacity=".66" stroke-width="1.5" stroke-dasharray="1.5 1.6"/><rect x="22.5" y="8.5" width="12" height="22" fill="none" stroke="#fff" stroke-opacity=".66" stroke-width="1.6"/><path d="M19 17.5 L16 19.8 L19 22 Z M26 17.5 L29 19.8 L26 22Z" fill="#fff" fill-opacity=".66"/></g></svg></div>
<div class="hic" style="left:1042px;"><svg viewBox="0 0 40 40"><path d="M21 9 a11 11 0 1 1 -1 22 q-3.5 -0.5 -2.5 -3.5 q1 -2.8 -2 -3.2 q-5 -0.5 -5.5 -4.5 q1 -9.5 11 -10.8Z" fill="#fff" fill-opacity=".66"/><path d="M16.5 7 V33" stroke="#87cceb" stroke-width="2.2"/><path d="M16.5 8 V32" fill="none" stroke="#fff" stroke-opacity=".66" stroke-width="0.9"/><circle cx="22" cy="13.5" r="1.5" fill="#87cceb"/><circle cx="27.5" cy="16.5" r="1.5" fill="#87cceb"/><circle cx="28.5" cy="23" r="1.5" fill="#87cceb"/><circle cx="23.5" cy="27.5" r="1.5" fill="#87cceb"/><circle cx="12.5" cy="19.5" r="1.3" fill="#87cceb"/></svg></div>
<div class="hic" style="left:1083px;"><svg viewBox="0 0 40 40"><path d="M7.5 14.5 L21 9.5 L34.5 13 L21 19.5 Z" fill="#fff" fill-opacity=".66"/><path d="M11 17.5 V24 M11 24 l-1.8 6.5 h3.6Z" fill="none" stroke="#fff" stroke-opacity=".66" stroke-width="2"/><path d="M14.5 19 V23 Q20 26.5 25.5 24.5 L32 19.5 V16 L21 21.5Z" fill="#fff" fill-opacity=".66"/></svg></div>
<div class="hic" style="left:1123px;"><svg viewBox="0 0 40 40"><path d="M13.5 8 H26.5 V15 H13.5Z" fill="none" stroke="#fff" stroke-opacity=".66" stroke-width="1.6"/><path d="M9 15.5 H31 Q32.5 15.5 32.5 17 V26.5 H27.5 V22.5 H12.5 V26.5 H7.5 V17 Q7.5 15.5 9 15.5Z" fill="#fff" fill-opacity=".66"/><path d="M13.5 24 H26.5 V31.5 H13.5Z" fill="none" stroke="#fff" stroke-opacity=".66" stroke-width="1.6"/><path d="M16 27 H24 M16 29.3 H24" fill="none" stroke="#fff" stroke-opacity=".66" stroke-width="0.9"/></svg></div>
<div class="hic" style="left:1163px;"><svg viewBox="0 0 40 40"><circle cx="11" cy="11" r="2" fill="#fff" fill-opacity=".66"/><circle cx="11" cy="20" r="2" fill="#fff" fill-opacity=".66"/><circle cx="11" cy="29" r="2" fill="#fff" fill-opacity=".66"/><path d="M16 11 H33 M16 20 H33 M16 29 H33" fill="none" stroke="#fff" stroke-opacity=".66" stroke-width="2"/></svg></div>
<div class="hic act" style="left:1204px;"><svg viewBox="0 0 40 40"><path d="M20 8.5 L32 15 L20 21.5 L8 15 Z" fill="#fff"/><path d="M8.5 20 L20 26.2 L31.5 20" fill="none" stroke="#fff" stroke-width="2.3"/><path d="M8.5 25.3 L20 31.5 L31.5 25.3" fill="none" stroke="#fff" stroke-width="2.3"/></svg></div>
<div class="hic" style="left:1244px;width:36px;"><svg viewBox="0 0 40 40"><rect x="8" y="8" width="11.5" height="11.5" fill="#fff" fill-opacity=".66"/><rect x="22" y="8" width="11.5" height="11.5" fill="#fff" fill-opacity=".66"/><rect x="8" y="21.5" width="11.5" height="11.5" fill="#fff" fill-opacity=".66"/><rect x="22" y="21.5" width="11.5" height="11.5" fill="#fff" fill-opacity=".66"/></svg></div>
</div>
<div class="lb" style="top:45.5px;height:60px"><svg width="30" height="60"><path d="M8 13.5 H22 M15 6.5 V20.5 M9 44.5 H21" stroke="#fff" stroke-width="2.6" fill="none"/></svg></div>
<div class="lb" style="top:116px;height:30.5px"><svg width="30" height="30"><path d="M15 5 L4.5 15.2 H8 V25 H13 V18.5 H17 V25 H22 V15.2 H25.5 Z M20 6.5 h3 v5.2 l-3 -2.9Z" fill="#fff"/></svg></div>
<div class="lb" style="top:151px;height:30.5px"><svg width="30" height="30"><circle cx="15" cy="15.3" r="8.6" fill="none" stroke="#fff" stroke-width="2"/><path d="M15 4.5 V10 M15 20.5 V26 M4.3 15.3 H9.7 M20.3 15.3 H25.7" stroke="#fff" stroke-width="2"/></svg></div>
<div class="lb" style="top:191px;height:30px"><svg width="30" height="30"><path d="M8 12.5 V8 H12.5 M17.5 8 H22 V12.5 M22 17.5 V22 H17.5 M12.5 22 H8 V17.5" fill="none" stroke="#fff" stroke-width="2.6"/></svg></div>
<div class="lb" style="top:230.5px;height:61.5px"><svg width="30" height="61"><path d="M6.5 15.5 L14.5 8.5 V12.8 H24 V18.2 H14.5 V22.5 Z" fill="#fff"/><path d="M23.5 45.5 L15.5 38.5 V42.8 H6 V48.2 H15.5 V52.5 Z" fill="#8a8a8a"/></svg></div>
<div id="srch"><svg style="position:absolute;left:8px;top:11px" width="16" height="10"><path d="M1 2 H15 L8 9Z" fill="#333"/></svg><div class="ph">Najdi naslov ali kraj</div><div class="dv"></div><svg style="position:absolute;left:246px;top:4px" width="24" height="24"><circle cx="10" cy="9.8" r="5.2" fill="none" stroke="#333" stroke-width="1.8"/><path d="M13.8 13.6 L19.5 19.3" stroke="#333" stroke-width="2.6" stroke-linecap="round"/></svg></div>
<div class="tb" style="left:53px"><svg width="40" height="40"><rect x="11" y="18" width="9" height="10" rx="1" fill="none" stroke="#fff" stroke-width="1.4"/><path d="M13.5 22 h4 M13.5 24.5 h4" stroke="#fff" stroke-width="1"/><circle cx="23" cy="16.5" r="6" fill="#555" stroke="#fff" stroke-width="2"/><path d="M26.5 21.5 L30.5 28" stroke="#fff" stroke-width="2.4" stroke-linecap="round"/></svg></div>
<div class="tb" style="left:103.5px"><svg width="40" height="40"><g transform="translate(-0.9 0.3)"><circle cx="20" cy="20" r="9.6" fill="none" stroke="#fff" stroke-width="1.7"/><ellipse cx="20" cy="20" rx="4.5" ry="9.6" fill="none" stroke="#fff" stroke-width="1.3"/><path d="M20 10.4 V29.6 M10.4 20 H29.6 M11.8 15.2 H28.2 M11.8 24.8 H28.2" stroke="#fff" stroke-width="1.3" fill="none"/></g></svg></div>
<div class="tb" style="left:154px"><svg width="40" height="40"><g transform="rotate(-40 20 20)"><rect x="9" y="16.3" width="22" height="7.4" fill="#fff"/><path d="M12 16.3 v3 M15 16.3 v2 M18 16.3 v3 M21 16.3 v2 M24 16.3 v3 M27 16.3 v2" stroke="#555" stroke-width="1"/></g></svg></div>
<div class="tb" style="left:204px"><svg width="40" height="40"><path d="M21.5 10 L29 9.5 Q30.5 9.6 30.3 11.2 L29.2 20.5 Q29 22.3 27.2 22.2 L22.5 21.8" fill="none" stroke="#fff" stroke-width="1.4"/><path d="M23 12.5 Q27.2 13 27 19.2 M22.5 15.5 Q25 16 25 19.8" fill="none" stroke="#fff" stroke-width="1.2"/><path d="M15.5 9.5 H20 Q19.5 16 21.5 21.5 L17.5 22 Q15 16 15.5 9.5Z" fill="#fff"/><path d="M10.8 17.5 L18.6 22.8 L15.2 23.6 L17.4 28 L15.6 28.9 L13.4 24.5 L10.8 27Z" fill="#fff" stroke="#555" stroke-width="0.6"/></svg></div>
<div id="panel">
<div class="ph"><div class="tt">Seznam slojev</div><svg style="position:absolute;left:296px;top:11px" width="16" height="14"><path d="M2.5 6.5 L8 2 L13.5 6.5 M2.5 11.5 L8 7 L13.5 11.5" fill="none" stroke="#fff" stroke-width="1.9"/></svg><svg style="position:absolute;left:334px;top:11px" width="14" height="14"><path d="M2.5 2.5 L11 11 M11 2.5 L2.5 11" stroke="#fff" stroke-width="2.4"/></svg></div>
<div class="row"><i class="ar" style="top:35.400000000000006px"></i></div>
<div class="cb" style="left:28px;top:30.400000000000006px"></div>
<div class="tx" style="left:53.6px;top:24.5px"><span style="letter-spacing:0.00px;position:relative;top:-1.2px">Integralna karta poplavne nevarnosti - IKPN</span><span style="letter-spacing:0.00px">(VK) stanje 21.8.2024</span></div>
<div class="dd" style="top:37.900000000000006px"><i style="left:0"></i><i style="left:6.3px"></i><i style="left:12.6px"></i></div>
<div class="row"><i class="ar" style="top:75.5px"></i></div>
<div class="cb" style="left:28px;top:70.5px"></div>
<div class="tx" style="left:53.6px;top:64.6px"><span style="letter-spacing:0.14px">Integralna karta razredov poplavne nevarnosti -</span><span style="letter-spacing:-0.16px">IKRPN Si (VK) stanje 21.8.2024</span></div>
<div class="dd" style="top:78px"><i style="left:0"></i><i style="left:6.3px"></i><i style="left:12.6px"></i></div>
<div class="row"><i class="ar" style="top:115.5px"></i></div>
<div class="cb" style="left:28px;top:110.5px"></div>
<div class="tx" style="left:53.6px;top:111.8px"><span style="letter-spacing:0.00px">Varstvo voda</span></div>
<div class="dd" style="top:118px"><i style="left:0"></i><i style="left:6.3px"></i><i style="left:12.6px"></i></div>
<div class="row"><i class="ar" style="top:155.5px"></i></div>
<div class="cb" style="left:28px;top:150.5px"></div>
<div class="tx" style="left:53.6px;top:151.8px"><span style="letter-spacing:0.00px">Raba vode</span></div>
<div class="dd" style="top:158px"><i style="left:0"></i><i style="left:6.3px"></i><i style="left:12.6px"></i></div>
<div class="row"><i class="ar" style="top:195.5px"></i></div>
<div class="cb" style="left:28px;top:190.5px"></div>
<div class="tx" style="left:53.6px;top:191.8px"><span style="letter-spacing:0.10px">Zavarovana in varovana območja po ZON</span></div>
<div class="dd" style="top:198px"><i style="left:0"></i><i style="left:6.3px"></i><i style="left:12.6px"></i></div>
<div class="row"><i class="ar" style="top:236.0px"></i></div>
<div class="cb" style="left:28px;top:231.0px"></div>
<div class="tx" style="left:53.6px;top:232.3px"><span style="letter-spacing:0.40px">Monitoring voda</span></div>
<div class="dd" style="top:238.5px"><i style="left:0"></i><i style="left:6.3px"></i><i style="left:12.6px"></i></div>
<div class="row"><i class="ar" style="top:276.5px"></i></div>
<div class="cb on" style="left:28px;top:271.5px"><svg width="17" height="17"><path d="M3.8 8.6 L7.2 11.8 L13.2 5.2" fill="none" stroke="#fff" stroke-width="2"/></svg></div>
<div class="tx" style="left:53.6px;top:272.8px"><span style="letter-spacing:0.27px">Ogrožena območja</span></div>
<div class="dd" style="top:279px"><i style="left:0"></i><i style="left:6.3px"></i><i style="left:12.6px"></i></div>
<div class="row"><i class="ar" style="top:318.8px"></i></div>
<div class="cb" style="left:28px;top:313.8px"></div>
<div class="tx" style="left:53.6px;top:300.7px"><span style="letter-spacing:0.20px">Opozorilna karta verjetnosti pojavljanja</span><span style="letter-spacing:0.11px">zemeljskih in hribinskih plazov SKUPNA -</span><span style="letter-spacing:0.00px">GeoZS 1:25.000</span></div>
<div class="dd" style="top:321.3px"><i style="left:0"></i><i style="left:6.3px"></i><i style="left:12.6px"></i></div>
<div class="row"><i class="ar" style="top:360.9px"></i></div>
<div class="cb" style="left:28px;top:355.9px"></div>
<div class="tx" style="left:53.6px;top:350.0px"><span style="letter-spacing:0.20px">Opozorilna karta verjetnosti pojavljanja</span><span style="letter-spacing:0.06px">zemeljskih plazov - GeoZS 1:25.000</span></div>
<div class="dd" style="top:363.4px"><i style="left:0"></i><i style="left:6.3px"></i><i style="left:12.6px"></i></div>
<div class="row"><i class="ar" style="top:400.8px"></i></div>
<div class="cb" style="left:28px;top:395.8px"></div>
<div class="tx" style="left:53.6px;top:389.9px"><span style="letter-spacing:0.18px">Opozorilna karta verjetnosti pojavljanja skalnih</span><span style="letter-spacing:0.18px">podorov - GeoZS 1:25.000</span></div>
<div class="dd" style="top:403.3px"><i style="left:0"></i><i style="left:6.3px"></i><i style="left:12.6px"></i></div>
<div class="row"><i class="ar" style="top:441.0px"></i></div>
<div class="cb" style="left:28px;top:436.0px"></div>
<div class="tx" style="left:53.6px;top:430.1px"><span style="letter-spacing:0.20px">Opozorilna karta verjetnosti pojavljanja</span><span style="letter-spacing:0.15px">drobirskih tokov - GeoZS 1:25.000</span></div>
<div class="dd" style="top:443.5px"><i style="left:0"></i><i style="left:6.3px"></i><i style="left:12.6px"></i></div>
<div class="row"><i class="ar" style="top:481.29999999999995px"></i></div>
<div class="cb" style="left:28px;top:476.29999999999995px"></div>
<div class="tx" style="left:53.6px;top:470.4px"><span style="letter-spacing:0.15px">Sloj z letom izdelave opozorilnih kart in</span><span style="letter-spacing:0.15px">povezavami na poročila</span></div>
<div class="dd" style="top:483.79999999999995px"><i style="left:0"></i><i style="left:6.3px"></i><i style="left:12.6px"></i></div>
<div class="row"><i class="ad" style="left:18.5px;top:523px"></i></div>
<div class="cb on" style="left:28px;top:516.5px"><svg width="17" height="17"><path d="M3.8 8.6 L7.2 11.8 L13.2 5.2" fill="none" stroke="#fff" stroke-width="2"/></svg></div>
<div class="tx" style="left:53.6px;top:510.6px"><span style="letter-spacing:0.14px">Terensko preverjeni zemeljski in hribinski</span><span style="letter-spacing:0.00px">plazovi - GeoZS</span></div>
<div class="dd" style="top:524px"><i style="left:0"></i><i style="left:6.3px"></i><i style="left:12.6px"></i></div>
<div style="position:absolute;left:14px;top:546px;width:326px;height:39px;background:#dce0e4"></div>
<div class="row"><i class="ad" style="left:31.0px;top:563.3px"></i></div>
<div class="cb on" style="left:40.5px;top:556.8px"><svg width="17" height="17"><path d="M3.8 8.6 L7.2 11.8 L13.2 5.2" fill="none" stroke="#fff" stroke-width="2"/></svg></div>
<div class="tx" style="left:66.1px;top:550.9px"><span style="letter-spacing:0.14px">Terensko preverjeni zemeljski in hribinski</span><span style="letter-spacing:-0.07px">plazovi - GeoZS</span></div>
<div class="dd" style="top:564.3px"><i style="left:0"></i><i style="left:6.3px"></i><i style="left:12.6px"></i></div>
<div class="lg" style="top:593.8px;background:#d9121c;border:1px solid #8c0a10"></div>
<div class="lt" style="top:592.8px;letter-spacing:-0.1px">2019</div>
<div class="lg" style="top:618.9px;background:#ad12de;border:1px solid #6f0a8c"></div>
<div class="lt" style="top:617.9px;letter-spacing:-0.1px">2024</div>
<div class="lg" style="top:644.6px;background:#4ad012;border:1px solid #2a8a08"></div>
<div class="lt" style="top:643.6px;letter-spacing:-0.17px">2020, 2021, 2022, 2023</div>
<div id="sbt"></div><div id="sbh"></div>
</div>
<div id="scale">1:1024000</div><div id="coord"><div class="ic"><svg width="17" height="17"><path d="M8.5 3.5 v3 M8.5 10.5 v3 M3.5 8.5 h3 M10.5 8.5 h3" stroke="#fff" stroke-width="1.6"/></svg></div><div class="v">468.810,922 27.034,704 Metri</div></div><div id="btab"></div>
</div>
</body>
</html>
